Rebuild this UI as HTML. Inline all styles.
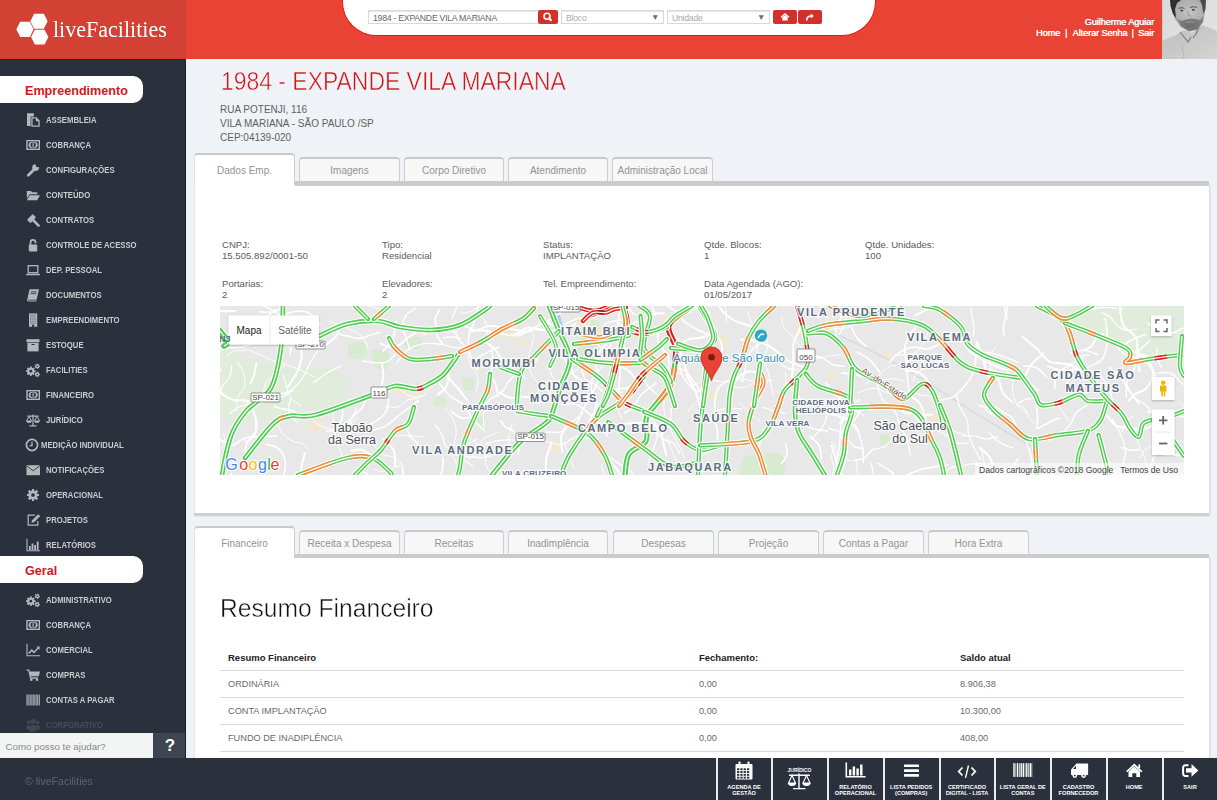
<!DOCTYPE html><html><head><meta charset="utf-8"><style>*{box-sizing:border-box;margin:0;padding:0}
html,body{width:1217px;height:800px;overflow:hidden;background:#eff2f7;font-family:"Liberation Sans",sans-serif;position:relative}
.a{position:absolute;white-space:nowrap}
#hdr{position:absolute;left:0;top:0;width:1217px;height:59px;background:#e94335}
#logo{position:absolute;left:0;top:0;width:186px;height:59px;background:#d34134}
#pill{position:absolute;left:342px;top:-40px;width:534px;height:76px;background:#fff;border-radius:0 0 34px 34px;border:1px solid #e3190f;border-top:none}
.inp{position:absolute;top:10px;height:14px;background:#fff;border:1px solid #d9d9d9;box-shadow:inset 0 1px 1px #e4e4e4;font-size:8.7px;color:#666;line-height:15px;padding-left:4px;white-space:nowrap;overflow:hidden;letter-spacing:-0.25px}
.sel .arr{position:absolute;right:3.5px;top:-1.5px;font-size:8.5px;color:#6f6f6f;letter-spacing:0}
.rbtn{position:absolute;top:10px;height:14px;background:#d3302c;border-radius:2px}
#photo{position:absolute;left:1162px;top:0;width:55px;height:59px;background:#c8c8c8;overflow:hidden}
#side{position:absolute;left:0;top:59px;width:186px;height:699px;background:#2b313c;border-right:1.5px solid #18222e;border-top:1px solid #1d2a36}
.sec{position:absolute;left:0;width:143px;height:27px;background:#fff;border-radius:0 10px 10px 0;color:#d5171d;font-weight:bold;font-size:12.6px;line-height:31px;padding-left:25px;white-space:nowrap}
.mi{position:absolute;left:46px;font-size:8.3px;font-weight:bold;color:#c9cbcf;line-height:12px;white-space:nowrap;transform-origin:0 0;transform:scaleX(.93)}
.ic{position:absolute;left:27px;width:14px;height:14px}
.ic svg{display:block}
#chat{position:absolute;left:0;top:733px;width:153px;height:25px;background:#f3f4f4;color:#8a8a8a;font-size:9.7px;line-height:27.5px;padding-left:5.5px}
#qbtn{position:absolute;left:153px;top:733px;width:32px;height:25px;background:#3f4550;color:#fff;font-weight:bold;font-size:17px;line-height:26px;text-align:center;padding-left:2px}
#title{left:221px;top:65.5px;font-size:25px;color:#cf1419;-webkit-text-stroke:0.5px #eff2f7;line-height:30px;transform-origin:0 0;transform:scaleX(.917)}
.addr{left:220px;font-size:10px;color:#5f5f5f;line-height:12px;margin-top:2px}
.panel{position:absolute;background:#fff;box-shadow:1px 0 2px rgba(0,0,0,.12);border-left:1px solid #e3e6ea}
.band{position:absolute;height:4.5px;background:#cbcbcb}
.band2{position:absolute;height:2.5px;background:#d0d0d0}
.tab{position:absolute;height:24px;background:#f7f7f7;border:1.5px solid #cfcfcf;border-top:2.5px solid #c9c9c9;border-bottom:none;border-radius:4px 4px 0 0;color:#939393;font-size:10px;text-align:center;line-height:24px;white-space:nowrap;overflow:hidden}
.tab.act{background:#fff;height:32px;border-bottom:none;border-left:1px solid #dfe2e6}
.lbl{position:absolute;font-size:9.6px;color:#5c5c5c;line-height:11px;white-space:nowrap;margin-top:0.5px}
#map{position:absolute;left:220px;top:306px;width:964px;height:169px;background:#e5e3df;overflow:hidden}
#resumo{left:220px;top:592.5px;transform-origin:0 0;transform:scaleX(.985);font-size:25px;color:#111;-webkit-text-stroke:0.45px #fff;line-height:30px}
.th{font-size:9.5px;font-weight:bold;color:#222;line-height:11px}
.row{position:absolute;left:220px;width:964px;height:1px;background:#d8d8d8}
.td{font-size:9.2px;color:#6a6a6a;line-height:11px}
#foot{position:absolute;left:0;top:758px;width:1217px;height:42px;background:#2b313c}
#copy{left:25px;top:775px;font-size:11px;color:#5d6470;line-height:13px;transform-origin:0 0;transform:scaleX(.96)}
.sep{position:absolute;top:758px;width:2px;height:42px;background:#e9ebee}
.fbi{position:absolute;top:762px;width:54px;height:22px}
.fbt{top:783.5px;width:54px;color:#fff;font-size:5.6px;font-weight:bold;text-align:center;line-height:6px}
.hl{font-size:9.2px;color:#fff;line-height:11px;letter-spacing:-0.1px;text-shadow:0.35px 0 0 #fff}
</style></head><body>
<div id="hdr"></div><div id="logo"></div>
<svg style="position:absolute;left:0;top:0" width="60" height="59"><polygon points="16.35,29.30 20.18,21.70 29.82,21.70 33.65,29.30 29.82,36.90 20.18,36.90" fill="#fff"/><polygon points="30.35,21.30 34.17,13.80 43.83,13.80 47.65,21.30 43.83,28.80 34.17,28.80" fill="#fff"/><polygon points="31.05,37.10 34.88,29.70 44.53,29.70 48.35,37.10 44.53,44.50 34.88,44.50" fill="#fff"/></svg>
<div class="a" style="left:52.5px;top:16px;font:23.5px 'Liberation Serif',serif;color:#fff;line-height:26px;transform-origin:0 0;transform:scaleX(.937)">liveFacilities</div>
<div id="pill"></div>
<div class="inp" style="left:368px;width:171px">1984 - EXPANDE VILA MARIANA</div>
<div class="rbtn" style="left:538px;width:20px"><svg width="20" height="14" viewBox="0 0 20 14"><circle cx="9" cy="6.2" r="3" stroke="#fff" stroke-width="1.6" fill="none"/><path d="M11.1 8.3L13 10.2" stroke="#fff" stroke-width="2" stroke-linecap="round"/></svg></div>
<div class="inp sel" style="left:561px;width:103px;color:#aaa">Bloco<span class="arr">&#9660;</span></div>
<div class="inp sel" style="left:667px;width:103px;color:#aaa">Unidade<span class="arr">&#9660;</span></div>
<div class="rbtn" style="left:773px;width:24px"><svg width="24" height="14" viewBox="0 0 24 14"><path d="M8 7.2L12 3.8L16 7.2" stroke="#fff" stroke-width="1.2" fill="none"/><path d="M9.3 7.2L12 5L14.7 7.2V10.4H9.3z" fill="#fff"/></svg></div>
<div class="rbtn" style="left:798px;width:24px"><svg width="24" height="14" viewBox="0 0 24 14"><path d="M8.6 10.5C8.8 7.4 10.5 6 13.3 6" stroke="#fff" stroke-width="1.7" fill="none"/><path d="M12.8 3.5L15.8 6.1L12.8 8.6z" fill="#fff"/></svg></div>
<div class="a hl" style="right:63px;top:17px">Guilherme Aguiar</div>
<div class="a hl" style="left:1036px;top:28px">Home</div>
<div class="a hl" style="left:1065px;top:28px">|</div>
<div class="a hl" style="left:1072.5px;top:28px">Alterar Senha</div>
<div class="a hl" style="left:1131.5px;top:28px">|</div>
<div class="a hl" style="right:63px;top:28px">Sair</div>
<div id="photo"><svg width="55" height="59" viewBox="0 0 55 59">
<defs><linearGradient id="pbg" x1="0" y1="0" x2="1" y2="1"><stop offset="0" stop-color="#d9d9d9"/><stop offset="1" stop-color="#e6e6e6"/></linearGradient>
<radialGradient id="pface" cx="0.55" cy="0.4" r="0.6"><stop offset="0" stop-color="#c4c4c4"/><stop offset="0.7" stop-color="#adadad"/><stop offset="1" stop-color="#8f8f8f"/></radialGradient>
<linearGradient id="pshirt" x1="0" y1="0" x2="1" y2="1"><stop offset="0" stop-color="#bdbdbd"/><stop offset="1" stop-color="#d4d4d4"/></linearGradient>
<radialGradient id="pbeard" cx="0.5" cy="0.6" r="0.6"><stop offset="0" stop-color="#6a6a6a"/><stop offset="1" stop-color="#858585"/></radialGradient></defs>
<rect width="55" height="59" fill="url(#pbg)"/>
<rect x="0" y="0" width="1.2" height="59" fill="#c9d0d4"/>
<path d="M0 41 L14 35 L22 30 L30 33 L40 25 L48 28 L55 31 L55 59 L0 59z" fill="url(#pshirt)"/>
<path d="M18 32 L26 42 L29 37 M31 38 L34 34 L37 27" stroke="#7d7d7d" stroke-width="1.2" fill="none"/>
<path d="M20 44 L22 59" stroke="#b0b0b0" stroke-width="0.8"/>
<path d="M9 0 H42 L43 12 L41 22 L36 29 L27 31 L19 27 L13 19 L10 9z" fill="url(#pface)"/>
<path d="M8 0 H19 L15 3 L13 9 L14 18 L11 14 L8.5 6z" fill="#2f2f2f"/>
<path d="M38 0 H44 L43.5 9 L41.5 14 L40 5z" fill="#4a4a4a"/>
<path d="M14 17 L19 26 L27 31.5 L35 29.5 L41 22 L41.5 16 L38 20 L34 19 L29 18.5 L24 19.5 L20 21 L17 20z" fill="url(#pbeard)"/>
<path d="M24 22.5 Q28.5 21.5 32 22.5" stroke="#9a9a9a" stroke-width="1" fill="none"/>
<path d="M16.5 8.5 Q19.5 7 22.5 8.5 M28 7.5 Q31.5 6 35 7.5" stroke="#5a5a5a" stroke-width="1.1" fill="none"/>
<ellipse cx="19.8" cy="10.6" rx="1.5" ry="0.9" fill="#3a3a3a"/><ellipse cx="31.2" cy="9.8" rx="1.5" ry="0.9" fill="#3a3a3a"/>
<path d="M26 11 L26.5 15.5 L29.5 16.2" stroke="#909090" stroke-width="0.9" fill="none"/>
</svg></div>
<div id="side"></div>
<div class="sec" style="top:76px">Empreendimento</div>
<div class="mi" style="top:114px;left:46px">ASSEMBLEIA</div>
<div class="ic" style="top:113px;left:26px"><svg width="14" height="14" viewBox="0 0 14 14"><path d="M1 0.3h6.8v3.2H4.6v9.5H1z" fill="#b4b7bc"/><path d="M5.3 4.3h5.2l3.2 3.2v6.3H5.3z" fill="#b4b7bc"/><path d="M6.6 5.6h3.2v2.6h2.6v4.3H6.6z" fill="#2b313c"/></svg></div>
<div class="mi" style="top:139px;left:46px">COBRANÇA</div>
<div class="ic" style="top:138px;left:26px"><svg width="14" height="14" viewBox="0 0 14 14"><rect x="0.3" y="2" width="13.7" height="10" fill="#b4b7bc"/><rect x="1.7" y="3.4" width="10.9" height="7.2" fill="#2b313c"/><ellipse cx="7.15" cy="7" rx="4.6" ry="3.2" fill="#b4b7bc"/><ellipse cx="7.15" cy="7" rx="2.6" ry="2.4" fill="#2b313c"/><rect x="6.5" y="5.2" width="1.3" height="3.6" fill="#b4b7bc"/></svg></div>
<div class="mi" style="top:164px;left:46px">CONFIGURAÇÕES</div>
<div class="ic" style="top:163px;left:26px"><svg width="14" height="14" viewBox="0 0 14 14"><path d="M2.3 12.3L7.6 7" stroke="#b4b7bc" stroke-width="2.8" stroke-linecap="round"/><circle cx="9.6" cy="4.6" r="3.4" fill="#b4b7bc"/><path d="M9.2 0.4L10.6 4.2L14.4 3.6V0.3z" fill="#2b313c"/></svg></div>
<div class="mi" style="top:189px;left:46px">CONTEÚDO</div>
<div class="ic" style="top:188px;left:26px"><svg width="14" height="14" viewBox="0 0 14 14"><path d="M0.8 3h4.2l1.1 1.3h5.2v2H3.6L0.8 10.5z" fill="#b4b7bc"/><path d="M3.7 7.3H14l-2.8 5H0.8z" fill="#b4b7bc"/></svg></div>
<div class="mi" style="top:214px;left:46px">CONTRATOS</div>
<div class="ic" style="top:213px;left:26px"><svg width="14" height="14" viewBox="0 0 14 14"><g transform="rotate(-45 5.5 5.5)"><rect x="1.5" y="3.2" width="8" height="4.8" rx="0.6" fill="#b4b7bc"/></g><path d="M7 7L12.6 12.6" stroke="#b4b7bc" stroke-width="2.6" stroke-linecap="round"/></svg></div>
<div class="mi" style="top:239px;left:46px">CONTROLE DE ACESSO</div>
<div class="ic" style="top:238px;left:26px"><svg width="14" height="14" viewBox="0 0 14 14"><rect x="2.8" y="6.6" width="8.4" height="6.8" rx="0.8" fill="#b4b7bc"/><path d="M4.5 6.8V4.4a2.5 2.5 0 0 1 5 0v0.8" stroke="#b4b7bc" stroke-width="1.7" fill="none"/></svg></div>
<div class="mi" style="top:264px;left:46px">DEP. PESSOAL</div>
<div class="ic" style="top:263px;left:26px"><svg width="14" height="14" viewBox="0 0 14 14"><rect x="2.2" y="2.7" width="9.6" height="7" stroke="#b4b7bc" stroke-width="1.3" fill="none"/><rect x="0" y="10.7" width="14" height="1.6" rx="0.5" fill="#b4b7bc"/></svg></div>
<div class="mi" style="top:289px;left:46px">DOCUMENTOS</div>
<div class="ic" style="top:288px;left:26px"><svg width="14" height="14" viewBox="0 0 14 14"><path d="M3.6 1.2h9.4l-2.4 10.5H1.2z" fill="#b4b7bc"/><path d="M1.2 11.7L1.8 13h8.8" stroke="#b4b7bc" stroke-width="1" fill="none"/><path d="M5 3.8h5.6M4.5 5.6h5.6" stroke="#2b313c" stroke-width="0.8"/></svg></div>
<div class="mi" style="top:314px;left:46px">EMPREENDIMENTO</div>
<div class="ic" style="top:313px;left:26px"><svg width="14" height="14" viewBox="0 0 14 14"><rect x="3" y="0.4" width="8.2" height="13.4" fill="#b4b7bc"/><rect x="4.3" y="1.6" width="1.2" height="1.2" fill="#2b313c" opacity="0.55"/><rect x="4.3" y="3.6" width="1.2" height="1.2" fill="#2b313c" opacity="0.55"/><rect x="4.3" y="5.6" width="1.2" height="1.2" fill="#2b313c" opacity="0.55"/><rect x="4.3" y="7.6" width="1.2" height="1.2" fill="#2b313c" opacity="0.55"/><rect x="4.3" y="9.6" width="1.2" height="1.2" fill="#2b313c" opacity="0.55"/><rect x="6.4" y="1.6" width="1.2" height="1.2" fill="#2b313c" opacity="0.55"/><rect x="6.4" y="3.6" width="1.2" height="1.2" fill="#2b313c" opacity="0.55"/><rect x="6.4" y="5.6" width="1.2" height="1.2" fill="#2b313c" opacity="0.55"/><rect x="6.4" y="7.6" width="1.2" height="1.2" fill="#2b313c" opacity="0.55"/><rect x="6.4" y="9.6" width="1.2" height="1.2" fill="#2b313c" opacity="0.55"/><rect x="8.5" y="1.6" width="1.2" height="1.2" fill="#2b313c" opacity="0.55"/><rect x="8.5" y="3.6" width="1.2" height="1.2" fill="#2b313c" opacity="0.55"/><rect x="8.5" y="5.6" width="1.2" height="1.2" fill="#2b313c" opacity="0.55"/><rect x="8.5" y="7.6" width="1.2" height="1.2" fill="#2b313c" opacity="0.55"/><rect x="8.5" y="9.6" width="1.2" height="1.2" fill="#2b313c" opacity="0.55"/><rect x="6" y="11.7" width="2.2" height="2.1" fill="#2b313c"/></svg></div>
<div class="mi" style="top:339px;left:46px">ESTOQUE</div>
<div class="ic" style="top:338px;left:26px"><svg width="14" height="14" viewBox="0 0 14 14"><rect x="0.5" y="1.2" width="13" height="3" fill="#b4b7bc"/><rect x="1.4" y="4.8" width="11.2" height="8.6" fill="#b4b7bc"/><rect x="5.4" y="6" width="3.2" height="1" fill="#2b313c"/></svg></div>
<div class="mi" style="top:364px;left:46px">FACILITIES</div>
<div class="ic" style="top:363px;left:26px"><svg width="14" height="14" viewBox="0 0 14 14"><rect x="4.03" y="3.65" width="1.54" height="9.10" fill="#b4b7bc" transform="rotate(0.0 4.8 8.2)"/><rect x="4.03" y="3.65" width="1.54" height="9.10" fill="#b4b7bc" transform="rotate(45.0 4.8 8.2)"/><rect x="4.03" y="3.65" width="1.54" height="9.10" fill="#b4b7bc" transform="rotate(90.0 4.8 8.2)"/><rect x="4.03" y="3.65" width="1.54" height="9.10" fill="#b4b7bc" transform="rotate(135.0 4.8 8.2)"/><rect x="4.03" y="3.65" width="1.54" height="9.10" fill="#b4b7bc" transform="rotate(180.0 4.8 8.2)"/><rect x="4.03" y="3.65" width="1.54" height="9.10" fill="#b4b7bc" transform="rotate(225.0 4.8 8.2)"/><rect x="4.03" y="3.65" width="1.54" height="9.10" fill="#b4b7bc" transform="rotate(270.0 4.8 8.2)"/><rect x="4.03" y="3.65" width="1.54" height="9.10" fill="#b4b7bc" transform="rotate(315.0 4.8 8.2)"/><circle cx="4.8" cy="8.2" r="3.5" fill="#b4b7bc"/><circle cx="4.8" cy="8.2" r="1.40" fill="#2b313c"/><rect x="10.88" y="0.83" width="0.84" height="4.94" fill="#b4b7bc" transform="rotate(0.0 11.3 3.3)"/><rect x="10.88" y="0.83" width="0.84" height="4.94" fill="#b4b7bc" transform="rotate(45.0 11.3 3.3)"/><rect x="10.88" y="0.83" width="0.84" height="4.94" fill="#b4b7bc" transform="rotate(90.0 11.3 3.3)"/><rect x="10.88" y="0.83" width="0.84" height="4.94" fill="#b4b7bc" transform="rotate(135.0 11.3 3.3)"/><rect x="10.88" y="0.83" width="0.84" height="4.94" fill="#b4b7bc" transform="rotate(180.0 11.3 3.3)"/><rect x="10.88" y="0.83" width="0.84" height="4.94" fill="#b4b7bc" transform="rotate(225.0 11.3 3.3)"/><rect x="10.88" y="0.83" width="0.84" height="4.94" fill="#b4b7bc" transform="rotate(270.0 11.3 3.3)"/><rect x="10.88" y="0.83" width="0.84" height="4.94" fill="#b4b7bc" transform="rotate(315.0 11.3 3.3)"/><circle cx="11.3" cy="3.3" r="1.9" fill="#b4b7bc"/><circle cx="11.3" cy="3.3" r="0.76" fill="#2b313c"/><rect x="10.88" y="8.93" width="0.84" height="4.94" fill="#b4b7bc" transform="rotate(0.0 11.3 11.4)"/><rect x="10.88" y="8.93" width="0.84" height="4.94" fill="#b4b7bc" transform="rotate(45.0 11.3 11.4)"/><rect x="10.88" y="8.93" width="0.84" height="4.94" fill="#b4b7bc" transform="rotate(90.0 11.3 11.4)"/><rect x="10.88" y="8.93" width="0.84" height="4.94" fill="#b4b7bc" transform="rotate(135.0 11.3 11.4)"/><rect x="10.88" y="8.93" width="0.84" height="4.94" fill="#b4b7bc" transform="rotate(180.0 11.3 11.4)"/><rect x="10.88" y="8.93" width="0.84" height="4.94" fill="#b4b7bc" transform="rotate(225.0 11.3 11.4)"/><rect x="10.88" y="8.93" width="0.84" height="4.94" fill="#b4b7bc" transform="rotate(270.0 11.3 11.4)"/><rect x="10.88" y="8.93" width="0.84" height="4.94" fill="#b4b7bc" transform="rotate(315.0 11.3 11.4)"/><circle cx="11.3" cy="11.4" r="1.9" fill="#b4b7bc"/><circle cx="11.3" cy="11.4" r="0.76" fill="#2b313c"/></svg></div>
<div class="mi" style="top:389px;left:46px">FINANCEIRO</div>
<div class="ic" style="top:388px;left:26px"><svg width="14" height="14" viewBox="0 0 14 14"><rect x="0.3" y="2" width="13.7" height="10" fill="#b4b7bc"/><rect x="1.7" y="3.4" width="10.9" height="7.2" fill="#2b313c"/><ellipse cx="7.15" cy="7" rx="4.6" ry="3.2" fill="#b4b7bc"/><ellipse cx="7.15" cy="7" rx="2.6" ry="2.4" fill="#2b313c"/><rect x="6.5" y="5.2" width="1.3" height="3.6" fill="#b4b7bc"/></svg></div>
<div class="mi" style="top:414px;left:46px">JURÍDICO</div>
<div class="ic" style="top:413px;left:26px"><svg width="14" height="14" viewBox="0 0 14 14"><path d="M7 1.5V12.5M3.5 12.8h7M1.5 3.2h11" stroke="#b4b7bc" stroke-width="1.2" fill="none"/><path d="M3 3.2L0.5 8h5z M11 3.2L8.5 8h5z" stroke="#b4b7bc" stroke-width="1" fill="none"/><path d="M0.3 8h5.4a2.7 2 0 0 1-5.4 0z M8.3 8h5.4a2.7 2 0 0 1-5.4 0z" fill="#b4b7bc"/></svg></div>
<div class="mi" style="top:439px;left:41px">MEDIÇÃO INDIVIDUAL</div>
<div class="ic" style="top:438px;left:25px"><svg width="14" height="14" viewBox="0 0 14 14"><circle cx="7" cy="7" r="5.6" stroke="#b4b7bc" stroke-width="1.7" fill="none"/><path d="M7 3.8V7.6H4.6" stroke="#b4b7bc" stroke-width="1.3" fill="none"/></svg></div>
<div class="mi" style="top:464px;left:46px">NOTIFICAÇÕES</div>
<div class="ic" style="top:463px;left:26px"><svg width="14" height="14" viewBox="0 0 14 14"><rect x="0.5" y="2.2" width="13.5" height="10" fill="#b4b7bc"/><path d="M0.5 2.6L7.25 7.8L14 2.6" stroke="#2b313c" stroke-width="0.9" fill="none"/></svg></div>
<div class="mi" style="top:489px;left:46px">OPERACIONAL</div>
<div class="ic" style="top:488px;left:26px"><svg width="14" height="14" viewBox="0 0 14 14"><rect x="5.99" y="1.02" width="2.02" height="11.96" fill="#b4b7bc" transform="rotate(0.0 7 7)"/><rect x="5.99" y="1.02" width="2.02" height="11.96" fill="#b4b7bc" transform="rotate(45.0 7 7)"/><rect x="5.99" y="1.02" width="2.02" height="11.96" fill="#b4b7bc" transform="rotate(90.0 7 7)"/><rect x="5.99" y="1.02" width="2.02" height="11.96" fill="#b4b7bc" transform="rotate(135.0 7 7)"/><rect x="5.99" y="1.02" width="2.02" height="11.96" fill="#b4b7bc" transform="rotate(180.0 7 7)"/><rect x="5.99" y="1.02" width="2.02" height="11.96" fill="#b4b7bc" transform="rotate(225.0 7 7)"/><rect x="5.99" y="1.02" width="2.02" height="11.96" fill="#b4b7bc" transform="rotate(270.0 7 7)"/><rect x="5.99" y="1.02" width="2.02" height="11.96" fill="#b4b7bc" transform="rotate(315.0 7 7)"/><circle cx="7" cy="7" r="4.6" fill="#b4b7bc"/><circle cx="7" cy="7" r="1.84" fill="#2b313c"/></svg></div>
<div class="mi" style="top:514px;left:46px">PROJETOS</div>
<div class="ic" style="top:513px;left:26px"><svg width="14" height="14" viewBox="0 0 14 14"><path d="M9 2.2H2.2v10h9.6V8" stroke="#b4b7bc" stroke-width="1.2" fill="none"/><path d="M5.5 9.8l0.6-2.6l6-6l2 2l-6 6z" fill="#b4b7bc"/></svg></div>
<div class="mi" style="top:539px;left:46px">RELATÓRIOS</div>
<div class="ic" style="top:538px;left:26px"><svg width="14" height="14" viewBox="0 0 14 14"><path d="M1 0.8V12.8H14" stroke="#b4b7bc" stroke-width="1.1" fill="none"/><rect x="3" y="8" width="1.8" height="4" fill="#b4b7bc"/><rect x="5.6" y="5.5" width="1.8" height="6.5" fill="#b4b7bc"/><rect x="8.2" y="7" width="1.8" height="5" fill="#b4b7bc"/><rect x="10.8" y="3.5" width="1.8" height="8.5" fill="#b4b7bc"/></svg></div>
<div class="sec" style="top:556px">Geral</div>
<div class="mi" style="top:594px">ADMINISTRATIVO</div>
<div class="ic" style="top:593px;left:26px"><svg width="14" height="14" viewBox="0 0 14 14"><rect x="4.03" y="3.65" width="1.54" height="9.10" fill="#b4b7bc" transform="rotate(0.0 4.8 8.2)"/><rect x="4.03" y="3.65" width="1.54" height="9.10" fill="#b4b7bc" transform="rotate(45.0 4.8 8.2)"/><rect x="4.03" y="3.65" width="1.54" height="9.10" fill="#b4b7bc" transform="rotate(90.0 4.8 8.2)"/><rect x="4.03" y="3.65" width="1.54" height="9.10" fill="#b4b7bc" transform="rotate(135.0 4.8 8.2)"/><rect x="4.03" y="3.65" width="1.54" height="9.10" fill="#b4b7bc" transform="rotate(180.0 4.8 8.2)"/><rect x="4.03" y="3.65" width="1.54" height="9.10" fill="#b4b7bc" transform="rotate(225.0 4.8 8.2)"/><rect x="4.03" y="3.65" width="1.54" height="9.10" fill="#b4b7bc" transform="rotate(270.0 4.8 8.2)"/><rect x="4.03" y="3.65" width="1.54" height="9.10" fill="#b4b7bc" transform="rotate(315.0 4.8 8.2)"/><circle cx="4.8" cy="8.2" r="3.5" fill="#b4b7bc"/><circle cx="4.8" cy="8.2" r="1.40" fill="#2b313c"/><rect x="10.88" y="0.83" width="0.84" height="4.94" fill="#b4b7bc" transform="rotate(0.0 11.3 3.3)"/><rect x="10.88" y="0.83" width="0.84" height="4.94" fill="#b4b7bc" transform="rotate(45.0 11.3 3.3)"/><rect x="10.88" y="0.83" width="0.84" height="4.94" fill="#b4b7bc" transform="rotate(90.0 11.3 3.3)"/><rect x="10.88" y="0.83" width="0.84" height="4.94" fill="#b4b7bc" transform="rotate(135.0 11.3 3.3)"/><rect x="10.88" y="0.83" width="0.84" height="4.94" fill="#b4b7bc" transform="rotate(180.0 11.3 3.3)"/><rect x="10.88" y="0.83" width="0.84" height="4.94" fill="#b4b7bc" transform="rotate(225.0 11.3 3.3)"/><rect x="10.88" y="0.83" width="0.84" height="4.94" fill="#b4b7bc" transform="rotate(270.0 11.3 3.3)"/><rect x="10.88" y="0.83" width="0.84" height="4.94" fill="#b4b7bc" transform="rotate(315.0 11.3 3.3)"/><circle cx="11.3" cy="3.3" r="1.9" fill="#b4b7bc"/><circle cx="11.3" cy="3.3" r="0.76" fill="#2b313c"/><rect x="10.88" y="8.93" width="0.84" height="4.94" fill="#b4b7bc" transform="rotate(0.0 11.3 11.4)"/><rect x="10.88" y="8.93" width="0.84" height="4.94" fill="#b4b7bc" transform="rotate(45.0 11.3 11.4)"/><rect x="10.88" y="8.93" width="0.84" height="4.94" fill="#b4b7bc" transform="rotate(90.0 11.3 11.4)"/><rect x="10.88" y="8.93" width="0.84" height="4.94" fill="#b4b7bc" transform="rotate(135.0 11.3 11.4)"/><rect x="10.88" y="8.93" width="0.84" height="4.94" fill="#b4b7bc" transform="rotate(180.0 11.3 11.4)"/><rect x="10.88" y="8.93" width="0.84" height="4.94" fill="#b4b7bc" transform="rotate(225.0 11.3 11.4)"/><rect x="10.88" y="8.93" width="0.84" height="4.94" fill="#b4b7bc" transform="rotate(270.0 11.3 11.4)"/><rect x="10.88" y="8.93" width="0.84" height="4.94" fill="#b4b7bc" transform="rotate(315.0 11.3 11.4)"/><circle cx="11.3" cy="11.4" r="1.9" fill="#b4b7bc"/><circle cx="11.3" cy="11.4" r="0.76" fill="#2b313c"/></svg></div>
<div class="mi" style="top:619px">COBRANÇA</div>
<div class="ic" style="top:618px;left:26px"><svg width="14" height="14" viewBox="0 0 14 14"><rect x="0.3" y="2" width="13.7" height="10" fill="#b4b7bc"/><rect x="1.7" y="3.4" width="10.9" height="7.2" fill="#2b313c"/><ellipse cx="7.15" cy="7" rx="4.6" ry="3.2" fill="#b4b7bc"/><ellipse cx="7.15" cy="7" rx="2.6" ry="2.4" fill="#2b313c"/><rect x="6.5" y="5.2" width="1.3" height="3.6" fill="#b4b7bc"/></svg></div>
<div class="mi" style="top:644px">COMERCIAL</div>
<div class="ic" style="top:643px;left:26px"><svg width="14" height="14" viewBox="0 0 14 14"><path d="M1 0.8V12.8H14" stroke="#b4b7bc" stroke-width="1.1" fill="none"/><path d="M2.6 10.6L5.8 7.2L8 9.4L12.6 4.6" stroke="#b4b7bc" stroke-width="1.5" fill="none"/><path d="M10.4 3.6h3.2v3.2z" fill="#b4b7bc"/></svg></div>
<div class="mi" style="top:669px">COMPRAS</div>
<div class="ic" style="top:668px;left:26px"><svg width="14" height="14" viewBox="0 0 14 14"><path d="M0.5 2.2h2.3l1.8 7.8h7.2" stroke="#b4b7bc" stroke-width="1.3" fill="none"/><path d="M3.5 3.5H14L12.8 8.2H4.5z" fill="#b4b7bc"/><circle cx="5.3" cy="11.8" r="1.3" fill="#b4b7bc"/><circle cx="11" cy="11.8" r="1.3" fill="#b4b7bc"/></svg></div>
<div class="mi" style="top:694px">CONTAS A PAGAR</div>
<div class="ic" style="top:693px;left:26px"><svg width="14" height="14" viewBox="0 0 14 14"><rect x="0.5" y="1.5" width="1.2" height="11" fill="#b4b7bc"/><rect x="2.3" y="1.5" width="0.6" height="11" fill="#b4b7bc"/><rect x="3.5" y="1.5" width="1.2" height="11" fill="#b4b7bc"/><rect x="5.3" y="1.5" width="0.6" height="11" fill="#b4b7bc"/><rect x="6.5" y="1.5" width="1.2" height="11" fill="#b4b7bc"/><rect x="8.3" y="1.5" width="1.2" height="11" fill="#b4b7bc"/><rect x="10" y="1.5" width="0.6" height="11" fill="#b4b7bc"/><rect x="11.2" y="1.5" width="1.2" height="11" fill="#b4b7bc"/><rect x="13" y="1.5" width="0.8" height="11" fill="#b4b7bc"/></svg></div>
<div class="mi" style="top:719px ;opacity:.17">CORPORATIVO</div>
<div class="ic" style="top:718px;left:26px ;opacity:.17"><svg width="14" height="14" viewBox="0 0 14 14"><circle cx="7" cy="3.6" r="2.5" fill="#b4b7bc"/><circle cx="2.5" cy="4.4" r="1.9" fill="#b4b7bc"/><circle cx="11.5" cy="4.4" r="1.9" fill="#b4b7bc"/><path d="M3.5 13.5v-3.5a3.5 3 0 0 1 7 0v3.5z M0 11.5v-2.5a2.4 2.2 0 0 1 3.8-1.4v3.9z M14 11.5v-2.5a2.4 2.2 0 0 0-3.8-1.4v3.9z" fill="#b4b7bc"/></svg></div>
<div id="chat">Como posso te ajudar?</div><div id="qbtn">?</div>
<div class="a" id="title">1984 - EXPANDE VILA MARIANA</div>
<div class="a addr" style="top:102px">RUA POTENJI, 116</div>
<div class="a addr" style="top:116px">VILA MARIANA - SÃO PAULO /SP</div>
<div class="a addr" style="top:130px">CEP:04139-020</div>
<div class="panel" style="left:194px;top:185px;width:1015px;height:331px"></div>
<div class="band" style="left:295px;top:181px;width:914px"></div>
<div class="band2" style="left:194px;top:513px;width:1015px"></div>
<div class="tab act" style="left:194px;top:153px;width:101px;padding-top:4px;line-height:24px">Dados Emp.</div>
<div class="tab" style="left:299px;top:157px;width:101px">Imagens</div>
<div class="tab" style="left:404px;top:157px;width:100px">Corpo Diretivo</div>
<div class="tab" style="left:508px;top:157px;width:100px">Atendimento</div>
<div class="tab" style="left:612px;top:157px;width:101px">Administração Local</div>
<div class="lbl" style="left:222px;top:238px">CNPJ:<br>15.505.892/0001-50</div>
<div class="lbl" style="left:382px;top:238px">Tipo:<br>Residencial</div>
<div class="lbl" style="left:543px;top:238px">Status:<br>IMPLANTAÇÃO</div>
<div class="lbl" style="left:704px;top:238px">Qtde. Blocos:<br>1</div>
<div class="lbl" style="left:865px;top:238px">Qtde. Unidades:<br>100</div>
<div class="lbl" style="left:222px;top:277px">Portarias:<br>2</div>
<div class="lbl" style="left:382px;top:277px">Elevadores:<br>2</div>
<div class="lbl" style="left:543px;top:277px">Tel. Empreendimento:<br></div>
<div class="lbl" style="left:704px;top:277px">Data Agendada (AGO):<br>01/05/2017</div>
<div id="map"><svg width="964" height="169" viewBox="0 0 964 169" style="display:block">
<rect width="964" height="169" fill="#e8e8e8"/>
<path d="M0.0 40.0 C6.7 42.5 25.0 51.7 40.0 55.0 C55.0 58.3 75.8 57.5 90.0 60.0 C104.2 62.5 120.0 63.3 125.0 70.0 C130.0 76.7 129.2 94.2 120.0 100.0 C110.8 105.8 83.3 102.5 70.0 105.0 C56.7 107.5 51.7 114.2 40.0 115.0 C28.3 115.8 6.7 122.5 0.0 110.0 C-6.7 97.5 0.0 51.7 0.0 40.0Z" fill="#e1ecdc"/>
<path d="M128.0 38.0 C130.8 37.7 142.0 34.0 145.0 36.0 C148.0 38.0 148.5 47.3 146.0 50.0 C143.5 52.7 133.0 54.0 130.0 52.0 C127.0 50.0 128.3 40.3 128.0 38.0Z" fill="#d6ebd0"/>
<path d="M152.0 44.0 C154.7 44.3 165.5 43.0 168.0 46.0 C170.5 49.0 169.2 59.5 167.0 62.0 C164.8 64.5 157.5 64.0 155.0 61.0 C152.5 58.0 152.5 46.8 152.0 44.0Z" fill="#d6ebd0"/>
<path d="M183.0 33.0 C185.8 32.7 197.3 29.5 200.0 31.0 C202.7 32.5 201.3 40.2 199.0 42.0 C196.7 43.8 188.7 43.5 186.0 42.0 C183.3 40.5 183.5 34.5 183.0 33.0Z" fill="#d6ebd0"/>
<path d="M214.0 92.0 C215.8 91.8 223.3 89.7 225.0 91.0 C226.7 92.3 225.7 98.7 224.0 100.0 C222.3 101.3 216.7 100.3 215.0 99.0 C213.3 97.7 214.2 93.2 214.0 92.0Z" fill="#d6ebd0"/>
<path d="M358.0 18.0 C361.3 17.7 374.3 10.7 378.0 16.0 C381.7 21.3 383.0 44.0 380.0 50.0 C377.0 56.0 363.7 57.3 360.0 52.0 C356.3 46.7 358.3 23.7 358.0 18.0Z" fill="#d6ebd0"/>
<path d="M845.0 0.0 C864.8 0.0 944.2 -8.3 964.0 0.0 C983.8 8.3 971.3 41.3 964.0 50.0 C956.7 58.7 934.0 55.3 920.0 52.0 C906.0 48.7 891.7 36.2 880.0 30.0 C868.3 23.8 855.8 20.0 850.0 15.0 C844.2 10.0 845.8 2.5 845.0 0.0Z" fill="#e1ecdc"/>
<path d="M243.0 73.0 C244.8 73.0 252.5 71.2 254.0 73.0 C255.5 74.8 253.7 82.3 252.0 84.0 C250.3 85.7 245.5 84.8 244.0 83.0 C242.5 81.2 243.2 74.7 243.0 73.0Z" fill="#d6ebd0"/>
<path d="M255.0 112.0 C256.7 111.7 263.8 108.7 265.0 110.0 C266.2 111.3 263.5 118.5 262.0 120.0 C260.5 121.5 257.2 120.3 256.0 119.0 C254.8 117.7 255.2 113.2 255.0 112.0Z" fill="#d6ebd0"/>
<path d="M660.0 130.0 C661.3 129.7 666.3 126.7 668.0 128.0 C669.7 129.3 671.2 136.3 670.0 138.0 C668.8 139.7 662.7 139.3 661.0 138.0 C659.3 136.7 660.2 131.3 660.0 130.0Z" fill="#d6ebd0"/>
<path d="M525.0 150.0 C530.8 149.7 553.8 144.8 560.0 148.0 C566.2 151.2 568.3 165.5 562.0 169.0 C555.7 172.5 528.2 172.2 522.0 169.0 C515.8 165.8 524.5 153.2 525.0 150.0Z" fill="#d6ebd0"/>
<rect x="47" y="25" width="12" height="14" rx="2" fill="#f3e8cf" opacity="0.9"/>
<rect x="88" y="116" width="14" height="9" rx="2" fill="#f3e8cf" opacity="0.9"/>
<rect x="168" y="78" width="12" height="8" rx="2" fill="#f3e8cf" opacity="0.9"/>
<rect x="282" y="22" width="14" height="10" rx="2" fill="#f3e8cf" opacity="0.9"/>
<rect x="296" y="34" width="10" height="6" rx="2" fill="#f3e8cf" opacity="0.9"/>
<rect x="354" y="10" width="16" height="12" rx="2" fill="#f3e8cf" opacity="0.9"/>
<rect x="371" y="20" width="12" height="8" rx="2" fill="#f3e8cf" opacity="0.9"/>
<rect x="412" y="25" width="12" height="7" rx="2" fill="#f3e8cf" opacity="0.9"/>
<rect x="440" y="12" width="10" height="10" rx="2" fill="#f3e8cf" opacity="0.9"/>
<rect x="576" y="14" width="8" height="16" rx="2" fill="#f3e8cf" opacity="0.9"/>
<rect x="605" y="12" width="6" height="12" rx="2" fill="#f3e8cf" opacity="0.9"/>
<rect x="487" y="85" width="10" height="8" rx="2" fill="#f3e8cf" opacity="0.9"/>
<rect x="624" y="95" width="10" height="8" rx="2" fill="#f3e8cf" opacity="0.9"/>
<rect x="662" y="44" width="8" height="8" rx="2" fill="#f3e8cf" opacity="0.9"/>
<rect x="606" y="68" width="10" height="6" rx="2" fill="#f3e8cf" opacity="0.9"/>
<rect x="584" y="67" width="8" height="6" rx="2" fill="#f3e8cf" opacity="0.9"/>
<rect x="790" y="58" width="8" height="8" rx="2" fill="#f3e8cf" opacity="0.9"/>
<rect x="845" y="32" width="8" height="6" rx="2" fill="#f3e8cf" opacity="0.9"/>
<rect x="328" y="135" width="14" height="10" rx="2" fill="#f3e8cf" opacity="0.9"/>
<rect x="177" y="83" width="12" height="6" rx="2" fill="#f3e8cf" opacity="0.9"/>
<rect x="190" y="88" width="10" height="6" rx="2" fill="#f3e8cf" opacity="0.9"/>
<rect x="96" y="112" width="8" height="6" rx="2" fill="#f3e8cf" opacity="0.9"/>
<rect x="420" y="40" width="10" height="6" rx="2" fill="#f3e8cf" opacity="0.9"/>
<rect x="500" y="30" width="8" height="12" rx="2" fill="#f3e8cf" opacity="0.9"/>
<rect x="380" y="150" width="10" height="8" rx="2" fill="#f3e8cf" opacity="0.9"/>
<rect x="710" y="110" width="8" height="8" rx="2" fill="#f3e8cf" opacity="0.9"/>
<rect x="470" y="110" width="8" height="6" rx="2" fill="#f3e8cf" opacity="0.9"/>
<path d="M339.0 0.0 C340.2 4.2 343.8 16.2 346.0 25.0 C348.2 33.8 352.5 43.8 352.0 53.0 C351.5 62.2 346.0 70.5 343.0 80.0 C340.0 89.5 336.8 103.7 334.0 110.0 C331.2 116.3 331.7 113.5 326.0 118.0 C320.3 122.5 308.7 128.5 300.0 137.0 C291.3 145.5 278.3 163.7 274.0 169.0" stroke="#a3cff2" stroke-width="3.2" fill="none" transform="translate(-3.5,0)"/>
<path d="M600.0 20.0 C613.3 26.7 653.3 45.0 680.0 60.0 C706.7 75.0 738.3 96.7 760.0 110.0 C781.7 123.3 801.7 135.0 810.0 140.0" stroke="#cfd8e0" stroke-width="1.2" fill="none"/>
<path d="M312.2 25.5 C310.7 25.4 306.1 24.4 303.5 25.2 C300.8 25.9 297.4 29.2 296.2 30.0" stroke="#ffffff" stroke-width="1.3" fill="none" stroke-linecap="round"/>
<path d="M489.2 6.3 C489.1 8.4 487.9 14.8 489.0 18.5 C490.2 22.2 493.8 25.1 496.0 28.5 C498.1 32.0 501.2 35.4 501.9 39.1 C502.7 42.9 501.4 47.3 500.6 51.3 C499.7 55.2 497.6 61.0 497.0 62.9" stroke="#ffffff" stroke-width="2.0" fill="none" stroke-linecap="round"/>
<path d="M562.0 10.5 C562.2 11.9 561.9 16.3 562.9 18.9 C563.8 21.5 566.0 23.6 567.8 25.8 C569.6 28.0 571.6 30.0 573.5 32.2 C575.3 34.3 577.1 36.5 578.8 38.8 C580.4 41.1 582.6 44.8 583.4 45.9" stroke="#ffffff" stroke-width="1.0" fill="none" stroke-linecap="round"/>
<path d="M540.1 115.3 C538.3 113.8 532.9 109.5 529.5 106.4 C526.0 103.4 521.1 98.5 519.4 96.9" stroke="#ffffff" stroke-width="1.0" fill="none" stroke-linecap="round"/>
<path d="M60.5 10.1 C58.7 8.9 53.4 5.2 49.7 2.9 C46.1 0.6 41.4 -0.7 38.6 -3.7 C35.8 -6.8 34.0 -13.5 33.1 -15.5" stroke="#ffffff" stroke-width="1.6" fill="none" stroke-linecap="round"/>
<path d="M348.6 42.0 C348.4 44.5 348.0 52.0 347.6 56.9 C347.2 61.9 347.8 67.3 346.1 71.9 C344.3 76.4 338.7 82.0 337.3 84.0" stroke="#ffffff" stroke-width="1.6" fill="none" stroke-linecap="round"/>
<path d="M703.2 48.7 C701.7 48.9 696.9 48.9 694.1 50.1 C691.4 51.2 688.0 54.7 686.8 55.6" stroke="#ffffff" stroke-width="2.0" fill="none" stroke-linecap="round"/>
<path d="M471.4 6.6 C469.9 4.5 466.1 -2.5 462.7 -6.4 C459.3 -10.3 452.9 -15.0 450.9 -16.7" stroke="#ffffff" stroke-width="1.6" fill="none" stroke-linecap="round"/>
<path d="M670.3 100.4 C671.7 100.8 676.0 101.6 678.6 102.7 C681.3 103.9 683.4 106.6 686.1 107.2 C688.8 107.9 691.9 106.4 694.8 106.6 C697.6 106.9 700.3 108.5 703.2 108.8 C706.0 109.2 710.4 108.7 711.9 108.7" stroke="#ffffff" stroke-width="2.0" fill="none" stroke-linecap="round"/>
<path d="M557.1 115.1 C555.5 116.0 549.9 117.7 547.5 120.2 C545.2 122.7 544.5 126.7 543.1 130.1 C541.7 133.4 539.7 136.7 539.2 140.2 C538.8 143.7 539.1 147.7 540.3 151.0 C541.6 154.2 545.7 158.3 546.7 159.7" stroke="#ffffff" stroke-width="1.3" fill="none" stroke-linecap="round"/>
<path d="M56.8 129.8 C54.3 130.0 46.6 130.4 41.5 130.7 C36.4 131.1 30.9 130.3 26.1 131.7 C21.4 133.2 15.1 138.2 12.9 139.5" stroke="#ffffff" stroke-width="1.6" fill="none" stroke-linecap="round"/>
<path d="M387.2 47.0 C388.2 44.5 391.7 37.1 393.5 32.1 C395.4 27.0 397.1 21.8 398.1 16.5 C399.1 11.2 399.3 3.1 399.5 0.4" stroke="#ffffff" stroke-width="1.6" fill="none" stroke-linecap="round"/>
<path d="M852.4 161.9 C852.9 163.2 853.9 167.9 855.8 170.0 C857.7 172.0 861.4 172.3 863.6 174.1 C865.7 176.0 867.9 180.1 868.7 181.3" stroke="#ffffff" stroke-width="1.0" fill="none" stroke-linecap="round"/>
<path d="M175.8 47.6 C174.3 49.0 170.2 54.2 166.7 55.8 C163.2 57.3 158.6 57.1 154.6 56.9 C150.5 56.8 144.6 55.2 142.5 54.9" stroke="#ffffff" stroke-width="1.3" fill="none" stroke-linecap="round"/>
<path d="M496.9 104.4 C499.0 104.0 505.1 102.3 509.3 102.1 C513.4 101.9 519.7 102.9 521.8 103.0" stroke="#ffffff" stroke-width="1.3" fill="none" stroke-linecap="round"/>
<path d="M539.1 67.3 C537.7 66.9 533.2 65.0 530.3 65.2 C527.5 65.4 524.4 66.9 521.9 68.5 C519.5 70.2 517.1 72.4 515.5 74.9 C514.0 77.4 513.4 80.6 512.8 83.5 C512.2 86.5 512.1 91.0 511.9 92.5" stroke="#ffffff" stroke-width="2.0" fill="none" stroke-linecap="round"/>
<path d="M50.7 0.0 C52.9 -0.3 60.1 -0.2 63.9 -2.2 C67.7 -4.1 71.0 -7.8 73.5 -11.4 C76.0 -15.0 77.8 -21.7 78.7 -23.8" stroke="#ffffff" stroke-width="1.0" fill="none" stroke-linecap="round"/>
<path d="M362.7 107.2 C360.9 108.7 355.5 113.2 352.0 116.3 C348.4 119.3 345.5 123.9 341.4 125.5 C337.3 127.2 332.1 125.9 327.4 126.2 C322.8 126.5 315.8 127.1 313.4 127.3" stroke="#ffffff" stroke-width="1.3" fill="none" stroke-linecap="round"/>
<path d="M300.6 24.4 C298.1 24.0 290.4 23.1 285.4 22.3 C280.3 21.6 275.2 19.7 270.1 19.9 C265.1 20.2 260.1 24.1 255.2 23.8 C250.4 23.5 243.3 19.1 240.9 18.2" stroke="#ffffff" stroke-width="1.6" fill="none" stroke-linecap="round"/>
<path d="M348.7 116.6 C347.5 118.9 342.3 125.4 341.2 130.3 C340.2 135.2 342.2 143.2 342.4 145.8" stroke="#ffffff" stroke-width="2.0" fill="none" stroke-linecap="round"/>
<path d="M815.0 87.6 C815.2 89.5 815.9 95.3 816.3 99.1 C816.7 102.9 817.5 106.7 817.6 110.6 C817.6 114.4 816.8 120.2 816.6 122.1" stroke="#ffffff" stroke-width="1.6" fill="none" stroke-linecap="round"/>
<path d="M591.2 133.2 C593.0 131.3 599.4 126.0 602.2 121.6 C605.1 117.2 606.2 111.7 608.2 106.7 C610.3 101.8 613.5 94.4 614.5 91.9" stroke="#ffffff" stroke-width="1.3" fill="none" stroke-linecap="round"/>
<path d="M342.8 4.9 C340.6 6.4 334.2 11.3 329.7 13.9 C325.1 16.6 317.8 19.8 315.4 21.0" stroke="#ffffff" stroke-width="2.0" fill="none" stroke-linecap="round"/>
<path d="M331.9 136.6 C330.9 139.4 327.0 147.6 326.2 153.3 C325.5 159.0 325.7 165.3 327.2 170.8 C328.7 176.3 331.7 181.9 335.3 186.4 C338.9 190.8 346.7 195.5 349.0 197.4" stroke="#ffffff" stroke-width="2.0" fill="none" stroke-linecap="round"/>
<path d="M601.6 152.2 C601.2 150.1 601.1 143.2 599.2 139.6 C597.3 136.0 591.7 132.0 590.2 130.4" stroke="#ffffff" stroke-width="1.6" fill="none" stroke-linecap="round"/>
<path d="M636.8 153.8 C636.9 155.9 636.7 162.3 637.4 166.5 C638.1 170.7 640.6 174.6 640.9 178.8 C641.2 183.0 639.4 189.3 639.1 191.5" stroke="#ffffff" stroke-width="1.0" fill="none" stroke-linecap="round"/>
<path d="M936.7 66.9 C939.2 67.0 947.6 65.9 952.1 67.8 C956.5 69.6 959.0 76.3 963.4 78.2 C967.9 80.2 973.7 78.8 978.8 79.5 C983.9 80.3 988.8 81.8 993.9 82.8 C998.9 83.7 1006.6 84.9 1009.1 85.3" stroke="#ffffff" stroke-width="1.3" fill="none" stroke-linecap="round"/>
<path d="M632.2 103.4 C630.7 105.2 624.9 110.3 622.9 114.5 C620.9 118.8 619.5 124.3 620.3 128.9 C621.0 133.4 626.5 137.1 627.2 141.7 C628.0 146.2 626.2 151.4 624.9 156.0 C623.6 160.7 620.5 167.4 619.6 169.6" stroke="#ffffff" stroke-width="1.3" fill="none" stroke-linecap="round"/>
<path d="M507.6 157.8 C507.1 160.7 503.6 169.8 504.5 175.4 C505.4 180.9 509.1 186.7 512.8 191.2 C516.5 195.7 522.1 198.7 526.7 202.5 C531.3 206.2 536.7 209.3 540.5 213.8 C544.3 218.3 547.8 226.7 549.3 229.3" stroke="#ffffff" stroke-width="1.3" fill="none" stroke-linecap="round"/>
<path d="M314.3 92.0 C314.9 90.7 316.7 86.7 318.3 84.4 C319.9 82.1 321.7 79.6 324.0 77.9 C326.2 76.3 330.6 75.1 331.9 74.5" stroke="#ffffff" stroke-width="1.0" fill="none" stroke-linecap="round"/>
<path d="M498.2 139.8 C496.2 140.9 490.4 144.1 486.7 146.5 C482.9 148.9 478.7 150.9 475.7 154.1 C472.8 157.3 470.3 163.8 469.2 165.7" stroke="#ffffff" stroke-width="1.3" fill="none" stroke-linecap="round"/>
<path d="M3.8 135.1 C2.3 134.7 -2.4 132.8 -5.4 133.1 C-8.4 133.3 -11.1 135.9 -14.1 136.7 C-17.1 137.5 -21.9 137.8 -23.4 138.1" stroke="#ffffff" stroke-width="1.6" fill="none" stroke-linecap="round"/>
<path d="M511.6 81.5 C514.4 81.3 523.5 82.3 528.4 80.3 C533.3 78.2 539.0 71.1 541.1 69.2" stroke="#ffffff" stroke-width="1.0" fill="none" stroke-linecap="round"/>
<path d="M94.2 76.4 C96.3 74.9 102.4 69.9 106.8 67.2 C111.2 64.5 118.4 61.3 120.7 60.1" stroke="#ffffff" stroke-width="1.3" fill="none" stroke-linecap="round"/>
<path d="M487.4 86.6 C485.3 86.2 478.5 86.2 475.0 84.4 C471.5 82.5 468.7 78.7 466.3 75.4 C463.8 72.1 461.2 68.3 460.3 64.4 C459.3 60.5 460.6 54.0 460.7 51.9" stroke="#ffffff" stroke-width="1.6" fill="none" stroke-linecap="round"/>
<path d="M908.3 43.9 C910.8 44.8 918.5 47.6 923.8 49.2 C929.0 50.8 934.4 53.5 939.7 53.3 C944.9 53.0 952.5 48.6 955.1 47.7" stroke="#ffffff" stroke-width="2.0" fill="none" stroke-linecap="round"/>
<path d="M232.0 12.4 C233.1 10.0 235.8 2.3 238.7 -2.0 C241.6 -6.3 245.4 -10.2 249.4 -13.7 C253.3 -17.1 259.0 -18.9 262.4 -22.7 C265.7 -26.6 268.3 -34.5 269.5 -36.9" stroke="#ffffff" stroke-width="1.3" fill="none" stroke-linecap="round"/>
<path d="M851.1 163.5 C852.2 165.8 854.5 173.6 857.6 177.5 C860.8 181.4 866.2 183.4 869.9 187.0 C873.5 190.5 878.0 197.0 879.6 199.0" stroke="#ffffff" stroke-width="2.0" fill="none" stroke-linecap="round"/>
<path d="M215.7 119.4 C216.7 120.9 220.5 125.4 222.0 128.8 C223.6 132.2 223.2 136.8 225.2 139.7 C227.3 142.6 231.5 144.0 234.6 146.3 C237.6 148.6 240.3 151.2 243.4 153.5 C246.4 155.8 251.2 158.9 252.7 160.0" stroke="#ffffff" stroke-width="1.3" fill="none" stroke-linecap="round"/>
<path d="M17.4 56.0 C18.5 58.0 22.4 63.5 23.6 67.6 C24.8 71.7 25.7 76.7 24.7 80.7 C23.7 84.7 18.8 87.7 17.5 91.7 C16.3 95.7 17.3 102.6 17.2 104.8" stroke="#ffffff" stroke-width="1.0" fill="none" stroke-linecap="round"/>
<path d="M256.0 6.7 C257.4 7.8 262.3 10.8 264.2 13.6 C266.0 16.5 267.0 20.4 267.2 23.9 C267.5 27.4 265.8 32.7 265.6 34.5" stroke="#ffffff" stroke-width="1.0" fill="none" stroke-linecap="round"/>
<path d="M249.3 25.2 C251.8 25.1 259.3 24.0 264.3 24.4 C269.2 24.7 274.0 26.7 279.0 27.4 C283.9 28.2 289.2 29.9 293.9 29.0 C298.6 28.0 302.4 22.7 307.1 21.8 C311.8 20.9 319.5 23.3 322.0 23.5" stroke="#ffffff" stroke-width="2.0" fill="none" stroke-linecap="round"/>
<path d="M611.6 135.5 C612.7 137.5 615.2 144.6 618.4 147.8 C621.5 151.1 628.5 153.8 630.5 155.0" stroke="#ffffff" stroke-width="1.0" fill="none" stroke-linecap="round"/>
<path d="M11.1 168.0 C12.3 170.7 15.8 178.6 18.0 183.9 C20.2 189.2 21.2 195.2 24.2 200.0 C27.2 204.8 31.1 209.8 35.8 212.8 C40.5 215.7 46.8 217.4 52.4 217.7 C58.0 218.0 66.5 215.0 69.3 214.5" stroke="#ffffff" stroke-width="2.0" fill="none" stroke-linecap="round"/>
<path d="M48.6 34.1 C46.2 34.6 39.2 36.0 34.6 37.2 C30.0 38.4 25.6 40.5 20.9 41.3 C16.3 42.2 11.3 41.1 6.7 42.1 C2.1 43.1 -4.4 46.4 -6.6 47.3" stroke="#ffffff" stroke-width="1.3" fill="none" stroke-linecap="round"/>
<path d="M774.7 168.1 C774.7 166.7 775.1 162.5 774.4 159.9 C773.8 157.4 771.4 153.9 770.7 152.7" stroke="#ffffff" stroke-width="1.0" fill="none" stroke-linecap="round"/>
<path d="M457.7 158.0 C456.7 155.7 453.6 149.1 451.8 144.6 C450.1 140.1 447.7 133.2 446.9 130.9" stroke="#ffffff" stroke-width="1.0" fill="none" stroke-linecap="round"/>
<path d="M856.7 164.0 C859.1 163.2 866.0 159.6 870.8 159.1 C875.6 158.6 880.8 159.7 885.5 161.1 C890.3 162.4 894.8 164.7 899.1 167.1 C903.4 169.6 909.3 174.3 911.3 175.7" stroke="#ffffff" stroke-width="2.0" fill="none" stroke-linecap="round"/>
<path d="M390.1 58.7 C392.8 59.5 401.4 60.4 405.9 63.0 C410.5 65.7 415.5 72.8 417.4 74.7" stroke="#ffffff" stroke-width="2.0" fill="none" stroke-linecap="round"/>
<path d="M415.2 9.4 C413.2 7.4 407.7 0.8 403.2 -2.2 C398.6 -5.2 393.1 -7.3 387.8 -8.8 C382.5 -10.2 376.8 -10.2 371.2 -10.6 C365.7 -11.1 359.8 -12.6 354.5 -11.6 C349.2 -10.6 341.8 -5.9 339.3 -4.7" stroke="#ffffff" stroke-width="1.3" fill="none" stroke-linecap="round"/>
<path d="M429.8 44.5 C426.8 44.7 417.5 47.1 412.1 45.6 C406.7 44.2 402.6 38.4 397.3 35.8 C392.1 33.2 386.3 31.5 380.5 30.2 C374.8 28.9 365.9 28.4 362.9 28.0" stroke="#ffffff" stroke-width="1.3" fill="none" stroke-linecap="round"/>
<path d="M1.0 64.5 C-0.4 63.4 -5.3 60.8 -7.7 58.2 C-10.1 55.6 -10.9 51.3 -13.4 49.0 C-16.0 46.7 -20.4 46.6 -23.2 44.4 C-26.0 42.3 -27.2 38.2 -30.0 36.1 C-32.8 34.0 -38.4 32.7 -40.0 32.0" stroke="#ffffff" stroke-width="2.0" fill="none" stroke-linecap="round"/>
<path d="M565.7 66.6 C565.7 68.4 565.7 73.9 565.6 77.6 C565.4 81.3 565.8 85.1 565.0 88.7 C564.2 92.2 562.4 95.6 560.7 98.8 C558.9 102.0 555.3 106.3 554.2 107.8" stroke="#ffffff" stroke-width="1.0" fill="none" stroke-linecap="round"/>
<path d="M690.2 148.6 C689.7 146.0 688.9 138.1 687.2 133.2 C685.4 128.4 681.8 124.2 679.7 119.5 C677.6 114.7 677.4 108.9 674.7 104.7 C671.9 100.4 666.0 98.3 663.1 94.1 C660.3 89.9 658.4 82.0 657.4 79.5" stroke="#ffffff" stroke-width="1.3" fill="none" stroke-linecap="round"/>
<path d="M689.3 86.7 C689.0 84.2 688.0 76.5 687.5 71.5 C687.0 66.4 686.6 61.3 686.2 56.2 C685.8 51.1 684.2 45.8 685.0 40.9 C685.8 36.0 688.0 30.8 690.9 26.7 C693.7 22.6 700.2 18.0 702.1 16.2" stroke="#ffffff" stroke-width="1.6" fill="none" stroke-linecap="round"/>
<path d="M796.7 98.7 C798.0 99.4 802.6 100.6 804.6 102.6 C806.6 104.6 807.1 108.0 808.6 110.5 C810.2 113.0 813.1 116.4 814.0 117.5" stroke="#ffffff" stroke-width="1.0" fill="none" stroke-linecap="round"/>
<path d="M435.1 8.6 C434.1 6.4 432.1 -1.1 428.9 -4.2 C425.7 -7.4 418.1 -9.1 415.9 -10.1" stroke="#ffffff" stroke-width="2.0" fill="none" stroke-linecap="round"/>
<path d="M769.0 126.5 C770.8 128.1 775.7 133.8 779.7 136.4 C783.7 139.0 790.9 141.1 793.1 142.0" stroke="#ffffff" stroke-width="1.3" fill="none" stroke-linecap="round"/>
<path d="M71.8 44.9 C70.7 43.6 66.7 39.9 65.2 36.9 C63.8 33.9 64.7 29.7 63.2 26.8 C61.6 23.9 57.0 20.8 55.8 19.6" stroke="#ffffff" stroke-width="1.0" fill="none" stroke-linecap="round"/>
<path d="M877.7 48.6 C875.4 47.9 868.7 44.6 864.2 44.3 C859.6 44.1 852.6 46.6 850.3 47.0" stroke="#ffffff" stroke-width="1.6" fill="none" stroke-linecap="round"/>
<path d="M244.8 125.6 C246.4 127.3 251.3 132.5 254.6 135.9 C257.9 139.3 262.6 142.0 264.5 146.1 C266.5 150.1 264.4 156.0 266.2 160.2 C267.9 164.4 273.6 169.4 275.1 171.3" stroke="#ffffff" stroke-width="1.0" fill="none" stroke-linecap="round"/>
<path d="M209.9 82.7 C208.3 84.2 204.2 89.5 200.6 91.3 C197.0 93.2 192.0 92.2 188.2 93.8 C184.4 95.4 181.7 100.0 177.9 101.1 C174.0 102.2 167.3 100.6 165.2 100.5" stroke="#ffffff" stroke-width="1.0" fill="none" stroke-linecap="round"/>
<path d="M902.5 3.0 C901.5 2.0 897.3 -0.5 896.0 -2.9 C894.7 -5.3 895.4 -8.7 894.7 -11.6 C894.1 -14.4 892.2 -17.1 892.1 -19.9 C892.1 -22.7 893.0 -26.0 894.5 -28.4 C896.0 -30.7 900.2 -33.0 901.3 -33.9" stroke="#ffffff" stroke-width="1.3" fill="none" stroke-linecap="round"/>
<path d="M71.9 15.3 C72.8 18.1 75.3 26.4 76.9 32.1 C78.6 37.7 81.7 43.3 81.7 48.9 C81.8 54.5 79.4 60.5 77.2 65.8 C74.9 71.1 69.5 78.3 68.0 80.8" stroke="#ffffff" stroke-width="2.0" fill="none" stroke-linecap="round"/>
<path d="M223.1 151.7 C222.9 153.7 223.1 159.8 222.4 163.6 C221.6 167.5 219.7 171.1 218.7 175.0 C217.7 178.8 217.9 183.0 216.6 186.7 C215.2 190.5 212.5 193.6 210.9 197.2 C209.2 200.8 207.2 206.5 206.4 208.3" stroke="#ffffff" stroke-width="1.6" fill="none" stroke-linecap="round"/>
<path d="M362.6 20.4 C363.2 19.2 365.7 15.8 366.2 13.3 C366.8 10.8 365.2 7.8 365.8 5.3 C366.4 2.8 368.3 0.5 369.9 -1.6 C371.6 -3.6 374.9 -6.0 375.9 -6.9" stroke="#ffffff" stroke-width="1.0" fill="none" stroke-linecap="round"/>
<path d="M869.1 49.0 C867.7 49.2 863.0 49.2 860.6 50.5 C858.1 51.7 856.8 55.2 854.4 56.5 C851.9 57.7 848.7 58.0 845.8 57.9 C843.0 57.9 838.8 56.6 837.3 56.3" stroke="#ffffff" stroke-width="1.3" fill="none" stroke-linecap="round"/>
<path d="M823.5 47.4 C821.5 49.3 814.7 54.2 811.4 58.4 C808.1 62.7 805.1 70.5 803.8 72.9" stroke="#ffffff" stroke-width="2.0" fill="none" stroke-linecap="round"/>
<path d="M256.2 86.4 C256.5 83.7 259.0 75.6 258.0 70.7 C257.0 65.9 251.7 62.1 249.9 57.3 C248.1 52.4 247.6 44.3 247.1 41.8" stroke="#ffffff" stroke-width="1.0" fill="none" stroke-linecap="round"/>
<path d="M385.6 148.0 C387.7 149.5 393.7 154.2 397.9 157.0 C402.0 159.9 407.0 161.8 410.7 165.2 C414.3 168.6 418.3 175.3 419.9 177.3" stroke="#ffffff" stroke-width="1.3" fill="none" stroke-linecap="round"/>
<path d="M621.3 48.4 C618.5 48.8 609.9 49.7 604.4 50.9 C598.8 52.1 590.6 54.7 587.8 55.4" stroke="#ffffff" stroke-width="1.0" fill="none" stroke-linecap="round"/>
<path d="M271.6 43.2 C271.8 45.2 272.8 51.2 272.8 55.2 C272.7 59.2 270.6 63.3 271.1 67.2 C271.5 71.0 274.5 74.5 275.7 78.3 C276.8 82.2 277.6 88.2 278.0 90.2" stroke="#ffffff" stroke-width="1.6" fill="none" stroke-linecap="round"/>
<path d="M72.5 84.6 C70.5 85.7 65.0 89.9 60.8 91.4 C56.7 93.0 51.9 92.7 47.5 93.7 C43.1 94.7 38.9 96.2 34.5 97.3 C30.1 98.3 25.4 98.4 21.3 100.0 C17.2 101.7 11.7 106.0 9.8 107.2" stroke="#ffffff" stroke-width="1.3" fill="none" stroke-linecap="round"/>
<path d="M168.4 93.9 C168.1 95.7 168.2 101.2 166.9 104.2 C165.5 107.3 162.8 110.0 160.2 112.2 C157.6 114.4 154.1 115.6 151.3 117.5 C148.4 119.4 144.4 122.7 143.0 123.8" stroke="#ffffff" stroke-width="1.6" fill="none" stroke-linecap="round"/>
<path d="M399.0 88.6 C399.0 86.8 398.9 81.4 399.1 77.9 C399.3 74.3 400.2 70.8 400.3 67.2 C400.3 63.7 399.2 60.1 399.4 56.6 C399.5 53.0 400.6 49.5 401.3 46.0 C402.0 42.6 403.2 37.3 403.6 35.6" stroke="#ffffff" stroke-width="1.6" fill="none" stroke-linecap="round"/>
<path d="M761.9 143.4 C762.1 145.2 762.8 150.5 763.5 154.0 C764.1 157.5 765.5 162.7 765.9 164.4" stroke="#ffffff" stroke-width="1.0" fill="none" stroke-linecap="round"/>
<path d="M919.6 143.4 C918.1 143.6 913.4 144.7 910.4 144.4 C907.4 144.0 903.1 141.9 901.6 141.4" stroke="#ffffff" stroke-width="1.6" fill="none" stroke-linecap="round"/>
<path d="M933.4 82.8 C935.4 82.8 941.6 81.8 945.3 82.7 C949.1 83.6 954.1 87.4 955.8 88.3" stroke="#ffffff" stroke-width="1.0" fill="none" stroke-linecap="round"/>
<path d="M937.2 42.0 C937.2 43.7 936.0 49.0 936.8 52.2 C937.5 55.4 940.9 59.7 941.7 61.2" stroke="#ffffff" stroke-width="1.3" fill="none" stroke-linecap="round"/>
<path d="M795.7 118.5 C794.9 117.2 793.2 112.8 791.2 110.8 C789.2 108.8 786.0 108.1 783.5 106.5 C781.0 104.9 778.9 102.2 776.2 101.4 C773.6 100.6 770.3 102.0 767.4 101.7 C764.5 101.4 760.3 99.8 758.9 99.4" stroke="#ffffff" stroke-width="1.6" fill="none" stroke-linecap="round"/>
<path d="M927.8 105.9 C930.3 106.1 937.7 106.8 942.7 107.4 C947.7 108.0 952.6 108.5 957.5 109.5 C962.4 110.4 967.1 112.3 972.0 113.2 C977.0 114.1 982.1 115.1 987.0 114.6 C991.8 114.2 998.9 111.1 1001.3 110.4" stroke="#ffffff" stroke-width="1.6" fill="none" stroke-linecap="round"/>
<path d="M579.4 1.8 C579.7 4.8 581.8 13.9 580.8 19.7 C579.9 25.4 575.1 30.5 573.9 36.2 C572.6 42.0 573.6 48.2 573.2 54.2 C572.9 60.2 572.1 69.1 571.9 72.1" stroke="#ffffff" stroke-width="2.0" fill="none" stroke-linecap="round"/>
<path d="M527.3 4.9 C528.1 7.3 530.4 14.5 531.9 19.3 C533.4 24.1 535.6 28.7 536.5 33.6 C537.5 38.5 536.9 43.6 537.5 48.6 C538.2 53.6 538.5 58.8 540.2 63.4 C541.9 68.1 546.5 74.3 547.7 76.5" stroke="#ffffff" stroke-width="1.0" fill="none" stroke-linecap="round"/>
<path d="M643.3 156.4 C643.3 154.2 643.4 147.7 642.9 143.4 C642.3 139.2 641.2 134.9 639.9 130.8 C638.6 126.7 636.0 120.8 635.2 118.8" stroke="#ffffff" stroke-width="1.6" fill="none" stroke-linecap="round"/>
<path d="M6.5 49.4 C8.0 48.6 12.4 45.7 15.5 44.9 C18.7 44.2 23.9 44.9 25.6 44.9" stroke="#ffffff" stroke-width="1.0" fill="none" stroke-linecap="round"/>
<path d="M222.5 37.4 C221.6 36.2 218.1 32.9 217.1 30.1 C216.0 27.4 216.6 24.1 216.3 21.1 C216.0 18.1 214.8 14.9 215.3 12.1 C215.8 9.2 218.7 5.3 219.4 3.9" stroke="#ffffff" stroke-width="1.6" fill="none" stroke-linecap="round"/>
<path d="M54.4 100.5 C55.8 100.9 59.8 102.3 62.6 102.9 C65.4 103.5 68.3 103.4 71.0 104.3 C73.7 105.2 76.0 107.4 78.7 108.1 C81.4 108.7 84.4 108.3 87.2 108.2 C90.1 108.2 94.3 107.8 95.8 107.8" stroke="#ffffff" stroke-width="1.6" fill="none" stroke-linecap="round"/>
<path d="M686.4 53.1 C688.7 51.2 696.8 46.5 700.5 41.9 C704.1 37.4 707.1 28.5 708.4 25.8" stroke="#ffffff" stroke-width="1.0" fill="none" stroke-linecap="round"/>
<path d="M902.2 126.1 C902.8 124.4 903.5 118.3 905.7 115.6 C907.8 112.8 913.4 110.5 915.0 109.5" stroke="#ffffff" stroke-width="1.0" fill="none" stroke-linecap="round"/>
<path d="M426.5 18.4 C424.8 18.9 419.1 19.7 416.2 21.6 C413.2 23.4 410.1 28.2 408.8 29.5" stroke="#ffffff" stroke-width="1.3" fill="none" stroke-linecap="round"/>
<path d="M929.6 35.1 C927.7 36.9 920.8 41.7 918.4 46.1 C916.0 50.4 916.8 56.5 915.0 61.4 C913.2 66.2 908.9 70.2 907.4 75.1 C906.0 80.0 906.4 88.2 906.2 90.8" stroke="#ffffff" stroke-width="1.6" fill="none" stroke-linecap="round"/>
<path d="M522.0 75.4 C522.5 73.6 524.3 68.0 525.1 64.2 C525.8 60.4 525.3 56.2 526.7 52.7 C528.0 49.1 530.4 45.6 533.0 42.9 C535.6 40.1 540.9 37.2 542.5 36.1" stroke="#ffffff" stroke-width="1.6" fill="none" stroke-linecap="round"/>
<path d="M39.2 5.9 C41.9 5.8 50.4 7.0 55.2 5.3 C60.0 3.6 65.8 -2.8 68.0 -4.4" stroke="#ffffff" stroke-width="1.3" fill="none" stroke-linecap="round"/>
<path d="M583.8 61.3 C581.1 60.2 572.6 57.5 567.6 54.5 C562.7 51.5 559.1 46.3 554.2 43.1 C549.3 40.0 543.9 37.2 538.4 35.5 C532.8 33.9 523.8 33.6 520.9 33.2" stroke="#ffffff" stroke-width="2.0" fill="none" stroke-linecap="round"/>
<path d="M3.6 127.7 C3.8 129.1 5.2 133.3 4.8 135.9 C4.3 138.4 1.5 141.9 0.8 143.1" stroke="#ffffff" stroke-width="1.0" fill="none" stroke-linecap="round"/>
<path d="M919.6 65.3 C919.3 62.5 918.3 54.0 917.7 48.3 C917.1 42.6 918.1 36.1 915.7 31.3 C913.4 26.4 906.0 24.1 903.4 19.4 C900.8 14.6 900.6 5.4 900.0 2.6" stroke="#ffffff" stroke-width="2.0" fill="none" stroke-linecap="round"/>
<path d="M292.4 117.0 C291.8 119.2 289.8 126.0 289.1 130.7 C288.5 135.3 289.6 140.2 288.5 144.7 C287.4 149.2 283.6 155.3 282.6 157.5" stroke="#ffffff" stroke-width="1.0" fill="none" stroke-linecap="round"/>
<path d="M76.2 33.3 C77.9 32.9 82.9 31.5 86.3 30.8 C89.7 30.1 93.3 30.0 96.6 29.0 C100.0 28.0 104.6 25.5 106.2 24.8" stroke="#ffffff" stroke-width="1.0" fill="none" stroke-linecap="round"/>
<path d="M945.0 149.3 C946.7 149.2 952.1 149.0 955.6 148.9 C959.2 148.8 964.5 148.6 966.2 148.5" stroke="#ffffff" stroke-width="2.0" fill="none" stroke-linecap="round"/>
<path d="M684.2 75.5 C682.7 75.1 678.3 73.1 675.3 72.8 C672.3 72.4 669.1 73.3 666.0 73.4 C662.9 73.6 658.2 73.6 656.7 73.6" stroke="#ffffff" stroke-width="1.0" fill="none" stroke-linecap="round"/>
<path d="M746.0 128.4 C744.2 127.9 738.7 127.2 735.4 125.8 C732.1 124.3 729.5 121.1 726.2 119.8 C722.9 118.6 719.0 118.1 715.4 118.2 C711.8 118.2 706.5 120.0 704.7 120.3" stroke="#ffffff" stroke-width="1.0" fill="none" stroke-linecap="round"/>
<path d="M236.5 25.9 C234.6 25.8 229.0 25.7 225.3 25.5 C221.5 25.4 217.7 24.5 214.0 25.0 C210.3 25.5 205.1 28.1 203.3 28.7" stroke="#ffffff" stroke-width="1.6" fill="none" stroke-linecap="round"/>
<path d="M779.3 110.4 C777.9 110.0 773.2 109.3 770.7 107.9 C768.2 106.4 765.3 102.7 764.2 101.6" stroke="#ffffff" stroke-width="1.3" fill="none" stroke-linecap="round"/>
<path d="M881.5 6.8 C883.0 7.6 888.1 9.3 890.7 11.4 C893.3 13.5 894.4 17.4 897.0 19.6 C899.6 21.7 902.9 23.8 906.1 24.4 C909.4 25.0 914.7 23.5 916.4 23.3" stroke="#ffffff" stroke-width="1.3" fill="none" stroke-linecap="round"/>
<path d="M494.2 30.0 C491.7 29.2 484.1 27.0 479.4 24.8 C474.6 22.5 469.9 20.0 465.8 16.7 C461.8 13.5 459.1 8.6 455.2 5.1 C451.3 1.7 444.5 -2.5 442.3 -4.0" stroke="#ffffff" stroke-width="1.6" fill="none" stroke-linecap="round"/>
<path d="M36.1 57.5 C35.8 59.1 35.3 64.2 34.4 67.4 C33.5 70.6 31.3 75.1 30.7 76.7" stroke="#ffffff" stroke-width="2.0" fill="none" stroke-linecap="round"/>
<path d="M196.1 1.9 C194.5 3.1 188.7 6.0 186.4 9.1 C184.1 12.2 182.4 16.7 182.3 20.5 C182.3 24.3 184.8 28.2 186.1 32.0 C187.3 35.8 189.2 41.6 189.9 43.5" stroke="#ffffff" stroke-width="1.3" fill="none" stroke-linecap="round"/>
<path d="M466.1 69.0 C467.4 71.1 471.7 77.1 473.8 81.4 C475.9 85.8 476.7 90.8 478.6 95.3 C480.6 99.7 482.5 104.4 485.4 108.2 C488.3 112.1 493.9 114.3 495.9 118.4 C498.0 122.5 497.4 130.5 497.7 132.9" stroke="#ffffff" stroke-width="1.6" fill="none" stroke-linecap="round"/>
<path d="M643.8 70.6 C642.0 70.2 636.6 68.8 632.9 68.2 C629.2 67.6 623.7 67.3 621.8 67.1" stroke="#ffffff" stroke-width="1.6" fill="none" stroke-linecap="round"/>
<path d="M833.1 168.4 C831.5 170.2 827.3 176.8 823.3 179.0 C819.3 181.2 813.8 180.7 809.1 181.9 C804.5 183.1 799.3 183.7 795.3 186.1 C791.3 188.5 786.7 194.5 785.0 196.2" stroke="#ffffff" stroke-width="2.0" fill="none" stroke-linecap="round"/>
<path d="M109.5 15.3 C111.4 16.0 117.4 18.0 121.3 19.5 C125.2 21.1 129.2 22.5 132.9 24.6 C136.5 26.6 140.7 28.7 143.2 31.8 C145.7 35.0 147.2 41.5 148.0 43.5" stroke="#ffffff" stroke-width="1.0" fill="none" stroke-linecap="round"/>
<path d="M85.8 105.2 C87.5 107.1 91.8 113.9 95.8 116.9 C99.8 119.8 105.1 121.9 110.0 122.7 C114.9 123.5 120.8 123.5 125.3 121.7 C129.9 119.9 135.3 113.7 137.4 112.1" stroke="#ffffff" stroke-width="1.0" fill="none" stroke-linecap="round"/>
<path d="M369.9 127.4 C369.7 125.5 368.2 119.8 368.9 116.4 C369.6 112.9 372.8 110.0 374.0 106.6 C375.3 103.2 376.1 97.7 376.5 95.9" stroke="#ffffff" stroke-width="1.6" fill="none" stroke-linecap="round"/>
<path d="M585.8 107.5 C584.8 104.9 582.8 96.2 579.7 91.6 C576.6 87.1 569.2 82.1 567.1 80.2" stroke="#ffffff" stroke-width="1.3" fill="none" stroke-linecap="round"/>
<path d="M757.5 37.5 C758.4 39.7 761.2 46.2 762.7 50.7 C764.3 55.1 764.2 60.6 766.7 64.3 C769.3 67.9 775.4 69.1 778.0 72.7 C780.7 76.4 780.0 82.3 782.4 86.2 C784.8 90.1 790.8 94.5 792.5 96.1" stroke="#ffffff" stroke-width="2.0" fill="none" stroke-linecap="round"/>
<path d="M346.3 25.3 C345.3 24.3 342.5 20.6 340.1 19.5 C337.7 18.4 334.3 19.6 331.8 18.7 C329.2 17.7 325.9 14.8 324.7 14.1" stroke="#ffffff" stroke-width="2.0" fill="none" stroke-linecap="round"/>
<path d="M113.5 101.3 C113.5 103.7 113.0 111.0 113.3 115.8 C113.6 120.6 114.2 125.5 115.3 130.2 C116.5 134.8 118.4 139.3 120.0 143.9 C121.5 148.5 123.8 155.3 124.6 157.6" stroke="#ffffff" stroke-width="1.0" fill="none" stroke-linecap="round"/>
<path d="M172.3 0.6 C170.2 0.9 164.0 2.9 159.9 2.7 C155.8 2.5 151.3 1.3 147.7 -0.7 C144.1 -2.7 140.8 -6.0 138.4 -9.3 C136.1 -12.7 135.5 -17.3 133.6 -21.1 C131.8 -24.8 128.3 -30.2 127.3 -32.0" stroke="#ffffff" stroke-width="1.0" fill="none" stroke-linecap="round"/>
<path d="M64.7 60.6 C63.3 61.1 58.5 61.9 56.3 63.7 C54.1 65.4 53.3 68.8 51.5 71.2 C49.6 73.5 46.6 75.0 45.3 77.6 C44.0 80.1 43.9 84.9 43.7 86.3" stroke="#ffffff" stroke-width="1.0" fill="none" stroke-linecap="round"/>
<path d="M707.1 131.4 C705.7 131.6 701.3 133.1 698.6 132.7 C696.0 132.2 692.3 129.4 691.1 128.7" stroke="#ffffff" stroke-width="1.3" fill="none" stroke-linecap="round"/>
<path d="M131.3 144.8 C132.9 144.6 138.0 143.0 141.1 143.6 C144.2 144.2 148.4 147.6 149.8 148.4" stroke="#ffffff" stroke-width="2.0" fill="none" stroke-linecap="round"/>
<path d="M883.1 27.9 C881.9 28.7 877.7 30.6 875.8 32.6 C873.9 34.7 873.5 38.2 871.6 40.2 C869.6 42.1 865.2 43.6 864.0 44.3" stroke="#ffffff" stroke-width="2.0" fill="none" stroke-linecap="round"/>
<path d="M265.1 137.8 C266.8 137.4 271.9 135.8 275.3 135.2 C278.7 134.5 282.3 134.0 285.8 133.9 C289.2 133.7 294.5 134.2 296.3 134.2" stroke="#ffffff" stroke-width="1.3" fill="none" stroke-linecap="round"/>
<path d="M228.9 62.9 C228.8 64.5 228.9 69.5 228.3 72.7 C227.8 75.9 227.1 79.5 225.4 82.1 C223.7 84.7 219.2 87.4 218.0 88.5" stroke="#ffffff" stroke-width="2.0" fill="none" stroke-linecap="round"/>
<path d="M162.7 132.6 C164.5 134.5 171.4 139.5 173.5 144.0 C175.6 148.4 175.0 157.0 175.3 159.6" stroke="#ffffff" stroke-width="2.0" fill="none" stroke-linecap="round"/>
<path d="M436.7 88.1 C435.4 87.0 431.0 83.9 428.8 81.2 C426.7 78.5 424.5 73.5 423.6 72.0" stroke="#ffffff" stroke-width="1.3" fill="none" stroke-linecap="round"/>
<path d="M358.1 63.5 C356.1 64.6 350.0 67.8 346.1 70.2 C342.2 72.6 337.7 74.6 334.6 77.9 C331.5 81.1 330.6 86.3 327.7 89.8 C324.8 93.2 318.9 97.2 317.1 98.6" stroke="#ffffff" stroke-width="1.0" fill="none" stroke-linecap="round"/>
<path d="M46.6 138.6 C48.3 139.1 54.2 139.8 57.2 141.8 C60.1 143.8 62.7 147.3 64.0 150.6 C65.4 153.8 65.5 157.9 65.3 161.6 C65.1 165.2 63.4 170.6 63.0 172.4" stroke="#ffffff" stroke-width="1.6" fill="none" stroke-linecap="round"/>
<path d="M720.2 37.5 C718.1 38.4 711.7 42.5 707.2 43.1 C702.7 43.7 697.8 40.5 693.2 41.1 C688.7 41.6 683.9 43.7 680.0 46.2 C676.1 48.7 671.4 54.3 669.7 55.9" stroke="#ffffff" stroke-width="1.6" fill="none" stroke-linecap="round"/>
<path d="M629.6 3.8 C628.8 5.9 626.4 12.3 624.7 16.5 C622.9 20.7 620.1 26.9 619.1 29.0" stroke="#ffffff" stroke-width="1.3" fill="none" stroke-linecap="round"/>
<path d="M398.4 50.9 C397.1 49.8 393.8 45.6 391.0 44.1 C388.1 42.6 383.9 43.5 381.2 41.8 C378.4 40.2 375.6 35.6 374.5 34.3" stroke="#ffffff" stroke-width="1.6" fill="none" stroke-linecap="round"/>
<path d="M234.8 25.2 C235.4 26.5 236.8 30.7 238.4 33.1 C240.0 35.4 243.3 38.3 244.3 39.4" stroke="#ffffff" stroke-width="1.3" fill="none" stroke-linecap="round"/>
<path d="M782.4 163.4 C780.0 163.0 772.7 162.2 768.1 160.9 C763.5 159.5 757.0 156.3 754.7 155.4" stroke="#ffffff" stroke-width="1.0" fill="none" stroke-linecap="round"/>
<path d="M427.8 158.4 C428.3 156.7 429.9 151.7 431.1 148.4 C432.3 145.1 433.8 142.0 434.9 138.7 C435.9 135.3 437.1 131.9 437.3 128.5 C437.5 125.0 437.4 121.1 435.9 118.1 C434.5 115.1 430.0 111.7 428.8 110.4" stroke="#ffffff" stroke-width="1.3" fill="none" stroke-linecap="round"/>
<path d="M750.8 2.1 C751.1 3.6 751.9 8.3 752.4 11.4 C752.9 14.5 753.7 17.6 753.9 20.7 C754.0 23.8 753.5 28.5 753.5 30.1" stroke="#ffffff" stroke-width="1.3" fill="none" stroke-linecap="round"/>
<path d="M784.1 29.5 C784.0 28.1 783.1 23.7 783.3 20.9 C783.5 18.1 784.7 15.3 785.2 12.5 C785.8 9.7 786.3 6.8 786.9 4.0 C787.5 1.2 788.7 -3.0 789.0 -4.4" stroke="#ffffff" stroke-width="1.6" fill="none" stroke-linecap="round"/>
<path d="M361.7 73.8 C360.4 73.1 355.8 71.5 354.0 69.4 C352.2 67.3 352.4 63.7 351.0 61.2 C349.5 58.6 347.0 56.8 345.4 54.4 C343.7 51.9 343.2 48.7 341.2 46.6 C339.3 44.5 335.0 42.7 333.8 41.9" stroke="#ffffff" stroke-width="2.0" fill="none" stroke-linecap="round"/>
<path d="M859.2 156.4 C858.7 158.8 857.2 166.2 856.6 171.2 C855.9 176.2 856.7 181.6 855.3 186.3 C853.9 191.0 850.6 195.2 848.2 199.6 C845.7 204.1 841.9 210.6 840.6 212.8" stroke="#ffffff" stroke-width="1.6" fill="none" stroke-linecap="round"/>
<path d="M255.7 108.5 C254.4 109.1 250.5 111.7 247.7 112.1 C244.8 112.5 241.5 111.9 238.9 110.8 C236.2 109.7 232.9 106.4 231.7 105.6" stroke="#ffffff" stroke-width="2.0" fill="none" stroke-linecap="round"/>
<path d="M195.5 26.9 C194.1 27.8 189.7 30.2 187.1 32.2 C184.4 34.1 182.5 37.3 179.7 38.8 C176.8 40.2 173.2 41.3 170.0 41.1 C166.9 40.9 162.3 38.2 160.7 37.6" stroke="#ffffff" stroke-width="2.0" fill="none" stroke-linecap="round"/>
<path d="M946.3 142.2 C944.5 143.2 937.9 145.4 935.2 148.3 C932.5 151.3 932.8 157.0 930.1 160.0 C927.4 163.0 922.3 163.7 919.1 166.4 C916.0 169.1 914.5 173.9 911.2 176.3 C907.9 178.7 901.3 180.1 899.3 180.8" stroke="#ffffff" stroke-width="1.6" fill="none" stroke-linecap="round"/>
<path d="M760.8 66.2 C762.9 67.1 768.9 71.1 773.2 71.8 C777.6 72.4 784.5 70.4 786.8 70.1" stroke="#ffffff" stroke-width="1.6" fill="none" stroke-linecap="round"/>
<path d="M599.6 27.3 C602.0 26.6 609.0 23.8 613.9 22.7 C618.7 21.7 624.5 23.1 628.8 21.1 C633.1 19.1 637.9 12.5 639.7 10.8" stroke="#ffffff" stroke-width="1.0" fill="none" stroke-linecap="round"/>
<path d="M65.4 7.9 C67.0 7.5 71.8 5.9 75.1 5.5 C78.4 5.1 82.0 4.6 85.1 5.4 C88.2 6.2 91.2 8.3 93.8 10.4 C96.3 12.5 99.1 16.8 100.1 18.1" stroke="#ffffff" stroke-width="1.6" fill="none" stroke-linecap="round"/>
<path d="M685.6 64.9 C687.3 65.0 692.6 64.4 695.7 65.4 C698.8 66.3 701.9 68.3 704.3 70.5 C706.7 72.8 709.0 77.5 710.0 78.9" stroke="#ffffff" stroke-width="2.0" fill="none" stroke-linecap="round"/>
<path d="M611.3 139.4 C612.0 141.4 614.5 147.4 615.5 151.5 C616.4 155.6 615.9 160.1 617.0 164.2 C618.2 168.3 620.0 172.2 622.2 175.9 C624.3 179.6 628.5 184.4 629.8 186.1" stroke="#ffffff" stroke-width="1.6" fill="none" stroke-linecap="round"/>
<path d="M251.8 59.3 C252.6 58.2 254.7 54.4 256.8 52.5 C258.8 50.6 261.5 49.3 264.0 48.0 C266.5 46.6 269.2 45.7 271.7 44.5 C274.3 43.3 278.1 41.4 279.4 40.8" stroke="#ffffff" stroke-width="1.3" fill="none" stroke-linecap="round"/>
<path d="M277.3 126.0 C276.0 126.6 272.3 128.4 269.8 129.6 C267.3 130.9 264.3 131.6 262.5 133.5 C260.6 135.4 260.2 138.6 258.9 141.0 C257.6 143.5 256.3 146.0 254.6 148.1 C252.8 150.3 249.4 152.8 248.4 153.7" stroke="#ffffff" stroke-width="1.0" fill="none" stroke-linecap="round"/>
<path d="M798.0 97.1 C799.5 96.5 803.8 93.9 806.9 93.2 C810.0 92.5 813.7 92.0 816.6 92.8 C819.6 93.7 821.6 97.7 824.5 98.5 C827.4 99.4 832.6 98.0 834.2 97.9" stroke="#ffffff" stroke-width="1.3" fill="none" stroke-linecap="round"/>
<path d="M473.2 83.1 C472.1 80.3 469.0 72.0 467.1 66.5 C465.1 60.9 463.0 55.4 461.4 49.7 C459.8 44.1 458.1 35.4 457.5 32.5" stroke="#ffffff" stroke-width="2.0" fill="none" stroke-linecap="round"/>
<path d="M153.2 137.8 C154.6 139.4 158.0 145.5 161.4 147.8 C164.9 150.1 170.1 149.5 173.9 151.6 C177.6 153.6 182.1 158.5 183.8 159.9" stroke="#ffffff" stroke-width="1.0" fill="none" stroke-linecap="round"/>
<path d="M672.1 133.0 C670.7 134.3 667.0 139.3 663.8 141.0 C660.5 142.8 655.7 141.8 652.5 143.6 C649.3 145.4 647.7 150.0 644.5 151.9 C641.3 153.8 635.1 154.3 633.3 154.8" stroke="#ffffff" stroke-width="1.3" fill="none" stroke-linecap="round"/>
<path d="M24.3 34.8 C22.3 35.2 16.0 37.6 12.2 37.0 C8.4 36.4 4.8 33.4 1.4 31.2 C-2.0 28.9 -6.0 26.7 -8.2 23.5 C-10.3 20.2 -10.9 13.6 -11.5 11.6" stroke="#ffffff" stroke-width="1.3" fill="none" stroke-linecap="round"/>
<path d="M122.3 100.4 C122.3 102.3 123.2 108.3 122.3 111.9 C121.5 115.5 117.9 120.4 117.0 122.1" stroke="#ffffff" stroke-width="1.6" fill="none" stroke-linecap="round"/>
<path d="M638.3 125.4 C636.9 123.8 633.2 118.5 629.9 115.9 C626.6 113.4 622.5 111.7 618.6 110.2 C614.7 108.8 608.4 107.8 606.3 107.3" stroke="#ffffff" stroke-width="2.0" fill="none" stroke-linecap="round"/>
<path d="M619.6 117.7 C620.4 116.1 622.6 111.3 624.5 108.3 C626.4 105.3 628.5 102.2 631.0 99.8 C633.5 97.3 638.3 94.7 639.7 93.7" stroke="#ffffff" stroke-width="1.6" fill="none" stroke-linecap="round"/>
<path d="M939.7 122.2 C939.6 123.8 940.3 129.0 939.2 131.8 C938.0 134.6 935.3 137.0 932.8 139.0 C930.4 141.1 926.7 141.7 924.5 143.9 C922.4 146.1 920.8 151.0 920.1 152.4" stroke="#ffffff" stroke-width="1.0" fill="none" stroke-linecap="round"/>
<path d="M927.7 17.2 C929.0 18.1 932.6 21.4 935.3 23.0 C938.0 24.5 941.1 25.8 944.1 26.4 C947.2 27.1 950.7 27.6 953.6 26.9 C956.6 26.3 959.0 23.0 962.0 22.4 C965.0 21.8 969.9 23.1 971.5 23.2" stroke="#ffffff" stroke-width="1.6" fill="none" stroke-linecap="round"/>
<path d="M270.7 149.6 C269.3 149.9 265.3 151.2 262.6 151.5 C259.8 151.8 257.0 151.3 254.2 151.1 C251.5 151.0 248.7 151.2 245.9 150.8 C243.2 150.4 240.5 149.5 237.8 148.9 C235.1 148.3 230.9 147.7 229.6 147.4" stroke="#ffffff" stroke-width="1.6" fill="none" stroke-linecap="round"/>
<path d="M136.7 102.0 C136.1 103.2 134.7 107.1 133.2 109.3 C131.8 111.5 129.8 113.4 127.9 115.3 C126.0 117.2 124.0 119.1 121.8 120.6 C119.7 122.2 117.3 123.9 114.8 124.6 C112.3 125.3 108.1 124.8 106.8 124.9" stroke="#ffffff" stroke-width="1.3" fill="none" stroke-linecap="round"/>
<path d="M643.9 110.3 C642.2 108.5 637.6 102.5 633.8 99.4 C630.0 96.3 625.2 94.5 621.3 91.6 C617.4 88.6 612.2 83.2 610.3 81.6" stroke="#ffffff" stroke-width="1.0" fill="none" stroke-linecap="round"/>
<path d="M94.3 70.9 C92.1 69.8 85.4 66.2 80.8 64.2 C76.2 62.2 71.4 60.5 66.6 58.9 C61.8 57.3 56.8 56.4 52.1 54.5 C47.5 52.7 43.2 49.7 38.6 47.8 C34.0 45.8 26.7 43.6 24.3 42.8" stroke="#ffffff" stroke-width="1.0" fill="none" stroke-linecap="round"/>
<path d="M650.9 157.2 C651.5 160.0 654.4 168.3 654.2 173.8 C654.0 179.3 652.6 185.6 649.7 190.2 C646.9 194.8 639.2 199.6 637.1 201.5" stroke="#ffffff" stroke-width="1.3" fill="none" stroke-linecap="round"/>
<path d="M102.6 42.5 C103.7 41.4 107.2 38.0 109.5 35.9 C111.9 33.7 115.1 32.1 116.7 29.5 C118.3 26.8 118.9 21.8 119.4 20.2" stroke="#ffffff" stroke-width="2.0" fill="none" stroke-linecap="round"/>
<path d="M553.9 91.4 C553.4 89.3 551.8 82.9 550.8 78.7 C549.8 74.4 549.3 70.0 548.1 65.8 C546.9 61.6 543.9 57.6 543.8 53.4 C543.7 49.3 547.2 45.1 547.6 40.9 C548.0 36.6 546.4 30.0 546.2 27.8" stroke="#ffffff" stroke-width="1.0" fill="none" stroke-linecap="round"/>
<path d="M659.7 66.3 C658.2 64.3 654.0 57.6 650.3 54.3 C646.6 50.9 639.5 47.5 637.3 46.2" stroke="#ffffff" stroke-width="1.6" fill="none" stroke-linecap="round"/>
<path d="M368.1 10.4 C366.1 10.8 360.0 11.8 356.2 13.1 C352.4 14.4 347.0 17.3 345.1 18.2" stroke="#ffffff" stroke-width="1.6" fill="none" stroke-linecap="round"/>
<path d="M255.6 37.9 C252.8 38.6 244.3 41.7 238.7 41.8 C233.0 41.9 227.3 39.1 221.6 38.4 C215.8 37.7 209.8 36.7 204.2 37.6 C198.6 38.5 192.5 40.5 187.9 43.7 C183.3 46.9 178.6 54.8 176.8 57.1" stroke="#ffffff" stroke-width="1.3" fill="none" stroke-linecap="round"/>
<path d="M748.6 136.8 C746.5 136.8 739.8 138.1 736.0 136.8 C732.2 135.5 729.5 131.2 725.9 129.0 C722.3 126.8 716.4 124.5 714.4 123.5" stroke="#ffffff" stroke-width="1.3" fill="none" stroke-linecap="round"/>
<path d="M615.8 138.4 C615.1 140.4 611.8 146.2 611.5 150.3 C611.2 154.4 614.0 158.7 613.8 162.8 C613.6 166.9 611.0 170.8 610.2 174.9 C609.4 179.1 610.4 183.7 609.1 187.6 C607.8 191.5 603.4 196.4 602.2 198.2" stroke="#ffffff" stroke-width="1.0" fill="none" stroke-linecap="round"/>
<path d="M257.8 63.6 C256.4 60.9 251.1 53.3 249.6 47.7 C248.1 42.1 247.9 35.6 248.8 29.9 C249.7 24.2 253.7 19.0 255.3 13.3 C256.8 7.6 257.8 -1.3 258.3 -4.3" stroke="#ffffff" stroke-width="1.6" fill="none" stroke-linecap="round"/>
<path d="M630.8 54.1 C629.9 52.3 627.3 46.7 625.1 43.3 C622.8 39.9 618.8 37.4 617.4 33.7 C615.9 30.1 615.7 25.4 616.4 21.5 C617.1 17.6 621.0 14.1 621.4 10.2 C621.8 6.4 619.3 0.2 618.9 -1.8" stroke="#ffffff" stroke-width="1.6" fill="none" stroke-linecap="round"/>
<path d="M798.1 153.1 C796.6 154.8 792.6 160.2 789.4 163.2 C786.2 166.2 781.6 167.8 778.7 171.1 C775.8 174.3 773.1 180.7 772.0 182.6" stroke="#ffffff" stroke-width="1.6" fill="none" stroke-linecap="round"/>
<path d="M69.4 49.5 C69.9 47.3 71.5 40.6 72.3 36.0 C73.1 31.5 74.0 24.7 74.3 22.4" stroke="#ffffff" stroke-width="1.3" fill="none" stroke-linecap="round"/>
<path d="M756.6 35.2 C756.5 37.9 756.7 45.9 756.1 51.2 C755.6 56.4 755.2 62.0 753.2 66.8 C751.3 71.6 747.9 76.1 744.6 80.1 C741.2 84.2 737.5 88.7 733.0 91.1 C728.5 93.5 720.0 93.8 717.4 94.4" stroke="#ffffff" stroke-width="1.6" fill="none" stroke-linecap="round"/>
<path d="M759.7 141.8 C761.3 143.2 766.9 147.1 769.2 150.6 C771.5 154.1 772.6 158.6 773.6 162.7 C774.6 166.9 774.8 173.5 775.0 175.6" stroke="#ffffff" stroke-width="2.0" fill="none" stroke-linecap="round"/>
<path d="M112.8 20.0 C113.9 21.3 116.7 26.2 119.5 27.9 C122.3 29.6 126.1 29.7 129.5 30.4 C132.9 31.2 136.3 32.6 139.6 32.5 C143.0 32.3 146.2 30.5 149.5 29.5 C152.8 28.4 157.7 26.8 159.4 26.3" stroke="#ffffff" stroke-width="1.6" fill="none" stroke-linecap="round"/>
<path d="M480.2 91.2 C479.2 92.4 476.0 96.0 473.9 98.4 C471.8 100.8 468.7 104.5 467.6 105.7" stroke="#ffffff" stroke-width="1.0" fill="none" stroke-linecap="round"/>
<path d="M286.1 78.7 C287.5 77.2 291.3 72.4 294.2 69.6 C297.2 66.8 300.5 64.3 303.9 62.2 C307.3 60.1 312.1 59.5 314.8 56.8 C317.5 54.0 318.1 49.3 320.1 45.8 C322.1 42.3 325.8 37.4 327.0 35.7" stroke="#ffffff" stroke-width="1.6" fill="none" stroke-linecap="round"/>
<path d="M658.0 157.4 C660.3 158.9 667.7 162.5 671.6 166.1 C675.4 169.7 677.2 175.7 681.2 179.0 C685.3 182.2 690.7 184.5 695.8 185.7 C701.0 186.9 709.2 186.1 711.9 186.1" stroke="#ffffff" stroke-width="1.6" fill="none" stroke-linecap="round"/>
<path d="M400.6 21.4 C398.9 23.6 393.6 30.0 390.0 34.2 C386.4 38.4 380.8 44.6 378.9 46.6" stroke="#ffffff" stroke-width="2.0" fill="none" stroke-linecap="round"/>
<path d="M742.8 35.6 C743.9 37.2 746.8 42.2 749.4 44.9 C752.0 47.6 755.3 49.9 758.5 51.9 C761.7 53.9 765.3 55.3 768.7 56.9 C772.2 58.6 775.4 60.6 779.0 61.9 C782.6 63.1 788.3 63.9 790.2 64.3" stroke="#ffffff" stroke-width="1.6" fill="none" stroke-linecap="round"/>
<path d="M948.9 147.5 C948.3 144.6 947.2 135.7 945.4 130.1 C943.6 124.5 941.2 119.0 938.1 114.0 C934.9 109.0 931.1 104.2 926.8 100.2 C922.5 96.3 914.6 91.8 912.2 90.2" stroke="#ffffff" stroke-width="1.3" fill="none" stroke-linecap="round"/>
<path d="M565.3 107.3 C563.4 106.9 557.5 105.8 553.6 104.8 C549.8 103.8 544.1 101.7 542.2 101.1" stroke="#ffffff" stroke-width="1.3" fill="none" stroke-linecap="round"/>
<path d="M384.1 18.3 C385.7 17.8 390.3 15.8 393.5 15.0 C396.6 14.2 401.6 14.0 403.3 13.8" stroke="#ffffff" stroke-width="1.6" fill="none" stroke-linecap="round"/>
<path d="M760.6 153.8 C759.5 151.7 755.8 145.6 753.8 141.3 C751.8 137.1 749.9 132.7 748.7 128.1 C747.6 123.6 748.6 118.4 747.1 114.0 C745.7 109.6 742.0 106.0 740.2 101.7 C738.3 97.4 736.9 90.4 736.2 88.1" stroke="#ffffff" stroke-width="1.3" fill="none" stroke-linecap="round"/>
<path d="M441.4 128.9 C442.8 126.9 448.5 121.5 450.1 117.1 C451.7 112.7 451.0 105.0 451.2 102.5" stroke="#ffffff" stroke-width="1.3" fill="none" stroke-linecap="round"/>
<path d="M897.0 2.3 C894.4 2.1 886.4 1.0 881.2 1.5 C876.0 1.9 870.8 3.6 865.7 5.1 C860.6 6.5 853.2 9.4 850.7 10.3" stroke="#ffffff" stroke-width="1.3" fill="none" stroke-linecap="round"/>
<path d="M307.0 72.8 C305.2 71.6 299.3 68.5 296.2 65.5 C293.2 62.5 290.2 56.6 289.0 54.8" stroke="#ffffff" stroke-width="1.0" fill="none" stroke-linecap="round"/>
<path d="M405.9 117.6 C408.0 117.4 414.2 116.7 418.3 116.7 C422.5 116.7 427.1 116.0 430.8 117.5 C434.5 118.9 438.5 121.9 440.5 125.2 C442.6 128.5 442.3 133.3 443.3 137.4 C444.3 141.4 446.0 147.4 446.5 149.4" stroke="#ffffff" stroke-width="2.0" fill="none" stroke-linecap="round"/>
<path d="M397.6 17.2 C399.2 17.7 404.1 20.2 407.3 20.0 C410.5 19.8 413.4 16.8 416.6 15.9 C419.8 14.9 423.6 15.6 426.6 14.3 C429.5 12.9 431.4 8.9 434.4 7.8 C437.3 6.7 442.8 7.5 444.5 7.4" stroke="#ffffff" stroke-width="2.0" fill="none" stroke-linecap="round"/>
<path d="M85.0 147.0 C84.4 149.0 82.7 155.1 81.7 159.3 C80.8 163.4 80.9 167.9 79.4 171.8 C77.9 175.7 74.0 180.9 73.0 182.8" stroke="#ffffff" stroke-width="2.0" fill="none" stroke-linecap="round"/>
<path d="M889.6 61.8 C891.5 63.5 897.9 68.0 901.2 71.8 C904.5 75.6 906.6 80.5 909.4 84.7 C912.3 88.9 916.9 95.0 918.4 97.1" stroke="#ffffff" stroke-width="2.0" fill="none" stroke-linecap="round"/>
<path d="M898.8 42.9 C900.9 41.5 906.8 36.7 911.2 34.3 C915.6 31.8 922.9 29.4 925.2 28.4" stroke="#ffffff" stroke-width="1.6" fill="none" stroke-linecap="round"/>
<path d="M787.9 13.5 C787.4 11.7 784.8 6.4 784.6 2.8 C784.4 -0.8 785.6 -4.5 786.4 -8.1 C787.3 -11.7 789.2 -15.1 789.9 -18.7 C790.6 -22.3 790.5 -27.9 790.6 -29.8" stroke="#ffffff" stroke-width="1.3" fill="none" stroke-linecap="round"/>
<path d="M914.6 123.0 C915.2 125.4 916.5 132.7 918.2 137.3 C919.8 141.9 922.8 146.1 924.4 150.7 C926.0 155.3 927.1 160.2 927.8 165.1 C928.5 169.9 928.1 174.9 928.6 179.8 C929.1 184.7 930.6 192.0 931.0 194.4" stroke="#ffffff" stroke-width="1.0" fill="none" stroke-linecap="round"/>
<path d="M371.9 132.9 C369.2 132.5 361.1 130.0 356.1 130.9 C351.2 131.8 347.1 137.5 342.1 138.3 C337.2 139.1 331.5 137.2 326.5 135.5 C321.6 133.9 314.7 129.7 312.3 128.5" stroke="#ffffff" stroke-width="1.3" fill="none" stroke-linecap="round"/>
<path d="M797.6 56.1 C795.1 55.1 787.5 52.0 782.4 50.3 C777.2 48.6 769.3 46.7 766.6 46.0" stroke="#ffffff" stroke-width="1.6" fill="none" stroke-linecap="round"/>
<path d="M856.2 63.7 C858.4 63.1 865.5 62.2 869.8 60.5 C874.1 58.8 879.1 56.8 881.9 53.5 C884.7 50.1 885.8 44.8 886.7 40.3 C887.5 35.7 887.0 30.9 886.8 26.3 C886.6 21.6 885.7 14.6 885.5 12.3" stroke="#ffffff" stroke-width="1.6" fill="none" stroke-linecap="round"/>
<path d="M565.5 137.9 C565.8 139.7 567.7 145.3 567.0 148.7 C566.4 152.0 562.3 156.4 561.4 158.0" stroke="#ffffff" stroke-width="1.6" fill="none" stroke-linecap="round"/>
<path d="M141.7 164.8 C143.3 165.9 148.6 168.7 151.1 171.4 C153.7 174.1 154.5 178.5 157.1 181.2 C159.6 183.9 163.8 185.1 166.5 187.7 C169.2 190.4 172.0 193.6 173.1 197.1 C174.2 200.6 173.2 206.7 173.2 208.6" stroke="#ffffff" stroke-width="1.6" fill="none" stroke-linecap="round"/>
<path d="M225.6 102.6 C226.8 104.3 231.2 109.1 232.9 112.9 C234.7 116.6 236.0 121.0 236.2 125.1 C236.5 129.2 234.9 133.4 234.4 137.6 C234.0 141.8 232.5 146.3 233.3 150.2 C234.2 154.2 238.3 159.5 239.3 161.4" stroke="#ffffff" stroke-width="1.0" fill="none" stroke-linecap="round"/>
<path d="M777.5 130.5 C775.6 130.9 769.7 133.1 765.8 132.9 C761.9 132.8 758.2 130.4 754.2 129.9 C750.3 129.3 744.2 129.8 742.3 129.7" stroke="#ffffff" stroke-width="1.3" fill="none" stroke-linecap="round"/>
<path d="M487.9 34.1 C488.2 35.8 488.7 40.7 489.5 43.9 C490.3 47.1 491.9 50.1 492.8 53.3 C493.8 56.4 494.9 61.3 495.4 62.9" stroke="#ffffff" stroke-width="1.0" fill="none" stroke-linecap="round"/>
<path d="M388.0 87.4 C389.5 86.6 393.9 83.2 397.2 82.4 C400.5 81.6 404.2 82.8 407.7 82.6 C411.1 82.3 416.3 81.1 418.0 80.8" stroke="#ffffff" stroke-width="1.3" fill="none" stroke-linecap="round"/>
<path d="M446.8 13.8 C445.4 15.7 439.8 20.9 438.6 25.2 C437.4 29.4 437.7 35.0 439.3 39.1 C440.9 43.2 446.8 45.7 448.3 49.8 C449.8 53.9 448.5 61.4 448.5 63.8" stroke="#ffffff" stroke-width="1.6" fill="none" stroke-linecap="round"/>
<path d="M834.9 82.2 C835.0 80.4 834.4 74.7 835.7 71.6 C837.0 68.5 839.9 65.7 842.6 63.5 C845.3 61.3 850.4 59.3 851.9 58.5" stroke="#ffffff" stroke-width="1.6" fill="none" stroke-linecap="round"/>
<path d="M789.4 162.8 C786.8 163.7 778.8 165.9 773.8 168.0 C768.7 170.2 762.8 172.0 759.3 175.8 C755.7 179.6 753.1 185.6 752.6 190.8 C752.1 196.0 755.8 204.1 756.4 206.8" stroke="#ffffff" stroke-width="2.0" fill="none" stroke-linecap="round"/>
<path d="M356.3 119.2 C357.4 116.6 360.4 108.3 363.0 103.1 C365.6 97.9 369.3 93.2 371.8 88.0 C374.4 82.8 377.7 77.4 378.4 71.8 C379.1 66.2 374.9 60.0 375.8 54.5 C376.8 49.1 382.8 41.7 384.2 39.2" stroke="#ffffff" stroke-width="1.6" fill="none" stroke-linecap="round"/>
<path d="M247.9 95.4 C246.1 93.1 241.0 86.0 237.2 81.5 C233.5 77.0 227.5 70.6 225.5 68.4" stroke="#ffffff" stroke-width="2.0" fill="none" stroke-linecap="round"/>
<path d="M154.0 163.2 C155.5 163.6 160.3 165.8 163.4 165.6 C166.5 165.4 169.4 163.2 172.5 162.1 C175.5 161.0 180.2 159.7 181.8 159.3" stroke="#ffffff" stroke-width="1.0" fill="none" stroke-linecap="round"/>
<path d="M26.8 155.3 C26.7 152.7 24.6 144.3 26.0 139.5 C27.4 134.7 33.7 131.4 35.3 126.7 C36.9 121.9 36.7 115.8 35.4 110.8 C34.2 105.8 29.2 99.1 28.0 96.8" stroke="#ffffff" stroke-width="2.0" fill="none" stroke-linecap="round"/>
<path d="M727.8 158.8 C725.5 159.1 718.6 160.1 714.0 160.9 C709.5 161.7 704.8 162.3 700.4 163.7 C696.0 165.0 691.6 166.8 687.5 168.8 C683.3 170.8 677.5 174.6 675.5 175.8" stroke="#ffffff" stroke-width="1.6" fill="none" stroke-linecap="round"/>
<path d="M361.5 64.2 C362.2 65.7 363.5 71.3 365.7 73.6 C368.0 76.0 372.2 76.3 375.0 78.3 C377.8 80.3 379.6 83.7 382.5 85.5 C385.4 87.3 389.0 88.9 392.3 89.0 C395.5 89.1 400.5 86.4 402.2 85.9" stroke="#ffffff" stroke-width="1.3" fill="none" stroke-linecap="round"/>
<path d="M894.3 37.3 C896.2 39.3 901.3 46.7 906.0 49.4 C910.7 52.1 917.8 50.7 922.4 53.4 C927.0 56.2 931.1 61.2 933.7 66.0 C936.3 70.8 937.2 79.6 937.9 82.4" stroke="#ffffff" stroke-width="1.6" fill="none" stroke-linecap="round"/>
<path d="M605.7 76.4 C606.9 77.9 610.0 82.7 612.5 85.4 C614.9 88.2 617.7 90.9 620.7 93.0 C623.7 95.2 627.6 96.2 630.5 98.5 C633.4 100.8 636.8 105.5 638.0 106.8" stroke="#ffffff" stroke-width="1.6" fill="none" stroke-linecap="round"/>
<path d="M173.8 76.3 C175.2 77.8 178.9 82.9 182.2 85.4 C185.4 87.8 189.4 90.4 193.2 91.0 C197.1 91.5 203.3 89.0 205.4 88.6" stroke="#ffffff" stroke-width="1.0" fill="none" stroke-linecap="round"/>
<path d="M550.4 50.1 C551.9 51.2 556.1 54.3 559.0 56.3 C561.9 58.4 564.6 61.1 567.8 62.3 C571.0 63.5 576.6 63.3 578.3 63.5" stroke="#ffffff" stroke-width="1.3" fill="none" stroke-linecap="round"/>
<path d="M495.0 106.6 C495.0 104.4 494.2 97.4 495.0 93.0 C495.8 88.6 497.0 83.6 499.7 80.3 C502.4 77.0 509.4 74.3 511.3 73.1" stroke="#ffffff" stroke-width="1.6" fill="none" stroke-linecap="round"/>
<path d="M416.5 44.2 C419.2 45.1 428.3 46.5 432.9 49.6 C437.5 52.7 439.3 59.9 444.0 62.8 C448.6 65.7 457.9 66.4 460.7 67.1" stroke="#ffffff" stroke-width="1.3" fill="none" stroke-linecap="round"/>
<path d="M700.3 49.6 C698.3 49.5 692.1 48.9 687.9 48.8 C683.8 48.7 677.6 49.0 675.5 49.0" stroke="#ffffff" stroke-width="1.0" fill="none" stroke-linecap="round"/>
<path d="M761.1 159.5 C759.5 159.2 754.6 157.7 751.4 157.8 C748.2 157.9 745.0 159.5 741.8 160.0 C738.6 160.6 735.0 160.1 732.0 161.3 C729.1 162.4 725.4 166.1 724.1 167.1" stroke="#ffffff" stroke-width="1.3" fill="none" stroke-linecap="round"/>
<path d="M173.6 130.2 C175.3 130.1 180.3 129.4 183.6 129.4 C186.9 129.4 190.2 129.9 193.5 130.1 C196.8 130.4 201.8 130.7 203.5 130.8" stroke="#ffffff" stroke-width="1.0" fill="none" stroke-linecap="round"/>
<path d="M264.0 34.8 C265.8 36.2 271.8 40.0 274.9 43.3 C278.0 46.7 279.8 51.2 282.5 54.9 C285.3 58.5 290.1 63.6 291.6 65.3" stroke="#ffffff" stroke-width="2.0" fill="none" stroke-linecap="round"/>
<path d="M695.7 9.4 C697.3 8.5 702.4 5.8 705.7 4.1 C709.1 2.3 713.3 1.3 715.7 -1.3 C718.1 -4.0 717.8 -9.0 720.1 -11.8 C722.4 -14.6 727.9 -17.1 729.5 -18.2" stroke="#ffffff" stroke-width="2.0" fill="none" stroke-linecap="round"/>
<path d="M459.5 147.4 C458.6 145.8 456.9 140.4 454.5 138.1 C452.0 135.9 447.8 135.7 444.9 133.8 C442.0 132.0 439.5 129.4 437.0 127.0 C434.4 124.6 431.0 120.6 429.8 119.4" stroke="#ffffff" stroke-width="1.3" fill="none" stroke-linecap="round"/>
<path d="M827.2 60.2 C830.0 60.9 838.5 64.1 844.3 64.5 C850.1 64.9 856.2 61.9 861.9 62.6 C867.6 63.3 874.0 65.3 878.5 68.7 C883.0 72.1 886.6 77.6 889.1 82.9 C891.6 88.1 892.7 97.1 893.5 100.0" stroke="#ffffff" stroke-width="1.6" fill="none" stroke-linecap="round"/>
<path d="M836.8 97.4 C837.8 98.9 840.7 103.6 842.7 106.6 C844.8 109.6 848.2 113.8 849.3 115.3" stroke="#ffffff" stroke-width="1.0" fill="none" stroke-linecap="round"/>
<path d="M24.7 136.0 C25.9 135.2 29.7 133.3 31.5 131.4 C33.3 129.4 35.0 126.8 35.7 124.3 C36.3 121.7 35.5 117.5 35.5 116.1" stroke="#ffffff" stroke-width="1.3" fill="none" stroke-linecap="round"/>
<path d="M241.4 138.1 C242.8 137.9 247.0 137.8 249.6 137.0 C252.1 136.2 255.7 134.0 256.9 133.3" stroke="#ffffff" stroke-width="1.3" fill="none" stroke-linecap="round"/>
<path d="M807.2 107.6 C805.5 106.2 799.6 102.5 797.2 99.0 C794.8 95.4 793.6 90.8 792.8 86.5 C792.0 82.2 793.8 77.2 792.4 73.3 C790.9 69.3 787.5 65.4 784.1 62.9 C780.7 60.4 773.9 58.9 771.8 58.1" stroke="#ffffff" stroke-width="1.0" fill="none" stroke-linecap="round"/>
<path d="M475.8 84.6 C476.2 86.1 477.5 90.5 478.2 93.4 C479.0 96.3 479.0 99.6 480.2 102.3 C481.3 105.0 483.1 107.7 485.2 109.8 C487.3 112.0 491.5 114.1 492.8 115.0" stroke="#ffffff" stroke-width="1.3" fill="none" stroke-linecap="round"/>
<path d="M644.7 78.1 C646.1 77.3 650.5 75.3 653.2 73.6 C656.0 71.9 658.5 69.9 661.0 67.9 C663.4 65.8 665.3 62.8 668.0 61.3 C670.8 59.7 674.2 59.5 677.3 58.7 C680.4 57.8 685.1 56.8 686.7 56.4" stroke="#ffffff" stroke-width="1.0" fill="none" stroke-linecap="round"/>
<path d="M381.4 159.1 C381.9 160.9 383.4 166.4 384.7 170.0 C385.9 173.6 388.8 177.0 388.9 180.5 C389.1 184.1 387.4 188.2 385.6 191.5 C383.9 194.7 379.4 198.6 378.2 200.0" stroke="#ffffff" stroke-width="1.0" fill="none" stroke-linecap="round"/>
<path d="M879.9 137.7 C880.6 139.5 882.5 144.8 884.3 148.1 C886.1 151.4 889.6 155.8 890.6 157.4" stroke="#ffffff" stroke-width="1.0" fill="none" stroke-linecap="round"/>
<path d="M839.2 112.1 C837.4 112.8 832.0 115.0 828.5 116.7 C825.0 118.4 820.0 121.4 818.3 122.4" stroke="#ffffff" stroke-width="1.6" fill="none" stroke-linecap="round"/>
<path d="M486.6 3.5 C484.6 3.4 478.5 3.0 474.4 2.9 C470.3 2.9 465.9 1.9 462.2 3.1 C458.6 4.4 454.1 9.3 452.5 10.5" stroke="#ffffff" stroke-width="1.3" fill="none" stroke-linecap="round"/>
<path d="M944.9 164.5 C943.7 163.7 940.0 161.8 937.8 160.1 C935.7 158.3 933.0 155.0 932.1 154.0" stroke="#ffffff" stroke-width="1.0" fill="none" stroke-linecap="round"/>
<path d="M263.6 91.6 C263.5 94.0 263.1 101.1 263.1 105.8 C263.2 110.6 263.9 117.7 264.0 120.0" stroke="#ffffff" stroke-width="1.3" fill="none" stroke-linecap="round"/>
<path d="M916.6 48.6 C918.4 49.4 924.4 50.9 927.1 53.4 C929.7 55.9 931.8 59.9 932.5 63.5 C933.2 67.1 932.8 71.5 931.4 74.9 C930.1 78.3 925.6 82.5 924.4 84.0" stroke="#ffffff" stroke-width="1.6" fill="none" stroke-linecap="round"/>
<path d="M81.4 99.8 C79.7 98.6 73.7 95.7 71.3 92.6 C68.8 89.5 68.0 85.0 66.7 81.1 C65.4 77.2 63.9 71.2 63.4 69.2" stroke="#ffffff" stroke-width="1.0" fill="none" stroke-linecap="round"/>
<path d="M264.2 124.4 C262.3 122.4 256.1 117.0 252.7 112.8 C249.3 108.5 247.5 102.8 243.8 99.0 C240.0 95.2 234.1 93.6 230.1 90.0 C226.0 86.4 221.3 79.5 219.5 77.4" stroke="#ffffff" stroke-width="1.6" fill="none" stroke-linecap="round"/>
<path d="M444.3 92.6 C444.3 94.7 443.3 101.2 444.1 105.3 C444.8 109.4 447.2 113.2 448.7 117.1 C450.2 121.1 451.3 125.2 453.1 129.0 C454.8 132.9 457.5 136.3 459.3 140.1 C461.2 143.8 463.4 149.8 464.3 151.8" stroke="#ffffff" stroke-width="1.0" fill="none" stroke-linecap="round"/>
<path d="M11.5 59.6 C11.2 61.5 11.2 67.4 9.8 70.7 C8.3 74.0 4.4 76.2 2.7 79.4 C1.0 82.7 0.1 88.4 -0.5 90.2" stroke="#ffffff" stroke-width="1.3" fill="none" stroke-linecap="round"/>
<path d="M54.9 3.7 C53.1 5.3 47.9 10.0 44.4 13.1 C40.9 16.2 35.6 20.8 33.8 22.3" stroke="#ffffff" stroke-width="1.6" fill="none" stroke-linecap="round"/>
<path d="M804.3 59.8 C806.5 60.2 813.6 60.2 817.3 62.2 C821.0 64.1 825.1 70.0 826.6 71.5" stroke="#ffffff" stroke-width="1.6" fill="none" stroke-linecap="round"/>
<path d="M401.7 112.9 C400.9 110.6 397.3 103.8 396.7 99.1 C396.1 94.3 397.6 89.3 398.1 84.4 C398.6 79.5 399.6 72.2 399.9 69.8" stroke="#ffffff" stroke-width="1.0" fill="none" stroke-linecap="round"/>
<path d="M712.2 125.6 C711.2 124.1 707.9 119.8 706.4 116.6 C705.0 113.4 704.7 109.7 703.5 106.3 C702.3 103.0 701.4 99.2 699.3 96.5 C697.1 93.8 693.5 92.2 690.5 90.4 C687.5 88.5 682.6 86.2 681.1 85.4" stroke="#ffffff" stroke-width="2.0" fill="none" stroke-linecap="round"/>
<path d="M530.1 19.8 C527.4 18.9 518.5 17.0 513.5 14.0 C508.5 11.1 503.5 7.0 500.4 2.3 C497.3 -2.5 496.3 -8.8 494.9 -14.5 C493.5 -20.2 493.4 -26.2 492.0 -31.9 C490.5 -37.6 487.2 -45.8 486.2 -48.5" stroke="#ffffff" stroke-width="2.0" fill="none" stroke-linecap="round"/>
<path d="M436.0 77.4 C434.5 78.4 429.8 81.3 427.0 83.7 C424.2 86.0 421.5 88.5 419.2 91.3 C417.0 94.1 415.9 98.0 413.5 100.6 C411.1 103.2 406.1 105.9 404.6 106.9" stroke="#ffffff" stroke-width="1.6" fill="none" stroke-linecap="round"/>
<path d="M819.0 84.4 C817.5 83.3 813.3 79.8 810.3 77.7 C807.2 75.6 804.2 73.5 801.0 71.9 C797.7 70.2 794.3 68.4 790.8 67.6 C787.3 66.9 783.3 68.3 779.8 67.5 C776.3 66.6 771.6 63.3 770.0 62.5" stroke="#ffffff" stroke-width="1.3" fill="none" stroke-linecap="round"/>
<path d="M318.2 163.8 C319.3 166.5 324.3 174.4 324.9 180.0 C325.5 185.6 320.8 191.9 321.7 197.3 C322.5 202.8 328.7 210.2 330.1 212.7" stroke="#ffffff" stroke-width="1.0" fill="none" stroke-linecap="round"/>
<path d="M45.7 95.5 C43.9 95.5 38.4 96.0 34.7 95.9 C31.1 95.7 27.5 94.7 23.8 94.4 C20.2 94.1 16.3 94.9 12.9 93.9 C9.4 93.0 6.1 90.9 3.2 88.6 C0.3 86.4 -3.1 81.9 -4.3 80.6" stroke="#ffffff" stroke-width="2.0" fill="none" stroke-linecap="round"/>
<path d="M414.6 78.5 C412.4 79.2 405.8 81.9 401.3 82.7 C396.8 83.6 389.7 83.4 387.4 83.6" stroke="#ffffff" stroke-width="1.0" fill="none" stroke-linecap="round"/>
<path d="M506.3 16.7 C506.3 14.6 507.0 7.8 505.8 3.7 C504.7 -0.3 502.2 -4.4 499.3 -7.5 C496.5 -10.7 492.3 -12.7 488.7 -15.0 C485.0 -17.3 479.1 -20.2 477.2 -21.2" stroke="#ffffff" stroke-width="1.0" fill="none" stroke-linecap="round"/>
<path d="M387.2 129.7 C385.8 127.6 382.0 121.1 378.8 117.3 C375.7 113.5 372.1 110.0 368.2 106.8 C364.4 103.7 360.4 99.8 355.9 98.4 C351.4 97.0 343.5 98.4 341.0 98.4" stroke="#ffffff" stroke-width="1.6" fill="none" stroke-linecap="round"/>
<path d="M299.4 29.7 C301.7 28.6 308.2 24.1 312.9 23.3 C317.6 22.5 322.8 24.5 327.7 24.8 C332.7 25.0 338.0 25.8 342.6 24.6 C347.3 23.4 353.6 18.7 355.8 17.6" stroke="#ffffff" stroke-width="2.0" fill="none" stroke-linecap="round"/>
<path d="M279.5 86.5 C281.3 87.4 286.5 91.2 290.3 91.9 C294.1 92.7 298.4 91.1 302.4 90.9 C306.4 90.8 312.5 91.1 314.5 91.1" stroke="#ffffff" stroke-width="2.0" fill="none" stroke-linecap="round"/>
<path d="M608.6 122.2 C609.9 122.6 613.8 123.7 616.3 124.7 C618.8 125.6 621.8 126.1 623.8 127.7 C625.8 129.3 626.7 132.3 628.4 134.4 C630.1 136.5 631.7 139.0 633.9 140.4 C636.1 141.7 640.4 142.1 641.7 142.5" stroke="#ffffff" stroke-width="1.6" fill="none" stroke-linecap="round"/>
<path d="M14.9 5.0 C12.7 5.0 6.2 5.4 1.9 4.9 C-2.4 4.5 -6.6 3.2 -10.8 2.2 C-15.0 1.2 -21.3 -0.5 -23.3 -1.1" stroke="#ffffff" stroke-width="2.0" fill="none" stroke-linecap="round"/>
<path d="M961.2 97.1 C962.6 99.0 966.8 104.6 969.5 108.4 C972.2 112.2 974.0 117.2 977.6 119.8 C981.2 122.4 986.6 123.9 991.1 123.9 C995.5 123.8 1000.0 119.6 1004.4 119.7 C1008.9 119.8 1015.5 123.4 1017.7 124.2" stroke="#ffffff" stroke-width="1.0" fill="none" stroke-linecap="round"/>
<path d="M472.8 79.0 C475.3 78.2 482.9 74.9 488.2 74.4 C493.4 73.8 498.9 76.0 504.2 75.8 C509.5 75.6 514.7 73.2 520.0 73.2 C525.3 73.1 530.6 75.2 535.9 75.4 C541.3 75.6 549.3 74.6 552.0 74.4" stroke="#ffffff" stroke-width="1.0" fill="none" stroke-linecap="round"/>
<path d="M163.3 45.1 C164.9 42.8 170.9 36.6 173.1 31.6 C175.2 26.7 175.7 18.1 176.3 15.3" stroke="#ffffff" stroke-width="1.6" fill="none" stroke-linecap="round"/>
<path d="M601.5 3.3 C600.4 0.7 597.3 -7.1 594.8 -12.2 C592.3 -17.3 589.0 -21.9 586.8 -27.1 C584.5 -32.2 582.3 -40.4 581.4 -43.1" stroke="#ffffff" stroke-width="1.6" fill="none" stroke-linecap="round"/>
<path d="M240.4 7.4 C242.2 7.1 247.8 6.5 251.3 5.3 C254.8 4.1 257.8 1.6 261.2 0.2 C264.6 -1.2 270.0 -2.8 271.8 -3.4" stroke="#ffffff" stroke-width="1.0" fill="none" stroke-linecap="round"/>
<path d="M925.5 83.7 C923.9 84.4 918.7 85.8 915.8 87.7 C913.0 89.6 909.6 93.8 908.4 95.0" stroke="#ffffff" stroke-width="2.0" fill="none" stroke-linecap="round"/>
<path d="M298.0 147.9 C298.2 146.6 299.5 142.5 299.4 139.8 C299.2 137.1 298.0 134.5 296.9 132.0 C295.9 129.4 295.1 126.4 293.2 124.6 C291.3 122.8 287.7 123.0 285.7 121.3 C283.6 119.7 281.7 115.8 280.9 114.6" stroke="#ffffff" stroke-width="1.6" fill="none" stroke-linecap="round"/>
<path d="M381.8 61.3 C380.3 63.0 374.7 67.5 373.0 71.4 C371.3 75.3 370.9 80.4 371.6 84.7 C372.3 88.9 376.2 92.6 377.0 96.8 C377.9 101.1 376.7 107.9 376.6 110.2" stroke="#ffffff" stroke-width="1.3" fill="none" stroke-linecap="round"/>
<path d="M338.6 41.4 C337.6 43.2 333.9 48.6 332.5 52.5 C331.1 56.4 329.5 61.0 330.1 64.9 C330.6 68.9 334.9 74.3 335.8 76.2" stroke="#ffffff" stroke-width="1.0" fill="none" stroke-linecap="round"/>
<path d="M775.9 40.9 C775.1 42.1 771.9 45.6 770.9 48.3 C770.0 51.0 770.4 54.2 770.3 57.2 C770.2 60.1 770.4 64.6 770.4 66.1" stroke="#ffffff" stroke-width="1.0" fill="none" stroke-linecap="round"/>
<path d="M806.2 136.0 C806.9 137.9 809.2 143.3 810.1 147.0 C811.1 150.8 811.6 154.7 812.0 158.6 C812.5 162.4 812.5 168.3 812.6 170.2" stroke="#ffffff" stroke-width="1.3" fill="none" stroke-linecap="round"/>
<path d="M286.6 80.4 C285.4 81.7 282.2 85.8 279.5 87.9 C276.9 90.0 273.2 90.9 270.6 93.1 C268.0 95.2 265.0 99.6 263.9 100.9" stroke="#ffffff" stroke-width="1.3" fill="none" stroke-linecap="round"/>
<path d="M867.2 99.3 C865.4 100.5 859.0 103.5 856.1 106.7 C853.3 109.9 852.8 115.2 850.2 118.7 C847.7 122.2 844.1 125.3 840.6 127.9 C837.0 130.5 830.9 133.4 829.0 134.5" stroke="#ffffff" stroke-width="1.3" fill="none" stroke-linecap="round"/>
<path d="M88.2 144.0 C87.3 142.9 85.1 138.9 82.8 137.6 C80.6 136.3 77.3 136.9 74.7 136.0 C72.1 135.1 69.6 133.7 67.4 132.1 C65.2 130.5 63.0 128.6 61.4 126.4 C59.8 124.2 58.5 120.1 58.0 118.9" stroke="#ffffff" stroke-width="1.0" fill="none" stroke-linecap="round"/>
<path d="M223.2 31.8 C224.7 31.7 229.0 30.6 231.8 30.8 C234.7 31.0 238.9 32.6 240.3 32.9" stroke="#ffffff" stroke-width="1.6" fill="none" stroke-linecap="round"/>
<path d="M185.9 121.5 C186.7 123.0 188.6 127.9 190.6 130.6 C192.6 133.3 196.6 136.7 197.8 137.9" stroke="#ffffff" stroke-width="1.6" fill="none" stroke-linecap="round"/>
<path d="M388.9 153.6 C390.6 155.9 397.0 162.3 399.4 167.4 C401.8 172.6 402.8 178.6 403.3 184.3 C403.9 190.1 402.8 198.8 402.7 201.7" stroke="#ffffff" stroke-width="2.0" fill="none" stroke-linecap="round"/>
<path d="M864.7 4.3 C865.3 2.7 867.1 -2.3 868.7 -5.4 C870.3 -8.5 873.3 -11.0 874.4 -14.2 C875.6 -17.4 876.3 -21.2 875.8 -24.6 C875.4 -27.9 872.1 -30.9 871.7 -34.2 C871.3 -37.5 873.2 -42.8 873.5 -44.5" stroke="#ffffff" stroke-width="1.6" fill="none" stroke-linecap="round"/>
<path d="M707.6 120.4 C706.0 119.3 700.4 116.5 697.6 113.8 C694.7 111.1 691.7 105.7 690.5 104.0" stroke="#ffffff" stroke-width="1.3" fill="none" stroke-linecap="round"/>
<path d="M150.6 124.8 C152.9 124.1 160.1 122.9 164.3 120.8 C168.5 118.7 171.8 115.0 175.6 112.1 C179.3 109.1 183.1 106.1 186.8 103.2 C190.6 100.4 196.4 96.2 198.4 94.8" stroke="#ffffff" stroke-width="1.6" fill="none" stroke-linecap="round"/>
<path d="M892.4 113.3 C893.8 115.8 898.5 123.2 900.7 128.5 C902.9 133.8 905.5 139.6 905.5 145.2 C905.5 150.7 903.6 157.1 900.7 161.8 C897.8 166.6 890.3 171.9 888.2 173.9" stroke="#ffffff" stroke-width="1.3" fill="none" stroke-linecap="round"/>
<path d="M564.1 117.6 C566.5 117.6 574.1 116.5 578.9 117.3 C583.6 118.2 587.9 121.4 592.7 122.6 C597.4 123.9 604.9 124.5 607.3 124.9" stroke="#ffffff" stroke-width="1.6" fill="none" stroke-linecap="round"/>
<path d="M880.8 70.5 C877.9 69.5 869.4 66.7 863.8 64.7 C858.1 62.6 852.7 59.7 847.0 58.2 C841.2 56.6 834.3 57.9 829.2 55.3 C824.2 52.7 820.9 46.6 816.6 42.6 C812.2 38.5 805.2 32.8 802.9 30.9" stroke="#ffffff" stroke-width="2.0" fill="none" stroke-linecap="round"/>
<path d="M328.0 85.0 C326.4 83.6 321.0 79.8 318.0 76.6 C315.0 73.5 311.9 70.0 310.3 66.1 C308.7 62.2 308.1 57.4 308.3 53.1 C308.5 48.9 310.5 44.7 311.5 40.4 C312.5 36.2 313.9 29.8 314.4 27.7" stroke="#ffffff" stroke-width="1.0" fill="none" stroke-linecap="round"/>
<path d="M182.5 160.9 C182.7 162.5 182.9 167.6 183.9 170.6 C185.0 173.6 186.7 176.6 188.8 179.0 C190.8 181.5 194.6 182.8 196.1 185.4 C197.7 188.1 197.8 193.4 198.1 195.0" stroke="#ffffff" stroke-width="1.6" fill="none" stroke-linecap="round"/>
<path d="M162.0 58.7 C162.2 60.3 163.3 65.3 163.3 68.6 C163.2 71.9 162.0 76.9 161.7 78.5" stroke="#ffffff" stroke-width="2.0" fill="none" stroke-linecap="round"/>
<path d="M646.2 40.2 C645.2 39.3 641.9 37.0 640.0 35.1 C638.1 33.2 636.3 31.1 634.9 28.9 C633.5 26.6 632.2 22.7 631.7 21.5" stroke="#ffffff" stroke-width="1.6" fill="none" stroke-linecap="round"/>
<path d="M128.6 119.6 C129.5 117.9 131.5 112.5 133.8 109.5 C136.1 106.6 140.1 105.0 142.2 102.0 C144.3 98.9 145.7 93.2 146.4 91.4" stroke="#ffffff" stroke-width="1.6" fill="none" stroke-linecap="round"/>
<path d="M642.5 101.2 C641.1 103.5 637.2 110.9 633.7 115.0 C630.2 119.1 624.0 121.5 621.6 126.0 C619.1 130.5 619.9 136.8 619.1 142.2 C618.3 147.6 615.9 153.4 616.9 158.5 C617.9 163.6 623.5 170.4 624.9 172.8" stroke="#ffffff" stroke-width="1.6" fill="none" stroke-linecap="round"/>
<path d="M863.6 51.4 C861.9 53.3 856.6 58.7 853.9 62.8 C851.2 67.0 848.4 74.1 847.3 76.3" stroke="#ffffff" stroke-width="1.3" fill="none" stroke-linecap="round"/>
<path d="M451.8 61.3 C454.0 61.9 461.4 62.3 465.0 64.6 C468.5 66.9 470.5 71.8 473.3 75.3 C476.1 78.9 480.3 84.2 481.8 85.9" stroke="#ffffff" stroke-width="1.6" fill="none" stroke-linecap="round"/>
<path d="M720.4 56.1 C718.9 56.3 714.2 56.4 711.4 57.5 C708.7 58.6 706.5 61.0 703.9 62.7 C701.4 64.3 697.9 65.1 696.1 67.3 C694.3 69.5 693.5 74.4 693.0 75.9" stroke="#ffffff" stroke-width="1.0" fill="none" stroke-linecap="round"/>
<path d="M886.5 108.9 C888.1 110.7 892.2 117.5 896.2 119.7 C900.2 121.9 905.7 121.7 910.5 122.2 C915.3 122.7 920.4 123.6 925.0 122.6 C929.6 121.6 935.8 117.1 938.0 116.0" stroke="#ffffff" stroke-width="2.0" fill="none" stroke-linecap="round"/>
<path d="M354.6 162.6 C354.0 161.2 351.7 157.3 350.6 154.5 C349.5 151.7 349.1 148.7 347.9 145.9 C346.8 143.1 344.5 139.2 343.9 137.8" stroke="#ffffff" stroke-width="1.0" fill="none" stroke-linecap="round"/>
<path d="M624.0 60.2 C622.1 59.9 616.0 60.0 612.4 58.6 C608.9 57.2 606.3 53.6 602.8 52.0 C599.3 50.5 593.3 49.7 591.4 49.3" stroke="#ffffff" stroke-width="1.6" fill="none" stroke-linecap="round"/>
<path d="M39.8 95.8 C42.4 94.8 50.4 91.8 55.7 89.8 C61.1 87.9 67.2 87.0 71.7 83.9 C76.3 80.8 80.0 75.9 83.1 71.2 C86.3 66.5 87.8 60.8 90.6 55.9 C93.4 50.9 98.2 43.9 99.8 41.5" stroke="#ffffff" stroke-width="1.3" fill="none" stroke-linecap="round"/>
<path d="M77.3 116.3 C76.2 115.2 71.7 112.7 70.3 110.1 C68.8 107.5 68.4 103.9 68.6 100.9 C68.8 97.8 71.0 93.4 71.5 91.9" stroke="#ffffff" stroke-width="1.3" fill="none" stroke-linecap="round"/>
<path d="M462.1 36.9 C463.3 36.2 466.7 33.8 469.2 33.0 C471.7 32.2 474.5 32.6 477.2 32.2 C479.8 31.8 482.5 31.4 485.0 30.5 C487.5 29.6 490.8 27.2 492.0 26.6" stroke="#ffffff" stroke-width="2.0" fill="none" stroke-linecap="round"/>
<path d="M637.8 87.0 C640.5 86.2 648.6 81.9 654.0 82.1 C659.3 82.2 664.4 87.1 669.9 87.8 C675.4 88.4 681.1 85.7 686.7 86.0 C692.3 86.2 697.7 88.7 703.3 89.4 C708.8 90.1 717.3 89.9 720.2 90.0" stroke="#ffffff" stroke-width="1.0" fill="none" stroke-linecap="round"/>
<path d="M4.0 135.9 C1.8 136.2 -5.0 137.2 -9.5 137.8 C-14.0 138.3 -18.6 138.6 -23.1 139.3 C-27.6 140.1 -32.0 141.4 -36.5 142.2 C-40.9 143.1 -47.7 144.1 -49.9 144.5" stroke="#ffffff" stroke-width="1.0" fill="none" stroke-linecap="round"/>
<path d="M63.0 0.0 C62.7 7.0 63.0 28.3 61.0 42.0 C59.0 55.7 56.7 71.7 51.0 82.0 C45.3 92.3 33.3 96.8 27.0 104.0 C20.7 111.2 16.5 117.7 13.0 125.0 C9.5 132.3 7.8 140.7 6.0 148.0 C4.2 155.3 2.7 165.5 2.0 169.0" stroke="#fff" stroke-width="6.7" fill="none" stroke-linejoin="round" stroke-linecap="round"/>
<path d="M63.0 0.0 C62.7 7.0 63.0 28.3 61.0 42.0 C59.0 55.7 56.7 71.7 51.0 82.0 C45.3 92.3 33.3 96.8 27.0 104.0 C20.7 111.2 16.5 117.7 13.0 125.0 C9.5 132.3 7.8 140.7 6.0 148.0 C4.2 155.3 2.7 165.5 2.0 169.0" stroke="#55cc55" stroke-width="4.7" fill="none" stroke-linejoin="round" stroke-linecap="round"/>
<path d="M63.0 0.0 C62.7 7.0 63.0 28.3 61.0 42.0 C59.0 55.7 56.7 71.7 51.0 82.0 C45.3 92.3 33.3 96.8 27.0 104.0 C20.7 111.2 16.5 117.7 13.0 125.0 C9.5 132.3 7.8 140.7 6.0 148.0 C4.2 155.3 2.7 165.5 2.0 169.0" stroke="#fff" stroke-width="1.3" fill="none" stroke-linejoin="round" opacity="0.95"/>
<path d="M99.0 30.0 C103.7 28.0 117.2 20.5 127.0 18.0 C136.8 15.5 149.2 14.5 158.0 15.0 C166.8 15.5 171.2 19.5 180.0 21.0 C188.8 22.5 201.0 24.3 211.0 24.0 C221.0 23.7 231.0 22.3 240.0 19.0 C249.0 15.7 260.0 7.2 265.0 4.0 C270.0 0.8 269.2 0.7 270.0 0.0" stroke="#fff" stroke-width="6.7" fill="none" stroke-linejoin="round" stroke-linecap="round"/>
<path d="M99.0 30.0 C103.7 28.0 117.2 20.5 127.0 18.0 C136.8 15.5 149.2 14.5 158.0 15.0 C166.8 15.5 171.2 19.5 180.0 21.0 C188.8 22.5 201.0 24.3 211.0 24.0 C221.0 23.7 231.0 22.3 240.0 19.0 C249.0 15.7 260.0 7.2 265.0 4.0 C270.0 0.8 269.2 0.7 270.0 0.0" stroke="#55cc55" stroke-width="4.7" fill="none" stroke-linejoin="round" stroke-linecap="round"/>
<path d="M99.0 30.0 C103.7 28.0 117.2 20.5 127.0 18.0 C136.8 15.5 149.2 14.5 158.0 15.0 C166.8 15.5 171.2 19.5 180.0 21.0 C188.8 22.5 201.0 24.3 211.0 24.0 C221.0 23.7 231.0 22.3 240.0 19.0 C249.0 15.7 260.0 7.2 265.0 4.0 C270.0 0.8 269.2 0.7 270.0 0.0" stroke="#fff" stroke-width="1.3" fill="none" stroke-linejoin="round" opacity="0.95"/>
<path d="M25.0 152.0 C29.7 146.3 45.5 125.0 53.0 118.0 C60.5 111.0 63.0 111.5 70.0 110.0 C77.0 108.5 81.3 112.5 95.0 109.0 C108.7 105.5 138.7 93.8 152.0 89.0 C165.3 84.2 167.7 81.0 175.0 80.0 C182.3 79.0 190.3 83.3 196.0 83.0 C201.7 82.7 204.3 80.5 209.0 78.0 C213.7 75.5 218.8 73.3 224.0 68.0 C229.2 62.7 237.3 49.7 240.0 46.0" stroke="#fff" stroke-width="6.7" fill="none" stroke-linejoin="round" stroke-linecap="round"/>
<path d="M25.0 152.0 C29.7 146.3 45.5 125.0 53.0 118.0 C60.5 111.0 63.0 111.5 70.0 110.0 C77.0 108.5 81.3 112.5 95.0 109.0 C108.7 105.5 138.7 93.8 152.0 89.0 C165.3 84.2 167.7 81.0 175.0 80.0 C182.3 79.0 190.3 83.3 196.0 83.0 C201.7 82.7 204.3 80.5 209.0 78.0 C213.7 75.5 218.8 73.3 224.0 68.0 C229.2 62.7 237.3 49.7 240.0 46.0" stroke="#55cc55" stroke-width="4.7" fill="none" stroke-linejoin="round" stroke-linecap="round"/>
<path d="M25.0 152.0 C29.7 146.3 45.5 125.0 53.0 118.0 C60.5 111.0 63.0 111.5 70.0 110.0 C77.0 108.5 81.3 112.5 95.0 109.0 C108.7 105.5 138.7 93.8 152.0 89.0 C165.3 84.2 167.7 81.0 175.0 80.0 C182.3 79.0 190.3 83.3 196.0 83.0 C201.7 82.7 204.3 80.5 209.0 78.0 C213.7 75.5 218.8 73.3 224.0 68.0 C229.2 62.7 237.3 49.7 240.0 46.0" stroke="#f28a3a" stroke-width="4.7" fill="none" stroke-dasharray="0 52 5 2000"/>
<path d="M25.0 152.0 C29.7 146.3 45.5 125.0 53.0 118.0 C60.5 111.0 63.0 111.5 70.0 110.0 C77.0 108.5 81.3 112.5 95.0 109.0 C108.7 105.5 138.7 93.8 152.0 89.0 C165.3 84.2 167.7 81.0 175.0 80.0 C182.3 79.0 190.3 83.3 196.0 83.0 C201.7 82.7 204.3 80.5 209.0 78.0 C213.7 75.5 218.8 73.3 224.0 68.0 C229.2 62.7 237.3 49.7 240.0 46.0" stroke="#e21d1d" stroke-width="4.7" fill="none" stroke-dasharray="0 196 6 2000"/>
<path d="M25.0 152.0 C29.7 146.3 45.5 125.0 53.0 118.0 C60.5 111.0 63.0 111.5 70.0 110.0 C77.0 108.5 81.3 112.5 95.0 109.0 C108.7 105.5 138.7 93.8 152.0 89.0 C165.3 84.2 167.7 81.0 175.0 80.0 C182.3 79.0 190.3 83.3 196.0 83.0 C201.7 82.7 204.3 80.5 209.0 78.0 C213.7 75.5 218.8 73.3 224.0 68.0 C229.2 62.7 237.3 49.7 240.0 46.0" stroke="#fff" stroke-width="1.3" fill="none" stroke-linejoin="round" opacity="0.95"/>
<path d="M240.0 46.0 C243.5 44.3 254.0 39.8 261.0 36.0 C268.0 32.2 275.0 26.9 282.0 23.0 C289.0 19.1 297.7 16.2 303.0 12.7 C308.3 9.2 312.2 3.8 314.0 2.0" stroke="#fff" stroke-width="6.3" fill="none" stroke-linejoin="round" stroke-linecap="round"/>
<path d="M240.0 46.0 C243.5 44.3 254.0 39.8 261.0 36.0 C268.0 32.2 275.0 26.9 282.0 23.0 C289.0 19.1 297.7 16.2 303.0 12.7 C308.3 9.2 312.2 3.8 314.0 2.0" stroke="#f28a3a" stroke-width="4.3" fill="none" stroke-linejoin="round" stroke-linecap="round"/>
<path d="M240.0 46.0 C243.5 44.3 254.0 39.8 261.0 36.0 C268.0 32.2 275.0 26.9 282.0 23.0 C289.0 19.1 297.7 16.2 303.0 12.7 C308.3 9.2 312.2 3.8 314.0 2.0" stroke="#55cc55" stroke-width="4.3" fill="none" stroke-dasharray="0 20 12 30 40"/>
<path d="M240.0 46.0 C243.5 44.3 254.0 39.8 261.0 36.0 C268.0 32.2 275.0 26.9 282.0 23.0 C289.0 19.1 297.7 16.2 303.0 12.7 C308.3 9.2 312.2 3.8 314.0 2.0" stroke="#fff" stroke-width="1.3" fill="none" stroke-linejoin="round" opacity="0.95"/>
<path d="M169.0 32.0 C170.0 33.7 171.5 38.5 175.0 42.0 C178.5 45.5 184.0 51.2 190.0 53.0 C196.0 54.8 204.0 53.5 211.0 53.0 C218.0 52.5 228.5 50.5 232.0 50.0" stroke="#fff" stroke-width="6.3" fill="none" stroke-linejoin="round" stroke-linecap="round"/>
<path d="M169.0 32.0 C170.0 33.7 171.5 38.5 175.0 42.0 C178.5 45.5 184.0 51.2 190.0 53.0 C196.0 54.8 204.0 53.5 211.0 53.0 C218.0 52.5 228.5 50.5 232.0 50.0" stroke="#55cc55" stroke-width="4.3" fill="none" stroke-linejoin="round" stroke-linecap="round"/>
<path d="M169.0 32.0 C170.0 33.7 171.5 38.5 175.0 42.0 C178.5 45.5 184.0 51.2 190.0 53.0 C196.0 54.8 204.0 53.5 211.0 53.0 C218.0 52.5 228.5 50.5 232.0 50.0" stroke="#f28a3a" stroke-width="4.3" fill="none" stroke-dasharray="0 8 18 30 8 100"/>
<path d="M169.0 32.0 C170.0 33.7 171.5 38.5 175.0 42.0 C178.5 45.5 184.0 51.2 190.0 53.0 C196.0 54.8 204.0 53.5 211.0 53.0 C218.0 52.5 228.5 50.5 232.0 50.0" stroke="#fff" stroke-width="1.3" fill="none" stroke-linejoin="round" opacity="0.95"/>
<path d="M0.0 25.0 C1.3 26.8 7.3 33.5 8.0 36.0 C8.7 38.5 4.7 39.3 4.0 40.0" stroke="#fff" stroke-width="7.7" fill="none" stroke-linejoin="round" stroke-linecap="round"/>
<path d="M0.0 25.0 C1.3 26.8 7.3 33.5 8.0 36.0 C8.7 38.5 4.7 39.3 4.0 40.0" stroke="#55cc55" stroke-width="5.7" fill="none" stroke-linejoin="round" stroke-linecap="round"/>
<path d="M0.0 25.0 C1.3 26.8 7.3 33.5 8.0 36.0 C8.7 38.5 4.7 39.3 4.0 40.0" stroke="#fff" stroke-width="1.3" fill="none" stroke-linejoin="round" opacity="0.95"/>
<path d="M78.0 169.0 C86.2 166.2 114.7 154.8 127.0 152.0 C139.3 149.2 145.0 149.8 152.0 152.0 C159.0 154.2 165.7 162.2 169.0 165.0 C172.3 167.8 171.5 168.3 172.0 169.0" stroke="#fff" stroke-width="6.3" fill="none" stroke-linejoin="round" stroke-linecap="round"/>
<path d="M78.0 169.0 C86.2 166.2 114.7 154.8 127.0 152.0 C139.3 149.2 145.0 149.8 152.0 152.0 C159.0 154.2 165.7 162.2 169.0 165.0 C172.3 167.8 171.5 168.3 172.0 169.0" stroke="#55cc55" stroke-width="4.3" fill="none" stroke-linejoin="round" stroke-linecap="round"/>
<path d="M78.0 169.0 C86.2 166.2 114.7 154.8 127.0 152.0 C139.3 149.2 145.0 149.8 152.0 152.0 C159.0 154.2 165.7 162.2 169.0 165.0 C172.3 167.8 171.5 168.3 172.0 169.0" stroke="#f28a3a" stroke-width="4.3" fill="none" stroke-dasharray="0 5 30 20 20 100"/>
<path d="M78.0 169.0 C86.2 166.2 114.7 154.8 127.0 152.0 C139.3 149.2 145.0 149.8 152.0 152.0 C159.0 154.2 165.7 162.2 169.0 165.0 C172.3 167.8 171.5 168.3 172.0 169.0" stroke="#fff" stroke-width="1.3" fill="none" stroke-linejoin="round" opacity="0.95"/>
<path d="M194.0 101.0 C193.0 103.8 191.2 114.0 188.0 118.0 C184.8 122.0 179.5 120.7 175.0 125.0 C170.5 129.3 165.5 138.8 161.0 144.0 C156.5 149.2 152.3 151.8 148.0 156.0 C143.7 160.2 137.2 166.8 135.0 169.0" stroke="#fff" stroke-width="6.3" fill="none" stroke-linejoin="round" stroke-linecap="round"/>
<path d="M194.0 101.0 C193.0 103.8 191.2 114.0 188.0 118.0 C184.8 122.0 179.5 120.7 175.0 125.0 C170.5 129.3 165.5 138.8 161.0 144.0 C156.5 149.2 152.3 151.8 148.0 156.0 C143.7 160.2 137.2 166.8 135.0 169.0" stroke="#55cc55" stroke-width="4.3" fill="none" stroke-linejoin="round" stroke-linecap="round"/>
<path d="M194.0 101.0 C193.0 103.8 191.2 114.0 188.0 118.0 C184.8 122.0 179.5 120.7 175.0 125.0 C170.5 129.3 165.5 138.8 161.0 144.0 C156.5 149.2 152.3 151.8 148.0 156.0 C143.7 160.2 137.2 166.8 135.0 169.0" stroke="#f28a3a" stroke-width="4.3" fill="none" stroke-dasharray="0 25 10 8 6 100"/>
<path d="M194.0 101.0 C193.0 103.8 191.2 114.0 188.0 118.0 C184.8 122.0 179.5 120.7 175.0 125.0 C170.5 129.3 165.5 138.8 161.0 144.0 C156.5 149.2 152.3 151.8 148.0 156.0 C143.7 160.2 137.2 166.8 135.0 169.0" stroke="#e21d1d" stroke-width="4.3" fill="none" stroke-dasharray="0 44 4 200"/>
<path d="M194.0 101.0 C193.0 103.8 191.2 114.0 188.0 118.0 C184.8 122.0 179.5 120.7 175.0 125.0 C170.5 129.3 165.5 138.8 161.0 144.0 C156.5 149.2 152.3 151.8 148.0 156.0 C143.7 160.2 137.2 166.8 135.0 169.0" stroke="#fff" stroke-width="1.3" fill="none" stroke-linejoin="round" opacity="0.95"/>
<path d="M135.0 0.0 L148.0 13.0" stroke="#fff" stroke-width="6.3" fill="none" stroke-linejoin="round" stroke-linecap="round"/>
<path d="M135.0 0.0 L148.0 13.0" stroke="#55cc55" stroke-width="4.3" fill="none" stroke-linejoin="round" stroke-linecap="round"/>
<path d="M135.0 0.0 L148.0 13.0" stroke="#fff" stroke-width="1.3" fill="none" stroke-linejoin="round" opacity="0.95"/>
<path d="M169.0 0.0 L154.0 13.0" stroke="#fff" stroke-width="6.3" fill="none" stroke-linejoin="round" stroke-linecap="round"/>
<path d="M169.0 0.0 L154.0 13.0" stroke="#55cc55" stroke-width="4.3" fill="none" stroke-linejoin="round" stroke-linecap="round"/>
<path d="M169.0 0.0 L154.0 13.0" stroke="#f28a3a" stroke-width="4.3" fill="none" stroke-dasharray="0 10 6 100"/>
<path d="M169.0 0.0 L154.0 13.0" stroke="#fff" stroke-width="1.3" fill="none" stroke-linejoin="round" opacity="0.95"/>
<path d="M339.0 25.0 C340.8 29.7 349.7 43.8 350.0 53.0 C350.3 62.2 344.2 70.5 341.0 80.0 C337.8 89.5 333.8 103.7 331.0 110.0 C328.2 116.3 329.8 113.5 324.5 118.0 C319.2 122.5 307.8 128.5 299.0 137.0 C290.2 145.5 276.5 163.7 272.0 169.0" stroke="#fff" stroke-width="6.9" fill="none" stroke-linejoin="round" stroke-linecap="round"/>
<path d="M339.0 25.0 C340.8 29.7 349.7 43.8 350.0 53.0 C350.3 62.2 344.2 70.5 341.0 80.0 C337.8 89.5 333.8 103.7 331.0 110.0 C328.2 116.3 329.8 113.5 324.5 118.0 C319.2 122.5 307.8 128.5 299.0 137.0 C290.2 145.5 276.5 163.7 272.0 169.0" stroke="#55cc55" stroke-width="4.9" fill="none" stroke-linejoin="round" stroke-linecap="round"/>
<path d="M339.0 25.0 C340.8 29.7 349.7 43.8 350.0 53.0 C350.3 62.2 344.2 70.5 341.0 80.0 C337.8 89.5 333.8 103.7 331.0 110.0 C328.2 116.3 329.8 113.5 324.5 118.0 C319.2 122.5 307.8 128.5 299.0 137.0 C290.2 145.5 276.5 163.7 272.0 169.0" stroke="#fff" stroke-width="1.3" fill="none" stroke-linejoin="round" opacity="0.95"/>
<path d="M329.0 0.0 L339.0 25.0" stroke="#fff" stroke-width="6.9" fill="none" stroke-linejoin="round" stroke-linecap="round"/>
<path d="M329.0 0.0 L339.0 25.0" stroke="#55cc55" stroke-width="4.9" fill="none" stroke-linejoin="round" stroke-linecap="round"/>
<path d="M329.0 0.0 L339.0 25.0" stroke="#fff" stroke-width="1.3" fill="none" stroke-linejoin="round" opacity="0.95"/>
<path d="M339.0 25.0 C334.8 29.3 320.3 44.2 314.0 51.0 C307.7 57.8 303.8 57.2 301.0 65.5 C298.2 73.8 296.7 94.2 297.0 101.0 C297.3 107.8 297.7 104.5 303.0 106.0 C308.3 107.5 324.7 109.3 329.0 110.0" stroke="#fff" stroke-width="6.3" fill="none" stroke-linejoin="round" stroke-linecap="round"/>
<path d="M339.0 25.0 C334.8 29.3 320.3 44.2 314.0 51.0 C307.7 57.8 303.8 57.2 301.0 65.5 C298.2 73.8 296.7 94.2 297.0 101.0 C297.3 107.8 297.7 104.5 303.0 106.0 C308.3 107.5 324.7 109.3 329.0 110.0" stroke="#55cc55" stroke-width="4.3" fill="none" stroke-linejoin="round" stroke-linecap="round"/>
<path d="M339.0 25.0 C334.8 29.3 320.3 44.2 314.0 51.0 C307.7 57.8 303.8 57.2 301.0 65.5 C298.2 73.8 296.7 94.2 297.0 101.0 C297.3 107.8 297.7 104.5 303.0 106.0 C308.3 107.5 324.7 109.3 329.0 110.0" stroke="#f28a3a" stroke-width="4.3" fill="none" stroke-dasharray="0 18 8 12 10 200"/>
<path d="M339.0 25.0 C334.8 29.3 320.3 44.2 314.0 51.0 C307.7 57.8 303.8 57.2 301.0 65.5 C298.2 73.8 296.7 94.2 297.0 101.0 C297.3 107.8 297.7 104.5 303.0 106.0 C308.3 107.5 324.7 109.3 329.0 110.0" stroke="#fff" stroke-width="1.3" fill="none" stroke-linejoin="round" opacity="0.95"/>
<path d="M270.0 68.0 C269.6 70.8 269.7 78.2 267.5 84.5 C265.3 90.8 260.9 97.2 257.0 106.0 C253.1 114.8 246.8 127.8 244.0 137.0 C241.2 146.2 241.0 155.7 240.0 161.0 C239.0 166.3 238.3 167.7 238.0 169.0" stroke="#fff" stroke-width="6.3" fill="none" stroke-linejoin="round" stroke-linecap="round"/>
<path d="M270.0 68.0 C269.6 70.8 269.7 78.2 267.5 84.5 C265.3 90.8 260.9 97.2 257.0 106.0 C253.1 114.8 246.8 127.8 244.0 137.0 C241.2 146.2 241.0 155.7 240.0 161.0 C239.0 166.3 238.3 167.7 238.0 169.0" stroke="#55cc55" stroke-width="4.3" fill="none" stroke-linejoin="round" stroke-linecap="round"/>
<path d="M270.0 68.0 C269.6 70.8 269.7 78.2 267.5 84.5 C265.3 90.8 260.9 97.2 257.0 106.0 C253.1 114.8 246.8 127.8 244.0 137.0 C241.2 146.2 241.0 155.7 240.0 161.0 C239.0 166.3 238.3 167.7 238.0 169.0" stroke="#f28a3a" stroke-width="4.3" fill="none" stroke-dasharray="0 12 8 40 6 300"/>
<path d="M270.0 68.0 C269.6 70.8 269.7 78.2 267.5 84.5 C265.3 90.8 260.9 97.2 257.0 106.0 C253.1 114.8 246.8 127.8 244.0 137.0 C241.2 146.2 241.0 155.7 240.0 161.0 C239.0 166.3 238.3 167.7 238.0 169.0" stroke="#fff" stroke-width="1.3" fill="none" stroke-linejoin="round" opacity="0.95"/>
<path d="M280.0 61.0 L299.0 68.0" stroke="#fff" stroke-width="6.3" fill="none" stroke-linejoin="round" stroke-linecap="round"/>
<path d="M280.0 61.0 L299.0 68.0" stroke="#55cc55" stroke-width="4.3" fill="none" stroke-linejoin="round" stroke-linecap="round"/>
<path d="M280.0 61.0 L299.0 68.0" stroke="#fff" stroke-width="1.3" fill="none" stroke-linejoin="round" opacity="0.95"/>
<path d="M352.0 53.0 C356.2 55.8 370.3 64.8 377.0 70.0 C383.7 75.2 387.3 80.0 392.0 84.5 C396.7 89.0 399.3 93.5 405.0 97.0 C410.7 100.5 422.5 104.2 426.0 105.6" stroke="#fff" stroke-width="6.3" fill="none" stroke-linejoin="round" stroke-linecap="round"/>
<path d="M352.0 53.0 C356.2 55.8 370.3 64.8 377.0 70.0 C383.7 75.2 387.3 80.0 392.0 84.5 C396.7 89.0 399.3 93.5 405.0 97.0 C410.7 100.5 422.5 104.2 426.0 105.6" stroke="#55cc55" stroke-width="4.3" fill="none" stroke-linejoin="round" stroke-linecap="round"/>
<path d="M352.0 53.0 C356.2 55.8 370.3 64.8 377.0 70.0 C383.7 75.2 387.3 80.0 392.0 84.5 C396.7 89.0 399.3 93.5 405.0 97.0 C410.7 100.5 422.5 104.2 426.0 105.6" stroke="#f28a3a" stroke-width="4.3" fill="none" stroke-dasharray="0 10 15 30 10 200"/>
<path d="M352.0 53.0 C356.2 55.8 370.3 64.8 377.0 70.0 C383.7 75.2 387.3 80.0 392.0 84.5 C396.7 89.0 399.3 93.5 405.0 97.0 C410.7 100.5 422.5 104.2 426.0 105.6" stroke="#e21d1d" stroke-width="4.3" fill="none" stroke-dasharray="0 42 8 20 6 200"/>
<path d="M352.0 53.0 C356.2 55.8 370.3 64.8 377.0 70.0 C383.7 75.2 387.3 80.0 392.0 84.5 C396.7 89.0 399.3 93.5 405.0 97.0 C410.7 100.5 422.5 104.2 426.0 105.6" stroke="#fff" stroke-width="1.3" fill="none" stroke-linejoin="round" opacity="0.95"/>
<path d="M472.0 0.0 C468.2 3.2 451.8 12.0 449.0 19.0 C446.2 26.0 454.8 33.5 455.5 42.0 C456.2 50.5 454.4 62.9 453.0 70.0 C451.6 77.1 450.8 78.6 447.0 84.5 C443.2 90.4 433.5 100.7 430.0 105.6 C426.5 110.5 426.7 109.1 426.0 114.0 C425.3 118.9 428.8 129.3 426.0 135.0 C423.2 140.7 412.5 142.3 409.0 148.0 C405.5 153.7 405.7 165.5 405.0 169.0" stroke="#fff" stroke-width="7.3" fill="none" stroke-linejoin="round" stroke-linecap="round"/>
<path d="M472.0 0.0 C468.2 3.2 451.8 12.0 449.0 19.0 C446.2 26.0 454.8 33.5 455.5 42.0 C456.2 50.5 454.4 62.9 453.0 70.0 C451.6 77.1 450.8 78.6 447.0 84.5 C443.2 90.4 433.5 100.7 430.0 105.6 C426.5 110.5 426.7 109.1 426.0 114.0 C425.3 118.9 428.8 129.3 426.0 135.0 C423.2 140.7 412.5 142.3 409.0 148.0 C405.5 153.7 405.7 165.5 405.0 169.0" stroke="#55cc55" stroke-width="5.3" fill="none" stroke-linejoin="round" stroke-linecap="round"/>
<path d="M472.0 0.0 C468.2 3.2 451.8 12.0 449.0 19.0 C446.2 26.0 454.8 33.5 455.5 42.0 C456.2 50.5 454.4 62.9 453.0 70.0 C451.6 77.1 450.8 78.6 447.0 84.5 C443.2 90.4 433.5 100.7 430.0 105.6 C426.5 110.5 426.7 109.1 426.0 114.0 C425.3 118.9 428.8 129.3 426.0 135.0 C423.2 140.7 412.5 142.3 409.0 148.0 C405.5 153.7 405.7 165.5 405.0 169.0" stroke="#e21d1d" stroke-width="5.3" fill="none" stroke-dasharray="0 25 45 2000"/>
<path d="M472.0 0.0 C468.2 3.2 451.8 12.0 449.0 19.0 C446.2 26.0 454.8 33.5 455.5 42.0 C456.2 50.5 454.4 62.9 453.0 70.0 C451.6 77.1 450.8 78.6 447.0 84.5 C443.2 90.4 433.5 100.7 430.0 105.6 C426.5 110.5 426.7 109.1 426.0 114.0 C425.3 118.9 428.8 129.3 426.0 135.0 C423.2 140.7 412.5 142.3 409.0 148.0 C405.5 153.7 405.7 165.5 405.0 169.0" stroke="#861616" stroke-width="5.3" fill="none" stroke-dasharray="0 62 6 2000"/>
<path d="M472.0 0.0 C468.2 3.2 451.8 12.0 449.0 19.0 C446.2 26.0 454.8 33.5 455.5 42.0 C456.2 50.5 454.4 62.9 453.0 70.0 C451.6 77.1 450.8 78.6 447.0 84.5 C443.2 90.4 433.5 100.7 430.0 105.6 C426.5 110.5 426.7 109.1 426.0 114.0 C425.3 118.9 428.8 129.3 426.0 135.0 C423.2 140.7 412.5 142.3 409.0 148.0 C405.5 153.7 405.7 165.5 405.0 169.0" stroke="#f28a3a" stroke-width="5.3" fill="none" stroke-dasharray="0 0 24 50 38 2000"/>
<path d="M472.0 0.0 C468.2 3.2 451.8 12.0 449.0 19.0 C446.2 26.0 454.8 33.5 455.5 42.0 C456.2 50.5 454.4 62.9 453.0 70.0 C451.6 77.1 450.8 78.6 447.0 84.5 C443.2 90.4 433.5 100.7 430.0 105.6 C426.5 110.5 426.7 109.1 426.0 114.0 C425.3 118.9 428.8 129.3 426.0 135.0 C423.2 140.7 412.5 142.3 409.0 148.0 C405.5 153.7 405.7 165.5 405.0 169.0" stroke="#fff" stroke-width="1.3" fill="none" stroke-linejoin="round" opacity="0.95"/>
<path d="M424.0 105.6 C428.5 107.7 444.3 113.1 451.0 118.0 C457.7 122.9 459.2 130.7 464.0 135.0 C468.8 139.3 474.0 143.3 480.0 144.0 C486.0 144.7 496.7 140.2 500.0 139.4" stroke="#fff" stroke-width="6.3" fill="none" stroke-linejoin="round" stroke-linecap="round"/>
<path d="M424.0 105.6 C428.5 107.7 444.3 113.1 451.0 118.0 C457.7 122.9 459.2 130.7 464.0 135.0 C468.8 139.3 474.0 143.3 480.0 144.0 C486.0 144.7 496.7 140.2 500.0 139.4" stroke="#55cc55" stroke-width="4.3" fill="none" stroke-linejoin="round" stroke-linecap="round"/>
<path d="M424.0 105.6 C428.5 107.7 444.3 113.1 451.0 118.0 C457.7 122.9 459.2 130.7 464.0 135.0 C468.8 139.3 474.0 143.3 480.0 144.0 C486.0 144.7 496.7 140.2 500.0 139.4" stroke="#e21d1d" stroke-width="4.3" fill="none" stroke-dasharray="0 48 8 2000"/>
<path d="M424.0 105.6 C428.5 107.7 444.3 113.1 451.0 118.0 C457.7 122.9 459.2 130.7 464.0 135.0 C468.8 139.3 474.0 143.3 480.0 144.0 C486.0 144.7 496.7 140.2 500.0 139.4" stroke="#fff" stroke-width="1.3" fill="none" stroke-linejoin="round" opacity="0.95"/>
<path d="M331.0 110.0 C337.0 112.8 358.2 120.7 367.0 127.0 C375.8 133.3 379.8 141.0 384.0 148.0 C388.2 155.0 390.7 165.5 392.0 169.0" stroke="#fff" stroke-width="6.3" fill="none" stroke-linejoin="round" stroke-linecap="round"/>
<path d="M331.0 110.0 C337.0 112.8 358.2 120.7 367.0 127.0 C375.8 133.3 379.8 141.0 384.0 148.0 C388.2 155.0 390.7 165.5 392.0 169.0" stroke="#55cc55" stroke-width="4.3" fill="none" stroke-linejoin="round" stroke-linecap="round"/>
<path d="M331.0 110.0 C337.0 112.8 358.2 120.7 367.0 127.0 C375.8 133.3 379.8 141.0 384.0 148.0 C388.2 155.0 390.7 165.5 392.0 169.0" stroke="#f28a3a" stroke-width="4.3" fill="none" stroke-dasharray="0 15 12 25 12 200"/>
<path d="M331.0 110.0 C337.0 112.8 358.2 120.7 367.0 127.0 C375.8 133.3 379.8 141.0 384.0 148.0 C388.2 155.0 390.7 165.5 392.0 169.0" stroke="#fff" stroke-width="1.3" fill="none" stroke-linejoin="round" opacity="0.95"/>
<path d="M424.0 70.0 C420.8 73.8 413.2 85.7 405.0 93.0 C396.8 100.3 384.2 104.8 375.0 114.0 C365.8 123.2 355.7 138.8 350.0 148.0 C344.3 157.2 342.5 165.5 341.0 169.0" stroke="#fff" stroke-width="6.3" fill="none" stroke-linejoin="round" stroke-linecap="round"/>
<path d="M424.0 70.0 C420.8 73.8 413.2 85.7 405.0 93.0 C396.8 100.3 384.2 104.8 375.0 114.0 C365.8 123.2 355.7 138.8 350.0 148.0 C344.3 157.2 342.5 165.5 341.0 169.0" stroke="#55cc55" stroke-width="4.3" fill="none" stroke-linejoin="round" stroke-linecap="round"/>
<path d="M424.0 70.0 C420.8 73.8 413.2 85.7 405.0 93.0 C396.8 100.3 384.2 104.8 375.0 114.0 C365.8 123.2 355.7 138.8 350.0 148.0 C344.3 157.2 342.5 165.5 341.0 169.0" stroke="#f28a3a" stroke-width="4.3" fill="none" stroke-dasharray="0 12 20 30 20 200"/>
<path d="M424.0 70.0 C420.8 73.8 413.2 85.7 405.0 93.0 C396.8 100.3 384.2 104.8 375.0 114.0 C365.8 123.2 355.7 138.8 350.0 148.0 C344.3 157.2 342.5 165.5 341.0 169.0" stroke="#e21d1d" stroke-width="4.3" fill="none" stroke-dasharray="0 5 6 20 6 200"/>
<path d="M424.0 70.0 C420.8 73.8 413.2 85.7 405.0 93.0 C396.8 100.3 384.2 104.8 375.0 114.0 C365.8 123.2 355.7 138.8 350.0 148.0 C344.3 157.2 342.5 165.5 341.0 169.0" stroke="#861616" stroke-width="4.3" fill="none" stroke-dasharray="0 16 4 300"/>
<path d="M424.0 70.0 C420.8 73.8 413.2 85.7 405.0 93.0 C396.8 100.3 384.2 104.8 375.0 114.0 C365.8 123.2 355.7 138.8 350.0 148.0 C344.3 157.2 342.5 165.5 341.0 169.0" stroke="#fff" stroke-width="1.3" fill="none" stroke-linejoin="round" opacity="0.95"/>
<path d="M388.0 116.0 C394.3 120.7 415.5 136.6 426.0 144.0 C436.5 151.4 442.0 158.6 451.0 160.6 C460.0 162.6 475.2 156.8 480.0 156.0" stroke="#fff" stroke-width="6.3" fill="none" stroke-linejoin="round" stroke-linecap="round"/>
<path d="M388.0 116.0 C394.3 120.7 415.5 136.6 426.0 144.0 C436.5 151.4 442.0 158.6 451.0 160.6 C460.0 162.6 475.2 156.8 480.0 156.0" stroke="#55cc55" stroke-width="4.3" fill="none" stroke-linejoin="round" stroke-linecap="round"/>
<path d="M388.0 116.0 C394.3 120.7 415.5 136.6 426.0 144.0 C436.5 151.4 442.0 158.6 451.0 160.6 C460.0 162.6 475.2 156.8 480.0 156.0" stroke="#f28a3a" stroke-width="4.3" fill="none" stroke-dasharray="0 30 10 200"/>
<path d="M388.0 116.0 C394.3 120.7 415.5 136.6 426.0 144.0 C436.5 151.4 442.0 158.6 451.0 160.6 C460.0 162.6 475.2 156.8 480.0 156.0" stroke="#fff" stroke-width="1.3" fill="none" stroke-linejoin="round" opacity="0.95"/>
<path d="M367.0 10.5 C370.5 9.4 382.0 5.4 388.0 4.0 C394.0 2.6 399.8 -0.8 403.0 2.0 C406.2 4.8 408.2 12.5 407.0 21.0 C405.8 29.5 399.2 42.4 396.0 53.0 C392.8 63.6 391.2 75.0 388.0 84.5 C384.8 94.0 378.8 105.8 377.0 110.0" stroke="#fff" stroke-width="6.3" fill="none" stroke-linejoin="round" stroke-linecap="round"/>
<path d="M367.0 10.5 C370.5 9.4 382.0 5.4 388.0 4.0 C394.0 2.6 399.8 -0.8 403.0 2.0 C406.2 4.8 408.2 12.5 407.0 21.0 C405.8 29.5 399.2 42.4 396.0 53.0 C392.8 63.6 391.2 75.0 388.0 84.5 C384.8 94.0 378.8 105.8 377.0 110.0" stroke="#55cc55" stroke-width="4.3" fill="none" stroke-linejoin="round" stroke-linecap="round"/>
<path d="M367.0 10.5 C370.5 9.4 382.0 5.4 388.0 4.0 C394.0 2.6 399.8 -0.8 403.0 2.0 C406.2 4.8 408.2 12.5 407.0 21.0 C405.8 29.5 399.2 42.4 396.0 53.0 C392.8 63.6 391.2 75.0 388.0 84.5 C384.8 94.0 378.8 105.8 377.0 110.0" stroke="#e21d1d" stroke-width="4.3" fill="none" stroke-dasharray="0 0 30 12 20 300"/>
<path d="M367.0 10.5 C370.5 9.4 382.0 5.4 388.0 4.0 C394.0 2.6 399.8 -0.8 403.0 2.0 C406.2 4.8 408.2 12.5 407.0 21.0 C405.8 29.5 399.2 42.4 396.0 53.0 C392.8 63.6 391.2 75.0 388.0 84.5 C384.8 94.0 378.8 105.8 377.0 110.0" stroke="#f28a3a" stroke-width="4.3" fill="none" stroke-dasharray="0 60 10 15 8 300"/>
<path d="M367.0 10.5 C370.5 9.4 382.0 5.4 388.0 4.0 C394.0 2.6 399.8 -0.8 403.0 2.0 C406.2 4.8 408.2 12.5 407.0 21.0 C405.8 29.5 399.2 42.4 396.0 53.0 C392.8 63.6 391.2 75.0 388.0 84.5 C384.8 94.0 378.8 105.8 377.0 110.0" stroke="#fff" stroke-width="1.3" fill="none" stroke-linejoin="round" opacity="0.95"/>
<path d="M419.6 0.0 C421.3 1.8 429.3 3.5 430.0 10.5 C430.7 17.5 421.8 33.6 424.0 42.0 C426.2 50.4 438.5 55.3 443.0 61.0 C447.5 66.7 449.7 73.5 451.0 76.0" stroke="#fff" stroke-width="6.3" fill="none" stroke-linejoin="round" stroke-linecap="round"/>
<path d="M419.6 0.0 C421.3 1.8 429.3 3.5 430.0 10.5 C430.7 17.5 421.8 33.6 424.0 42.0 C426.2 50.4 438.5 55.3 443.0 61.0 C447.5 66.7 449.7 73.5 451.0 76.0" stroke="#55cc55" stroke-width="4.3" fill="none" stroke-linejoin="round" stroke-linecap="round"/>
<path d="M419.6 0.0 C421.3 1.8 429.3 3.5 430.0 10.5 C430.7 17.5 421.8 33.6 424.0 42.0 C426.2 50.4 438.5 55.3 443.0 61.0 C447.5 66.7 449.7 73.5 451.0 76.0" stroke="#fff" stroke-width="1.3" fill="none" stroke-linejoin="round" opacity="0.95"/>
<path d="M405.0 25.0 C408.5 25.4 419.0 28.2 426.0 27.5 C433.0 26.8 443.5 22.1 447.0 21.0" stroke="#fff" stroke-width="6.3" fill="none" stroke-linejoin="round" stroke-linecap="round"/>
<path d="M405.0 25.0 C408.5 25.4 419.0 28.2 426.0 27.5 C433.0 26.8 443.5 22.1 447.0 21.0" stroke="#55cc55" stroke-width="4.3" fill="none" stroke-linejoin="round" stroke-linecap="round"/>
<path d="M405.0 25.0 C408.5 25.4 419.0 28.2 426.0 27.5 C433.0 26.8 443.5 22.1 447.0 21.0" stroke="#e21d1d" stroke-width="4.3" fill="none" stroke-dasharray="0 10 14 100"/>
<path d="M405.0 25.0 C408.5 25.4 419.0 28.2 426.0 27.5 C433.0 26.8 443.5 22.1 447.0 21.0" stroke="#fff" stroke-width="1.3" fill="none" stroke-linejoin="round" opacity="0.95"/>
<path d="M354.0 38.0 C359.7 37.3 378.8 35.4 388.0 34.0 C397.2 32.6 405.5 30.3 409.0 29.6" stroke="#fff" stroke-width="6.3" fill="none" stroke-linejoin="round" stroke-linecap="round"/>
<path d="M354.0 38.0 C359.7 37.3 378.8 35.4 388.0 34.0 C397.2 32.6 405.5 30.3 409.0 29.6" stroke="#55cc55" stroke-width="4.3" fill="none" stroke-linejoin="round" stroke-linecap="round"/>
<path d="M354.0 38.0 C359.7 37.3 378.8 35.4 388.0 34.0 C397.2 32.6 405.5 30.3 409.0 29.6" stroke="#f28a3a" stroke-width="4.3" fill="none" stroke-dasharray="0 5 20 200"/>
<path d="M354.0 38.0 C359.7 37.3 378.8 35.4 388.0 34.0 C397.2 32.6 405.5 30.3 409.0 29.6" stroke="#fff" stroke-width="1.3" fill="none" stroke-linejoin="round" opacity="0.95"/>
<path d="M421.7 57.0 C416.1 57.0 398.6 57.7 388.0 57.0 C377.4 56.3 363.0 53.7 358.0 53.0" stroke="#fff" stroke-width="6.3" fill="none" stroke-linejoin="round" stroke-linecap="round"/>
<path d="M421.7 57.0 C416.1 57.0 398.6 57.7 388.0 57.0 C377.4 56.3 363.0 53.7 358.0 53.0" stroke="#55cc55" stroke-width="4.3" fill="none" stroke-linejoin="round" stroke-linecap="round"/>
<path d="M421.7 57.0 C416.1 57.0 398.6 57.7 388.0 57.0 C377.4 56.3 363.0 53.7 358.0 53.0" stroke="#f28a3a" stroke-width="4.3" fill="none" stroke-dasharray="0 10 10 200"/>
<path d="M421.7 57.0 C416.1 57.0 398.6 57.7 388.0 57.0 C377.4 56.3 363.0 53.7 358.0 53.0" stroke="#fff" stroke-width="1.3" fill="none" stroke-linejoin="round" opacity="0.95"/>
<path d="M451.0 42.0 L480.0 44.0" stroke="#fff" stroke-width="6.3" fill="none" stroke-linejoin="round" stroke-linecap="round"/>
<path d="M451.0 42.0 L480.0 44.0" stroke="#55cc55" stroke-width="4.3" fill="none" stroke-linejoin="round" stroke-linecap="round"/>
<path d="M451.0 42.0 L480.0 44.0" stroke="#fff" stroke-width="1.3" fill="none" stroke-linejoin="round" opacity="0.95"/>
<path d="M360.0 2.0 C362.5 2.5 370.0 5.3 375.0 5.0 C380.0 4.7 387.5 0.8 390.0 0.0" stroke="#fff" stroke-width="6.3" fill="none" stroke-linejoin="round" stroke-linecap="round"/>
<path d="M360.0 2.0 C362.5 2.5 370.0 5.3 375.0 5.0 C380.0 4.7 387.5 0.8 390.0 0.0" stroke="#55cc55" stroke-width="4.3" fill="none" stroke-linejoin="round" stroke-linecap="round"/>
<path d="M360.0 2.0 C362.5 2.5 370.0 5.3 375.0 5.0 C380.0 4.7 387.5 0.8 390.0 0.0" stroke="#e21d1d" stroke-width="4.3" fill="none" stroke-dasharray="0 0 30 100"/>
<path d="M360.0 2.0 C362.5 2.5 370.0 5.3 375.0 5.0 C380.0 4.7 387.5 0.8 390.0 0.0" stroke="#fff" stroke-width="1.3" fill="none" stroke-linejoin="round" opacity="0.95"/>
<path d="M320.0 10.0 C322.7 15.0 334.3 31.7 336.0 40.0 C337.7 48.3 331.0 56.7 330.0 60.0" stroke="#fff" stroke-width="5.9" fill="none" stroke-linejoin="round" stroke-linecap="round"/>
<path d="M320.0 10.0 C322.7 15.0 334.3 31.7 336.0 40.0 C337.7 48.3 331.0 56.7 330.0 60.0" stroke="#55cc55" stroke-width="3.9000000000000004" fill="none" stroke-linejoin="round" stroke-linecap="round"/>
<path d="M320.0 10.0 C322.7 15.0 334.3 31.7 336.0 40.0 C337.7 48.3 331.0 56.7 330.0 60.0" stroke="#fff" stroke-width="1.3" fill="none" stroke-linejoin="round" opacity="0.95"/>
<path d="M480.0 2.0 C482.1 5.5 490.2 17.7 492.7 23.0 C495.2 28.3 495.5 30.8 494.8 34.0 C494.1 37.2 490.0 37.2 488.5 42.0 C487.0 46.8 487.1 52.3 486.0 63.0 C484.9 73.7 483.0 95.3 482.0 106.0 C481.0 116.7 480.7 116.5 480.0 127.0 C479.3 137.5 478.3 162.0 478.0 169.0" stroke="#fff" stroke-width="6.3" fill="none" stroke-linejoin="round" stroke-linecap="round"/>
<path d="M480.0 2.0 C482.1 5.5 490.2 17.7 492.7 23.0 C495.2 28.3 495.5 30.8 494.8 34.0 C494.1 37.2 490.0 37.2 488.5 42.0 C487.0 46.8 487.1 52.3 486.0 63.0 C484.9 73.7 483.0 95.3 482.0 106.0 C481.0 116.7 480.7 116.5 480.0 127.0 C479.3 137.5 478.3 162.0 478.0 169.0" stroke="#55cc55" stroke-width="4.3" fill="none" stroke-linejoin="round" stroke-linecap="round"/>
<path d="M480.0 2.0 C482.1 5.5 490.2 17.7 492.7 23.0 C495.2 28.3 495.5 30.8 494.8 34.0 C494.1 37.2 490.0 37.2 488.5 42.0 C487.0 46.8 487.1 52.3 486.0 63.0 C484.9 73.7 483.0 95.3 482.0 106.0 C481.0 116.7 480.7 116.5 480.0 127.0 C479.3 137.5 478.3 162.0 478.0 169.0" stroke="#f28a3a" stroke-width="4.3" fill="none" stroke-dasharray="0 80 8 300"/>
<path d="M480.0 2.0 C482.1 5.5 490.2 17.7 492.7 23.0 C495.2 28.3 495.5 30.8 494.8 34.0 C494.1 37.2 490.0 37.2 488.5 42.0 C487.0 46.8 487.1 52.3 486.0 63.0 C484.9 73.7 483.0 95.3 482.0 106.0 C481.0 116.7 480.7 116.5 480.0 127.0 C479.3 137.5 478.3 162.0 478.0 169.0" stroke="#fff" stroke-width="1.3" fill="none" stroke-linejoin="round" opacity="0.95"/>
<path d="M554.0 0.0 C551.5 2.5 543.2 9.7 539.0 15.0 C534.8 20.3 531.4 25.4 528.6 31.7 C525.8 38.0 524.4 46.6 522.0 53.0 C519.6 59.4 516.1 64.0 514.0 70.0 C511.9 76.0 510.7 79.5 509.6 89.0 C508.5 98.5 508.3 113.7 507.5 127.0 C506.7 140.3 505.4 162.0 505.0 169.0" stroke="#fff" stroke-width="6.3" fill="none" stroke-linejoin="round" stroke-linecap="round"/>
<path d="M554.0 0.0 C551.5 2.5 543.2 9.7 539.0 15.0 C534.8 20.3 531.4 25.4 528.6 31.7 C525.8 38.0 524.4 46.6 522.0 53.0 C519.6 59.4 516.1 64.0 514.0 70.0 C511.9 76.0 510.7 79.5 509.6 89.0 C508.5 98.5 508.3 113.7 507.5 127.0 C506.7 140.3 505.4 162.0 505.0 169.0" stroke="#55cc55" stroke-width="4.3" fill="none" stroke-linejoin="round" stroke-linecap="round"/>
<path d="M554.0 0.0 C551.5 2.5 543.2 9.7 539.0 15.0 C534.8 20.3 531.4 25.4 528.6 31.7 C525.8 38.0 524.4 46.6 522.0 53.0 C519.6 59.4 516.1 64.0 514.0 70.0 C511.9 76.0 510.7 79.5 509.6 89.0 C508.5 98.5 508.3 113.7 507.5 127.0 C506.7 140.3 505.4 162.0 505.0 169.0" stroke="#f28a3a" stroke-width="4.3" fill="none" stroke-dasharray="0 0 10 30 25 60 6 300"/>
<path d="M554.0 0.0 C551.5 2.5 543.2 9.7 539.0 15.0 C534.8 20.3 531.4 25.4 528.6 31.7 C525.8 38.0 524.4 46.6 522.0 53.0 C519.6 59.4 516.1 64.0 514.0 70.0 C511.9 76.0 510.7 79.5 509.6 89.0 C508.5 98.5 508.3 113.7 507.5 127.0 C506.7 140.3 505.4 162.0 505.0 169.0" stroke="#e21d1d" stroke-width="4.3" fill="none" stroke-dasharray="0 60 12 300"/>
<path d="M554.0 0.0 C551.5 2.5 543.2 9.7 539.0 15.0 C534.8 20.3 531.4 25.4 528.6 31.7 C525.8 38.0 524.4 46.6 522.0 53.0 C519.6 59.4 516.1 64.0 514.0 70.0 C511.9 76.0 510.7 79.5 509.6 89.0 C508.5 98.5 508.3 113.7 507.5 127.0 C506.7 140.3 505.4 162.0 505.0 169.0" stroke="#fff" stroke-width="1.3" fill="none" stroke-linejoin="round" opacity="0.95"/>
<path d="M577.0 0.0 C577.7 2.1 579.6 7.4 581.0 12.7 C582.4 18.0 584.5 24.3 585.6 31.7 C586.7 39.1 588.9 50.6 587.8 57.0 C586.7 63.4 582.9 65.4 579.0 70.0 C575.1 74.6 568.0 79.3 564.5 84.5 C561.0 89.7 560.5 95.4 558.0 101.4 C555.5 107.4 553.9 114.8 549.7 120.4 C545.5 126.0 544.4 131.8 532.8 135.0 C521.2 138.2 488.8 138.7 480.0 139.4" stroke="#fff" stroke-width="6.3" fill="none" stroke-linejoin="round" stroke-linecap="round"/>
<path d="M577.0 0.0 C577.7 2.1 579.6 7.4 581.0 12.7 C582.4 18.0 584.5 24.3 585.6 31.7 C586.7 39.1 588.9 50.6 587.8 57.0 C586.7 63.4 582.9 65.4 579.0 70.0 C575.1 74.6 568.0 79.3 564.5 84.5 C561.0 89.7 560.5 95.4 558.0 101.4 C555.5 107.4 553.9 114.8 549.7 120.4 C545.5 126.0 544.4 131.8 532.8 135.0 C521.2 138.2 488.8 138.7 480.0 139.4" stroke="#55cc55" stroke-width="4.3" fill="none" stroke-linejoin="round" stroke-linecap="round"/>
<path d="M577.0 0.0 C577.7 2.1 579.6 7.4 581.0 12.7 C582.4 18.0 584.5 24.3 585.6 31.7 C586.7 39.1 588.9 50.6 587.8 57.0 C586.7 63.4 582.9 65.4 579.0 70.0 C575.1 74.6 568.0 79.3 564.5 84.5 C561.0 89.7 560.5 95.4 558.0 101.4 C555.5 107.4 553.9 114.8 549.7 120.4 C545.5 126.0 544.4 131.8 532.8 135.0 C521.2 138.2 488.8 138.7 480.0 139.4" stroke="#e21d1d" stroke-width="4.3" fill="none" stroke-dasharray="0 0 20 20 18 20 8 300"/>
<path d="M577.0 0.0 C577.7 2.1 579.6 7.4 581.0 12.7 C582.4 18.0 584.5 24.3 585.6 31.7 C586.7 39.1 588.9 50.6 587.8 57.0 C586.7 63.4 582.9 65.4 579.0 70.0 C575.1 74.6 568.0 79.3 564.5 84.5 C561.0 89.7 560.5 95.4 558.0 101.4 C555.5 107.4 553.9 114.8 549.7 120.4 C545.5 126.0 544.4 131.8 532.8 135.0 C521.2 138.2 488.8 138.7 480.0 139.4" stroke="#f28a3a" stroke-width="4.3" fill="none" stroke-dasharray="0 100 25 30 30 300"/>
<path d="M577.0 0.0 C577.7 2.1 579.6 7.4 581.0 12.7 C582.4 18.0 584.5 24.3 585.6 31.7 C586.7 39.1 588.9 50.6 587.8 57.0 C586.7 63.4 582.9 65.4 579.0 70.0 C575.1 74.6 568.0 79.3 564.5 84.5 C561.0 89.7 560.5 95.4 558.0 101.4 C555.5 107.4 553.9 114.8 549.7 120.4 C545.5 126.0 544.4 131.8 532.8 135.0 C521.2 138.2 488.8 138.7 480.0 139.4" stroke="#fff" stroke-width="1.3" fill="none" stroke-linejoin="round" opacity="0.95"/>
<path d="M587.8 27.5 C591.0 27.5 600.8 25.1 606.8 27.5 C612.8 29.9 618.8 36.1 623.7 42.0 C628.6 47.9 629.0 56.7 636.0 63.0 C643.0 69.3 658.2 75.0 666.0 80.0 C673.8 85.0 677.0 93.3 683.0 93.0 C689.0 92.7 697.2 79.4 702.0 78.0 C706.8 76.6 709.0 79.9 712.0 84.5 C715.0 89.1 718.2 99.7 720.0 105.6 C721.8 111.5 722.5 117.6 723.0 120.0" stroke="#fff" stroke-width="6.3" fill="none" stroke-linejoin="round" stroke-linecap="round"/>
<path d="M587.8 27.5 C591.0 27.5 600.8 25.1 606.8 27.5 C612.8 29.9 618.8 36.1 623.7 42.0 C628.6 47.9 629.0 56.7 636.0 63.0 C643.0 69.3 658.2 75.0 666.0 80.0 C673.8 85.0 677.0 93.3 683.0 93.0 C689.0 92.7 697.2 79.4 702.0 78.0 C706.8 76.6 709.0 79.9 712.0 84.5 C715.0 89.1 718.2 99.7 720.0 105.6 C721.8 111.5 722.5 117.6 723.0 120.0" stroke="#55cc55" stroke-width="4.3" fill="none" stroke-linejoin="round" stroke-linecap="round"/>
<path d="M587.8 27.5 C591.0 27.5 600.8 25.1 606.8 27.5 C612.8 29.9 618.8 36.1 623.7 42.0 C628.6 47.9 629.0 56.7 636.0 63.0 C643.0 69.3 658.2 75.0 666.0 80.0 C673.8 85.0 677.0 93.3 683.0 93.0 C689.0 92.7 697.2 79.4 702.0 78.0 C706.8 76.6 709.0 79.9 712.0 84.5 C715.0 89.1 718.2 99.7 720.0 105.6 C721.8 111.5 722.5 117.6 723.0 120.0" stroke="#f28a3a" stroke-width="4.3" fill="none" stroke-dasharray="0 40 12 60 10 300"/>
<path d="M587.8 27.5 C591.0 27.5 600.8 25.1 606.8 27.5 C612.8 29.9 618.8 36.1 623.7 42.0 C628.6 47.9 629.0 56.7 636.0 63.0 C643.0 69.3 658.2 75.0 666.0 80.0 C673.8 85.0 677.0 93.3 683.0 93.0 C689.0 92.7 697.2 79.4 702.0 78.0 C706.8 76.6 709.0 79.9 712.0 84.5 C715.0 89.1 718.2 99.7 720.0 105.6 C721.8 111.5 722.5 117.6 723.0 120.0" stroke="#e21d1d" stroke-width="4.3" fill="none" stroke-dasharray="0 150 6 300"/>
<path d="M587.8 27.5 C591.0 27.5 600.8 25.1 606.8 27.5 C612.8 29.9 618.8 36.1 623.7 42.0 C628.6 47.9 629.0 56.7 636.0 63.0 C643.0 69.3 658.2 75.0 666.0 80.0 C673.8 85.0 677.0 93.3 683.0 93.0 C689.0 92.7 697.2 79.4 702.0 78.0 C706.8 76.6 709.0 79.9 712.0 84.5 C715.0 89.1 718.2 99.7 720.0 105.6 C721.8 111.5 722.5 117.6 723.0 120.0" stroke="#fff" stroke-width="1.3" fill="none" stroke-linejoin="round" opacity="0.95"/>
<path d="M587.8 25.0 C591.0 24.0 597.3 20.7 606.8 19.0 C616.3 17.3 634.3 15.9 644.8 14.8 C655.3 13.8 660.5 12.0 670.0 12.7 C679.5 13.4 693.7 15.5 702.0 19.0 C710.3 22.5 713.5 27.5 720.0 33.8 C726.5 40.1 734.0 51.7 741.0 57.0 C748.0 62.3 752.2 63.0 762.0 65.5 C771.8 68.0 793.7 70.8 800.0 71.8" stroke="#fff" stroke-width="6.3" fill="none" stroke-linejoin="round" stroke-linecap="round"/>
<path d="M587.8 25.0 C591.0 24.0 597.3 20.7 606.8 19.0 C616.3 17.3 634.3 15.9 644.8 14.8 C655.3 13.8 660.5 12.0 670.0 12.7 C679.5 13.4 693.7 15.5 702.0 19.0 C710.3 22.5 713.5 27.5 720.0 33.8 C726.5 40.1 734.0 51.7 741.0 57.0 C748.0 62.3 752.2 63.0 762.0 65.5 C771.8 68.0 793.7 70.8 800.0 71.8" stroke="#55cc55" stroke-width="4.3" fill="none" stroke-linejoin="round" stroke-linecap="round"/>
<path d="M587.8 25.0 C591.0 24.0 597.3 20.7 606.8 19.0 C616.3 17.3 634.3 15.9 644.8 14.8 C655.3 13.8 660.5 12.0 670.0 12.7 C679.5 13.4 693.7 15.5 702.0 19.0 C710.3 22.5 713.5 27.5 720.0 33.8 C726.5 40.1 734.0 51.7 741.0 57.0 C748.0 62.3 752.2 63.0 762.0 65.5 C771.8 68.0 793.7 70.8 800.0 71.8" stroke="#f28a3a" stroke-width="4.3" fill="none" stroke-dasharray="0 15 22 25 25 50 20 300"/>
<path d="M587.8 25.0 C591.0 24.0 597.3 20.7 606.8 19.0 C616.3 17.3 634.3 15.9 644.8 14.8 C655.3 13.8 660.5 12.0 670.0 12.7 C679.5 13.4 693.7 15.5 702.0 19.0 C710.3 22.5 713.5 27.5 720.0 33.8 C726.5 40.1 734.0 51.7 741.0 57.0 C748.0 62.3 752.2 63.0 762.0 65.5 C771.8 68.0 793.7 70.8 800.0 71.8" stroke="#e21d1d" stroke-width="4.3" fill="none" stroke-dasharray="0 150 12 30 8 300"/>
<path d="M587.8 25.0 C591.0 24.0 597.3 20.7 606.8 19.0 C616.3 17.3 634.3 15.9 644.8 14.8 C655.3 13.8 660.5 12.0 670.0 12.7 C679.5 13.4 693.7 15.5 702.0 19.0 C710.3 22.5 713.5 27.5 720.0 33.8 C726.5 40.1 734.0 51.7 741.0 57.0 C748.0 62.3 752.2 63.0 762.0 65.5 C771.8 68.0 793.7 70.8 800.0 71.8" stroke="#fff" stroke-width="1.3" fill="none" stroke-linejoin="round" opacity="0.95"/>
<path d="M585.6 67.6 C587.7 69.7 590.9 76.1 598.0 80.0 C605.1 83.9 622.3 86.7 628.0 91.0 C633.7 95.3 632.4 99.6 632.0 105.6 C631.6 111.6 627.2 119.7 625.8 126.8 C624.4 133.9 625.2 141.0 623.7 148.0 C622.2 155.0 618.1 165.5 617.0 169.0" stroke="#fff" stroke-width="6.3" fill="none" stroke-linejoin="round" stroke-linecap="round"/>
<path d="M585.6 67.6 C587.7 69.7 590.9 76.1 598.0 80.0 C605.1 83.9 622.3 86.7 628.0 91.0 C633.7 95.3 632.4 99.6 632.0 105.6 C631.6 111.6 627.2 119.7 625.8 126.8 C624.4 133.9 625.2 141.0 623.7 148.0 C622.2 155.0 618.1 165.5 617.0 169.0" stroke="#55cc55" stroke-width="4.3" fill="none" stroke-linejoin="round" stroke-linecap="round"/>
<path d="M585.6 67.6 C587.7 69.7 590.9 76.1 598.0 80.0 C605.1 83.9 622.3 86.7 628.0 91.0 C633.7 95.3 632.4 99.6 632.0 105.6 C631.6 111.6 627.2 119.7 625.8 126.8 C624.4 133.9 625.2 141.0 623.7 148.0 C622.2 155.0 618.1 165.5 617.0 169.0" stroke="#f28a3a" stroke-width="4.3" fill="none" stroke-dasharray="0 35 8 50 8 300"/>
<path d="M585.6 67.6 C587.7 69.7 590.9 76.1 598.0 80.0 C605.1 83.9 622.3 86.7 628.0 91.0 C633.7 95.3 632.4 99.6 632.0 105.6 C631.6 111.6 627.2 119.7 625.8 126.8 C624.4 133.9 625.2 141.0 623.7 148.0 C622.2 155.0 618.1 165.5 617.0 169.0" stroke="#fff" stroke-width="1.3" fill="none" stroke-linejoin="round" opacity="0.95"/>
<path d="M632.0 63.0 L630.0 105.6" stroke="#fff" stroke-width="6.3" fill="none" stroke-linejoin="round" stroke-linecap="round"/>
<path d="M632.0 63.0 L630.0 105.6" stroke="#55cc55" stroke-width="4.3" fill="none" stroke-linejoin="round" stroke-linecap="round"/>
<path d="M632.0 63.0 L630.0 105.6" stroke="#fff" stroke-width="1.3" fill="none" stroke-linejoin="round" opacity="0.95"/>
<path d="M630.0 101.4 C640.2 101.8 677.3 97.9 691.0 103.5 C704.7 109.1 707.2 126.9 712.0 135.0 C716.8 143.1 718.0 146.3 720.0 152.0 C722.0 157.7 723.3 166.2 724.0 169.0" stroke="#fff" stroke-width="6.3" fill="none" stroke-linejoin="round" stroke-linecap="round"/>
<path d="M630.0 101.4 C640.2 101.8 677.3 97.9 691.0 103.5 C704.7 109.1 707.2 126.9 712.0 135.0 C716.8 143.1 718.0 146.3 720.0 152.0 C722.0 157.7 723.3 166.2 724.0 169.0" stroke="#55cc55" stroke-width="4.3" fill="none" stroke-linejoin="round" stroke-linecap="round"/>
<path d="M630.0 101.4 C640.2 101.8 677.3 97.9 691.0 103.5 C704.7 109.1 707.2 126.9 712.0 135.0 C716.8 143.1 718.0 146.3 720.0 152.0 C722.0 157.7 723.3 166.2 724.0 169.0" stroke="#f28a3a" stroke-width="4.3" fill="none" stroke-dasharray="0 20 40 30 10 300"/>
<path d="M630.0 101.4 C640.2 101.8 677.3 97.9 691.0 103.5 C704.7 109.1 707.2 126.9 712.0 135.0 C716.8 143.1 718.0 146.3 720.0 152.0 C722.0 157.7 723.3 166.2 724.0 169.0" stroke="#fff" stroke-width="1.3" fill="none" stroke-linejoin="round" opacity="0.95"/>
<path d="M577.0 74.0 C576.7 79.3 574.7 96.8 575.0 105.6 C575.3 114.4 576.2 119.9 579.0 127.0 C581.8 134.1 587.7 141.0 592.0 148.0 C596.3 155.0 602.6 165.5 604.7 169.0" stroke="#fff" stroke-width="6.5" fill="none" stroke-linejoin="round" stroke-linecap="round"/>
<path d="M577.0 74.0 C576.7 79.3 574.7 96.8 575.0 105.6 C575.3 114.4 576.2 119.9 579.0 127.0 C581.8 134.1 587.7 141.0 592.0 148.0 C596.3 155.0 602.6 165.5 604.7 169.0" stroke="#55cc55" stroke-width="4.5" fill="none" stroke-linejoin="round" stroke-linecap="round"/>
<path d="M577.0 74.0 C576.7 79.3 574.7 96.8 575.0 105.6 C575.3 114.4 576.2 119.9 579.0 127.0 C581.8 134.1 587.7 141.0 592.0 148.0 C596.3 155.0 602.6 165.5 604.7 169.0" stroke="#fff" stroke-width="1.3" fill="none" stroke-linejoin="round" opacity="0.95"/>
<path d="M541.0 67.6 C541.4 69.3 544.4 73.4 543.4 78.0 C542.4 82.6 537.5 88.7 535.0 95.0 C532.5 101.3 529.3 110.0 528.6 116.0 C527.9 122.0 529.0 125.7 530.7 131.0 C532.4 136.3 536.5 141.7 539.0 148.0 C541.5 154.3 544.4 165.5 545.5 169.0" stroke="#fff" stroke-width="6.3" fill="none" stroke-linejoin="round" stroke-linecap="round"/>
<path d="M541.0 67.6 C541.4 69.3 544.4 73.4 543.4 78.0 C542.4 82.6 537.5 88.7 535.0 95.0 C532.5 101.3 529.3 110.0 528.6 116.0 C527.9 122.0 529.0 125.7 530.7 131.0 C532.4 136.3 536.5 141.7 539.0 148.0 C541.5 154.3 544.4 165.5 545.5 169.0" stroke="#f28a3a" stroke-width="4.3" fill="none" stroke-linejoin="round" stroke-linecap="round"/>
<path d="M541.0 67.6 C541.4 69.3 544.4 73.4 543.4 78.0 C542.4 82.6 537.5 88.7 535.0 95.0 C532.5 101.3 529.3 110.0 528.6 116.0 C527.9 122.0 529.0 125.7 530.7 131.0 C532.4 136.3 536.5 141.7 539.0 148.0 C541.5 154.3 544.4 165.5 545.5 169.0" stroke="#55cc55" stroke-width="4.3" fill="none" stroke-dasharray="0 40 10 300"/>
<path d="M541.0 67.6 C541.4 69.3 544.4 73.4 543.4 78.0 C542.4 82.6 537.5 88.7 535.0 95.0 C532.5 101.3 529.3 110.0 528.6 116.0 C527.9 122.0 529.0 125.7 530.7 131.0 C532.4 136.3 536.5 141.7 539.0 148.0 C541.5 154.3 544.4 165.5 545.5 169.0" stroke="#fff" stroke-width="1.3" fill="none" stroke-linejoin="round" opacity="0.95"/>
<path d="M704.0 0.0 C706.7 0.7 713.8 0.5 720.0 4.0 C726.2 7.5 736.4 15.3 741.0 21.0 C745.6 26.7 744.0 33.4 747.5 38.0 C751.0 42.6 756.1 45.4 762.0 48.6 C767.9 51.8 777.3 54.5 783.0 57.0 C788.7 59.5 792.4 60.6 796.0 63.4 C799.6 66.2 801.3 69.8 804.5 74.0 C807.7 78.2 812.2 84.5 815.0 88.7 C817.8 92.9 817.2 97.6 821.0 99.0 C824.8 100.4 831.7 98.7 838.0 97.0 C844.3 95.3 854.0 89.0 859.0 88.7 C864.0 88.4 863.7 94.0 868.0 95.0 C872.3 96.0 882.2 95.0 885.0 95.0" stroke="#fff" stroke-width="6.3" fill="none" stroke-linejoin="round" stroke-linecap="round"/>
<path d="M704.0 0.0 C706.7 0.7 713.8 0.5 720.0 4.0 C726.2 7.5 736.4 15.3 741.0 21.0 C745.6 26.7 744.0 33.4 747.5 38.0 C751.0 42.6 756.1 45.4 762.0 48.6 C767.9 51.8 777.3 54.5 783.0 57.0 C788.7 59.5 792.4 60.6 796.0 63.4 C799.6 66.2 801.3 69.8 804.5 74.0 C807.7 78.2 812.2 84.5 815.0 88.7 C817.8 92.9 817.2 97.6 821.0 99.0 C824.8 100.4 831.7 98.7 838.0 97.0 C844.3 95.3 854.0 89.0 859.0 88.7 C864.0 88.4 863.7 94.0 868.0 95.0 C872.3 96.0 882.2 95.0 885.0 95.0" stroke="#55cc55" stroke-width="4.3" fill="none" stroke-linejoin="round" stroke-linecap="round"/>
<path d="M704.0 0.0 C706.7 0.7 713.8 0.5 720.0 4.0 C726.2 7.5 736.4 15.3 741.0 21.0 C745.6 26.7 744.0 33.4 747.5 38.0 C751.0 42.6 756.1 45.4 762.0 48.6 C767.9 51.8 777.3 54.5 783.0 57.0 C788.7 59.5 792.4 60.6 796.0 63.4 C799.6 66.2 801.3 69.8 804.5 74.0 C807.7 78.2 812.2 84.5 815.0 88.7 C817.8 92.9 817.2 97.6 821.0 99.0 C824.8 100.4 831.7 98.7 838.0 97.0 C844.3 95.3 854.0 89.0 859.0 88.7 C864.0 88.4 863.7 94.0 868.0 95.0 C872.3 96.0 882.2 95.0 885.0 95.0" stroke="#f28a3a" stroke-width="4.3" fill="none" stroke-dasharray="0 20 8 80 10 60 6 300"/>
<path d="M704.0 0.0 C706.7 0.7 713.8 0.5 720.0 4.0 C726.2 7.5 736.4 15.3 741.0 21.0 C745.6 26.7 744.0 33.4 747.5 38.0 C751.0 42.6 756.1 45.4 762.0 48.6 C767.9 51.8 777.3 54.5 783.0 57.0 C788.7 59.5 792.4 60.6 796.0 63.4 C799.6 66.2 801.3 69.8 804.5 74.0 C807.7 78.2 812.2 84.5 815.0 88.7 C817.8 92.9 817.2 97.6 821.0 99.0 C824.8 100.4 831.7 98.7 838.0 97.0 C844.3 95.3 854.0 89.0 859.0 88.7 C864.0 88.4 863.7 94.0 868.0 95.0 C872.3 96.0 882.2 95.0 885.0 95.0" stroke="#e21d1d" stroke-width="4.3" fill="none" stroke-dasharray="0 175 8 300"/>
<path d="M704.0 0.0 C706.7 0.7 713.8 0.5 720.0 4.0 C726.2 7.5 736.4 15.3 741.0 21.0 C745.6 26.7 744.0 33.4 747.5 38.0 C751.0 42.6 756.1 45.4 762.0 48.6 C767.9 51.8 777.3 54.5 783.0 57.0 C788.7 59.5 792.4 60.6 796.0 63.4 C799.6 66.2 801.3 69.8 804.5 74.0 C807.7 78.2 812.2 84.5 815.0 88.7 C817.8 92.9 817.2 97.6 821.0 99.0 C824.8 100.4 831.7 98.7 838.0 97.0 C844.3 95.3 854.0 89.0 859.0 88.7 C864.0 88.4 863.7 94.0 868.0 95.0 C872.3 96.0 882.2 95.0 885.0 95.0" stroke="#fff" stroke-width="1.3" fill="none" stroke-linejoin="round" opacity="0.95"/>
<path d="M773.0 71.8 C771.5 74.6 764.0 83.4 764.0 88.7 C764.0 94.0 768.7 98.6 773.0 103.5 C777.3 108.4 784.0 113.1 790.0 118.0 C796.0 122.9 801.0 131.2 809.0 133.0 C817.0 134.8 828.2 130.4 838.0 129.0 C847.8 127.6 860.9 127.2 868.0 124.7 C875.1 122.2 877.4 119.0 880.6 114.0 C883.8 109.0 885.9 98.2 887.0 95.0" stroke="#fff" stroke-width="6.3" fill="none" stroke-linejoin="round" stroke-linecap="round"/>
<path d="M773.0 71.8 C771.5 74.6 764.0 83.4 764.0 88.7 C764.0 94.0 768.7 98.6 773.0 103.5 C777.3 108.4 784.0 113.1 790.0 118.0 C796.0 122.9 801.0 131.2 809.0 133.0 C817.0 134.8 828.2 130.4 838.0 129.0 C847.8 127.6 860.9 127.2 868.0 124.7 C875.1 122.2 877.4 119.0 880.6 114.0 C883.8 109.0 885.9 98.2 887.0 95.0" stroke="#55cc55" stroke-width="4.3" fill="none" stroke-linejoin="round" stroke-linecap="round"/>
<path d="M773.0 71.8 C771.5 74.6 764.0 83.4 764.0 88.7 C764.0 94.0 768.7 98.6 773.0 103.5 C777.3 108.4 784.0 113.1 790.0 118.0 C796.0 122.9 801.0 131.2 809.0 133.0 C817.0 134.8 828.2 130.4 838.0 129.0 C847.8 127.6 860.9 127.2 868.0 124.7 C875.1 122.2 877.4 119.0 880.6 114.0 C883.8 109.0 885.9 98.2 887.0 95.0" stroke="#f28a3a" stroke-width="4.3" fill="none" stroke-dasharray="0 0 8 40 30 20 10 300"/>
<path d="M773.0 71.8 C771.5 74.6 764.0 83.4 764.0 88.7 C764.0 94.0 768.7 98.6 773.0 103.5 C777.3 108.4 784.0 113.1 790.0 118.0 C796.0 122.9 801.0 131.2 809.0 133.0 C817.0 134.8 828.2 130.4 838.0 129.0 C847.8 127.6 860.9 127.2 868.0 124.7 C875.1 122.2 877.4 119.0 880.6 114.0 C883.8 109.0 885.9 98.2 887.0 95.0" stroke="#fff" stroke-width="1.3" fill="none" stroke-linejoin="round" opacity="0.95"/>
<path d="M817.0 0.0 C821.6 2.8 838.0 8.5 844.7 17.0 C851.4 25.5 852.5 41.2 857.0 50.7 C861.5 60.2 867.0 67.0 872.0 74.0 C877.0 81.0 882.0 87.4 887.0 93.0 C892.0 98.6 897.9 102.9 901.7 107.8 C905.5 112.7 907.2 118.6 910.0 122.5 C912.8 126.4 916.5 131.8 918.6 131.0 C920.7 130.2 920.7 120.8 922.8 118.0 C924.9 115.2 929.6 114.7 931.0 114.0" stroke="#fff" stroke-width="6.3" fill="none" stroke-linejoin="round" stroke-linecap="round"/>
<path d="M817.0 0.0 C821.6 2.8 838.0 8.5 844.7 17.0 C851.4 25.5 852.5 41.2 857.0 50.7 C861.5 60.2 867.0 67.0 872.0 74.0 C877.0 81.0 882.0 87.4 887.0 93.0 C892.0 98.6 897.9 102.9 901.7 107.8 C905.5 112.7 907.2 118.6 910.0 122.5 C912.8 126.4 916.5 131.8 918.6 131.0 C920.7 130.2 920.7 120.8 922.8 118.0 C924.9 115.2 929.6 114.7 931.0 114.0" stroke="#55cc55" stroke-width="4.3" fill="none" stroke-linejoin="round" stroke-linecap="round"/>
<path d="M817.0 0.0 C821.6 2.8 838.0 8.5 844.7 17.0 C851.4 25.5 852.5 41.2 857.0 50.7 C861.5 60.2 867.0 67.0 872.0 74.0 C877.0 81.0 882.0 87.4 887.0 93.0 C892.0 98.6 897.9 102.9 901.7 107.8 C905.5 112.7 907.2 118.6 910.0 122.5 C912.8 126.4 916.5 131.8 918.6 131.0 C920.7 130.2 920.7 120.8 922.8 118.0 C924.9 115.2 929.6 114.7 931.0 114.0" stroke="#f28a3a" stroke-width="4.3" fill="none" stroke-dasharray="0 35 20 30 10 300"/>
<path d="M817.0 0.0 C821.6 2.8 838.0 8.5 844.7 17.0 C851.4 25.5 852.5 41.2 857.0 50.7 C861.5 60.2 867.0 67.0 872.0 74.0 C877.0 81.0 882.0 87.4 887.0 93.0 C892.0 98.6 897.9 102.9 901.7 107.8 C905.5 112.7 907.2 118.6 910.0 122.5 C912.8 126.4 916.5 131.8 918.6 131.0 C920.7 130.2 920.7 120.8 922.8 118.0 C924.9 115.2 929.6 114.7 931.0 114.0" stroke="#e21d1d" stroke-width="4.3" fill="none" stroke-dasharray="0 62 6 60 8 300"/>
<path d="M817.0 0.0 C821.6 2.8 838.0 8.5 844.7 17.0 C851.4 25.5 852.5 41.2 857.0 50.7 C861.5 60.2 867.0 67.0 872.0 74.0 C877.0 81.0 882.0 87.4 887.0 93.0 C892.0 98.6 897.9 102.9 901.7 107.8 C905.5 112.7 907.2 118.6 910.0 122.5 C912.8 126.4 916.5 131.8 918.6 131.0 C920.7 130.2 920.7 120.8 922.8 118.0 C924.9 115.2 929.6 114.7 931.0 114.0" stroke="#fff" stroke-width="1.3" fill="none" stroke-linejoin="round" opacity="0.95"/>
<path d="M844.7 17.0 C849.2 18.8 861.8 23.3 872.0 27.5 C882.2 31.7 899.7 38.1 906.0 42.0 C912.3 45.9 910.0 48.2 910.0 50.7 C910.0 53.2 902.5 56.6 906.0 57.0 C909.5 57.4 921.3 54.2 931.0 52.8 C940.7 51.4 958.5 49.3 964.0 48.6" stroke="#fff" stroke-width="6.3" fill="none" stroke-linejoin="round" stroke-linecap="round"/>
<path d="M844.7 17.0 C849.2 18.8 861.8 23.3 872.0 27.5 C882.2 31.7 899.7 38.1 906.0 42.0 C912.3 45.9 910.0 48.2 910.0 50.7 C910.0 53.2 902.5 56.6 906.0 57.0 C909.5 57.4 921.3 54.2 931.0 52.8 C940.7 51.4 958.5 49.3 964.0 48.6" stroke="#55cc55" stroke-width="4.3" fill="none" stroke-linejoin="round" stroke-linecap="round"/>
<path d="M844.7 17.0 C849.2 18.8 861.8 23.3 872.0 27.5 C882.2 31.7 899.7 38.1 906.0 42.0 C912.3 45.9 910.0 48.2 910.0 50.7 C910.0 53.2 902.5 56.6 906.0 57.0 C909.5 57.4 921.3 54.2 931.0 52.8 C940.7 51.4 958.5 49.3 964.0 48.6" stroke="#f28a3a" stroke-width="4.3" fill="none" stroke-dasharray="0 25 8 40 30 300"/>
<path d="M844.7 17.0 C849.2 18.8 861.8 23.3 872.0 27.5 C882.2 31.7 899.7 38.1 906.0 42.0 C912.3 45.9 910.0 48.2 910.0 50.7 C910.0 53.2 902.5 56.6 906.0 57.0 C909.5 57.4 921.3 54.2 931.0 52.8 C940.7 51.4 958.5 49.3 964.0 48.6" stroke="#e21d1d" stroke-width="4.3" fill="none" stroke-dasharray="0 115 12 300"/>
<path d="M844.7 17.0 C849.2 18.8 861.8 23.3 872.0 27.5 C882.2 31.7 899.7 38.1 906.0 42.0 C912.3 45.9 910.0 48.2 910.0 50.7 C910.0 53.2 902.5 56.6 906.0 57.0 C909.5 57.4 921.3 54.2 931.0 52.8 C940.7 51.4 958.5 49.3 964.0 48.6" stroke="#fff" stroke-width="1.3" fill="none" stroke-linejoin="round" opacity="0.95"/>
<path d="M825.6 0.0 C828.8 2.1 837.0 12.7 844.7 12.7 C852.4 12.7 867.5 2.1 872.0 0.0" stroke="#fff" stroke-width="6.3" fill="none" stroke-linejoin="round" stroke-linecap="round"/>
<path d="M825.6 0.0 C828.8 2.1 837.0 12.7 844.7 12.7 C852.4 12.7 867.5 2.1 872.0 0.0" stroke="#55cc55" stroke-width="4.3" fill="none" stroke-linejoin="round" stroke-linecap="round"/>
<path d="M825.6 0.0 C828.8 2.1 837.0 12.7 844.7 12.7 C852.4 12.7 867.5 2.1 872.0 0.0" stroke="#f28a3a" stroke-width="4.3" fill="none" stroke-dasharray="0 8 20 100"/>
<path d="M825.6 0.0 C828.8 2.1 837.0 12.7 844.7 12.7 C852.4 12.7 867.5 2.1 872.0 0.0" stroke="#fff" stroke-width="1.3" fill="none" stroke-linejoin="round" opacity="0.95"/>
<path d="M868.0 124.7 C866.5 128.6 860.8 140.6 859.0 148.0 C857.2 155.4 857.3 165.5 857.0 169.0" stroke="#fff" stroke-width="6.3" fill="none" stroke-linejoin="round" stroke-linecap="round"/>
<path d="M868.0 124.7 C866.5 128.6 860.8 140.6 859.0 148.0 C857.2 155.4 857.3 165.5 857.0 169.0" stroke="#55cc55" stroke-width="4.3" fill="none" stroke-linejoin="round" stroke-linecap="round"/>
<path d="M868.0 124.7 C866.5 128.6 860.8 140.6 859.0 148.0 C857.2 155.4 857.3 165.5 857.0 169.0" stroke="#fff" stroke-width="1.3" fill="none" stroke-linejoin="round" opacity="0.95"/>
<path d="M815.0 133.0 L817.0 169.0" stroke="#fff" stroke-width="6.3" fill="none" stroke-linejoin="round" stroke-linecap="round"/>
<path d="M815.0 133.0 L817.0 169.0" stroke="#55cc55" stroke-width="4.3" fill="none" stroke-linejoin="round" stroke-linecap="round"/>
<path d="M815.0 133.0 L817.0 169.0" stroke="#f28a3a" stroke-width="4.3" fill="none" stroke-dasharray="0 10 10 100"/>
<path d="M815.0 133.0 L817.0 169.0" stroke="#fff" stroke-width="1.3" fill="none" stroke-linejoin="round" opacity="0.95"/>
<path d="M878.5 129.0 L889.0 169.0" stroke="#fff" stroke-width="6.3" fill="none" stroke-linejoin="round" stroke-linecap="round"/>
<path d="M878.5 129.0 L889.0 169.0" stroke="#55cc55" stroke-width="4.3" fill="none" stroke-linejoin="round" stroke-linecap="round"/>
<path d="M878.5 129.0 L889.0 169.0" stroke="#fff" stroke-width="1.3" fill="none" stroke-linejoin="round" opacity="0.95"/>
<path d="M720.0 99.0 C721.8 103.7 727.1 115.3 730.6 127.0 C734.1 138.7 739.3 162.0 741.0 169.0" stroke="#fff" stroke-width="6.5" fill="none" stroke-linejoin="round" stroke-linecap="round"/>
<path d="M720.0 99.0 C721.8 103.7 727.1 115.3 730.6 127.0 C734.1 138.7 739.3 162.0 741.0 169.0" stroke="#55cc55" stroke-width="4.5" fill="none" stroke-linejoin="round" stroke-linecap="round"/>
<path d="M720.0 99.0 C721.8 103.7 727.1 115.3 730.6 127.0 C734.1 138.7 739.3 162.0 741.0 169.0" stroke="#fff" stroke-width="1.3" fill="none" stroke-linejoin="round" opacity="0.95"/>
<path d="M962.0 30.0 C961.7 35.0 959.7 53.3 960.0 60.0 C960.3 66.7 963.3 68.3 964.0 70.0" stroke="#fff" stroke-width="6.3" fill="none" stroke-linejoin="round" stroke-linecap="round"/>
<path d="M962.0 30.0 C961.7 35.0 959.7 53.3 960.0 60.0 C960.3 66.7 963.3 68.3 964.0 70.0" stroke="#55cc55" stroke-width="4.3" fill="none" stroke-linejoin="round" stroke-linecap="round"/>
<path d="M962.0 30.0 C961.7 35.0 959.7 53.3 960.0 60.0 C960.3 66.7 963.3 68.3 964.0 70.0" stroke="#fff" stroke-width="1.3" fill="none" stroke-linejoin="round" opacity="0.95"/>
<path d="M940.0 115.0 L964.0 105.0" stroke="#fff" stroke-width="6.3" fill="none" stroke-linejoin="round" stroke-linecap="round"/>
<path d="M940.0 115.0 L964.0 105.0" stroke="#55cc55" stroke-width="4.3" fill="none" stroke-linejoin="round" stroke-linecap="round"/>
<path d="M940.0 115.0 L964.0 105.0" stroke="#fff" stroke-width="1.3" fill="none" stroke-linejoin="round" opacity="0.95"/>
<path d="M950.0 130.0 L964.0 150.0" stroke="#fff" stroke-width="6.3" fill="none" stroke-linejoin="round" stroke-linecap="round"/>
<path d="M950.0 130.0 L964.0 150.0" stroke="#55cc55" stroke-width="4.3" fill="none" stroke-linejoin="round" stroke-linecap="round"/>
<path d="M950.0 130.0 L964.0 150.0" stroke="#fff" stroke-width="1.3" fill="none" stroke-linejoin="round" opacity="0.95"/>
<path d="M610.0 0.0 C615.0 1.7 628.3 10.0 640.0 10.0 C651.7 10.0 673.3 1.7 680.0 0.0" stroke="#fff" stroke-width="6.3" fill="none" stroke-linejoin="round" stroke-linecap="round"/>
<path d="M610.0 0.0 C615.0 1.7 628.3 10.0 640.0 10.0 C651.7 10.0 673.3 1.7 680.0 0.0" stroke="#55cc55" stroke-width="4.3" fill="none" stroke-linejoin="round" stroke-linecap="round"/>
<path d="M610.0 0.0 C615.0 1.7 628.3 10.0 640.0 10.0 C651.7 10.0 673.3 1.7 680.0 0.0" stroke="#f28a3a" stroke-width="4.3" fill="none" stroke-dasharray="0 0 30 100"/>
<path d="M610.0 0.0 C615.0 1.7 628.3 10.0 640.0 10.0 C651.7 10.0 673.3 1.7 680.0 0.0" stroke="#fff" stroke-width="1.3" fill="none" stroke-linejoin="round" opacity="0.95"/>
<path d="M363.0 15.0 C364.7 13.6 369.2 8.0 373.0 6.6 C376.8 5.2 382.5 7.1 386.0 6.6 C389.5 6.0 390.7 4.1 394.0 3.3 C397.3 2.5 404.0 1.9 406.0 1.6" stroke="#fff" stroke-width="6.3" fill="none" stroke-linejoin="round" stroke-linecap="round"/>
<path d="M363.0 15.0 C364.7 13.6 369.2 8.0 373.0 6.6 C376.8 5.2 382.5 7.1 386.0 6.6 C389.5 6.0 390.7 4.1 394.0 3.3 C397.3 2.5 404.0 1.9 406.0 1.6" stroke="#e21d1d" stroke-width="4.3" fill="none" stroke-linejoin="round" stroke-linecap="round"/>
<path d="M363.0 15.0 C364.7 13.6 369.2 8.0 373.0 6.6 C376.8 5.2 382.5 7.1 386.0 6.6 C389.5 6.0 390.7 4.1 394.0 3.3 C397.3 2.5 404.0 1.9 406.0 1.6" stroke="#861616" stroke-width="4.3" fill="none" stroke-dasharray="0 18 6 100"/>
<path d="M363.0 15.0 C364.7 13.6 369.2 8.0 373.0 6.6 C376.8 5.2 382.5 7.1 386.0 6.6 C389.5 6.0 390.7 4.1 394.0 3.3 C397.3 2.5 404.0 1.9 406.0 1.6" stroke="#fff" stroke-width="1.3" fill="none" stroke-linejoin="round" opacity="0.95"/>
<path d="M361.0 28.0 C364.3 28.5 374.9 31.6 381.0 31.0 C387.1 30.4 392.6 26.3 397.5 24.6 C402.4 22.9 408.5 21.6 410.7 21.0" stroke="#fff" stroke-width="6.3" fill="none" stroke-linejoin="round" stroke-linecap="round"/>
<path d="M361.0 28.0 C364.3 28.5 374.9 31.6 381.0 31.0 C387.1 30.4 392.6 26.3 397.5 24.6 C402.4 22.9 408.5 21.6 410.7 21.0" stroke="#f28a3a" stroke-width="4.3" fill="none" stroke-linejoin="round" stroke-linecap="round"/>
<path d="M361.0 28.0 C364.3 28.5 374.9 31.6 381.0 31.0 C387.1 30.4 392.6 26.3 397.5 24.6 C402.4 22.9 408.5 21.6 410.7 21.0" stroke="#55cc55" stroke-width="4.3" fill="none" stroke-dasharray="0 30 10 100"/>
<path d="M361.0 28.0 C364.3 28.5 374.9 31.6 381.0 31.0 C387.1 30.4 392.6 26.3 397.5 24.6 C402.4 22.9 408.5 21.6 410.7 21.0" stroke="#fff" stroke-width="1.3" fill="none" stroke-linejoin="round" opacity="0.95"/>
<path d="M402.5 0.0 C403.0 2.7 405.7 10.9 405.7 16.4 C405.7 21.9 403.9 26.7 402.5 33.0 C401.1 39.3 399.1 47.2 397.5 54.0 C395.9 60.8 394.2 68.0 392.6 74.0 C391.0 80.0 389.4 85.7 387.7 90.0 C386.0 94.3 383.5 98.3 382.7 100.0" stroke="#fff" stroke-width="6.3" fill="none" stroke-linejoin="round" stroke-linecap="round"/>
<path d="M402.5 0.0 C403.0 2.7 405.7 10.9 405.7 16.4 C405.7 21.9 403.9 26.7 402.5 33.0 C401.1 39.3 399.1 47.2 397.5 54.0 C395.9 60.8 394.2 68.0 392.6 74.0 C391.0 80.0 389.4 85.7 387.7 90.0 C386.0 94.3 383.5 98.3 382.7 100.0" stroke="#55cc55" stroke-width="4.3" fill="none" stroke-linejoin="round" stroke-linecap="round"/>
<path d="M402.5 0.0 C403.0 2.7 405.7 10.9 405.7 16.4 C405.7 21.9 403.9 26.7 402.5 33.0 C401.1 39.3 399.1 47.2 397.5 54.0 C395.9 60.8 394.2 68.0 392.6 74.0 C391.0 80.0 389.4 85.7 387.7 90.0 C386.0 94.3 383.5 98.3 382.7 100.0" stroke="#f28a3a" stroke-width="4.3" fill="none" stroke-dasharray="0 10 15 20 25 200"/>
<path d="M402.5 0.0 C403.0 2.7 405.7 10.9 405.7 16.4 C405.7 21.9 403.9 26.7 402.5 33.0 C401.1 39.3 399.1 47.2 397.5 54.0 C395.9 60.8 394.2 68.0 392.6 74.0 C391.0 80.0 389.4 85.7 387.7 90.0 C386.0 94.3 383.5 98.3 382.7 100.0" stroke="#e21d1d" stroke-width="4.3" fill="none" stroke-dasharray="0 60 8 200"/>
<path d="M402.5 0.0 C403.0 2.7 405.7 10.9 405.7 16.4 C405.7 21.9 403.9 26.7 402.5 33.0 C401.1 39.3 399.1 47.2 397.5 54.0 C395.9 60.8 394.2 68.0 392.6 74.0 C391.0 80.0 389.4 85.7 387.7 90.0 C386.0 94.3 383.5 98.3 382.7 100.0" stroke="#fff" stroke-width="1.3" fill="none" stroke-linejoin="round" opacity="0.95"/>
<path d="M412.0 21.0 C414.2 21.8 421.1 25.7 425.5 26.0 C429.9 26.3 435.0 24.3 438.6 23.0 C442.2 21.7 444.3 20.2 447.0 18.0 C449.7 15.8 450.9 13.0 455.0 10.0 C459.1 7.0 468.8 1.7 471.5 0.0" stroke="#fff" stroke-width="6.3" fill="none" stroke-linejoin="round" stroke-linecap="round"/>
<path d="M412.0 21.0 C414.2 21.8 421.1 25.7 425.5 26.0 C429.9 26.3 435.0 24.3 438.6 23.0 C442.2 21.7 444.3 20.2 447.0 18.0 C449.7 15.8 450.9 13.0 455.0 10.0 C459.1 7.0 468.8 1.7 471.5 0.0" stroke="#55cc55" stroke-width="4.3" fill="none" stroke-linejoin="round" stroke-linecap="round"/>
<path d="M412.0 21.0 C414.2 21.8 421.1 25.7 425.5 26.0 C429.9 26.3 435.0 24.3 438.6 23.0 C442.2 21.7 444.3 20.2 447.0 18.0 C449.7 15.8 450.9 13.0 455.0 10.0 C459.1 7.0 468.8 1.7 471.5 0.0" stroke="#e21d1d" stroke-width="4.3" fill="none" stroke-dasharray="0 5 12 100"/>
<path d="M412.0 21.0 C414.2 21.8 421.1 25.7 425.5 26.0 C429.9 26.3 435.0 24.3 438.6 23.0 C442.2 21.7 444.3 20.2 447.0 18.0 C449.7 15.8 450.9 13.0 455.0 10.0 C459.1 7.0 468.8 1.7 471.5 0.0" stroke="#fff" stroke-width="1.3" fill="none" stroke-linejoin="round" opacity="0.95"/>
<path d="M420.5 10.0 C420.8 13.3 422.0 22.5 422.0 29.6 C422.0 36.7 418.8 47.1 420.5 52.6 C422.2 58.1 427.9 59.2 432.0 62.4 C436.1 65.6 441.2 65.7 445.0 72.0 C448.8 78.3 453.3 95.3 455.0 100.0" stroke="#fff" stroke-width="6.3" fill="none" stroke-linejoin="round" stroke-linecap="round"/>
<path d="M420.5 10.0 C420.8 13.3 422.0 22.5 422.0 29.6 C422.0 36.7 418.8 47.1 420.5 52.6 C422.2 58.1 427.9 59.2 432.0 62.4 C436.1 65.6 441.2 65.7 445.0 72.0 C448.8 78.3 453.3 95.3 455.0 100.0" stroke="#55cc55" stroke-width="4.3" fill="none" stroke-linejoin="round" stroke-linecap="round"/>
<path d="M420.5 10.0 C420.8 13.3 422.0 22.5 422.0 29.6 C422.0 36.7 418.8 47.1 420.5 52.6 C422.2 58.1 427.9 59.2 432.0 62.4 C436.1 65.6 441.2 65.7 445.0 72.0 C448.8 78.3 453.3 95.3 455.0 100.0" stroke="#f28a3a" stroke-width="4.3" fill="none" stroke-dasharray="0 40 10 200"/>
<path d="M420.5 10.0 C420.8 13.3 422.0 22.5 422.0 29.6 C422.0 36.7 418.8 47.1 420.5 52.6 C422.2 58.1 427.9 59.2 432.0 62.4 C436.1 65.6 441.2 65.7 445.0 72.0 C448.8 78.3 453.3 95.3 455.0 100.0" stroke="#fff" stroke-width="1.3" fill="none" stroke-linejoin="round" opacity="0.95"/>
<path d="M458.0 37.8 C461.8 38.9 475.2 45.2 481.0 44.4 C486.8 43.6 491.8 38.2 493.0 33.0 C494.2 27.8 490.0 18.5 488.0 13.0 C486.0 7.5 482.2 2.2 481.0 0.0" stroke="#fff" stroke-width="6.3" fill="none" stroke-linejoin="round" stroke-linecap="round"/>
<path d="M458.0 37.8 C461.8 38.9 475.2 45.2 481.0 44.4 C486.8 43.6 491.8 38.2 493.0 33.0 C494.2 27.8 490.0 18.5 488.0 13.0 C486.0 7.5 482.2 2.2 481.0 0.0" stroke="#55cc55" stroke-width="4.3" fill="none" stroke-linejoin="round" stroke-linecap="round"/>
<path d="M458.0 37.8 C461.8 38.9 475.2 45.2 481.0 44.4 C486.8 43.6 491.8 38.2 493.0 33.0 C494.2 27.8 490.0 18.5 488.0 13.0 C486.0 7.5 482.2 2.2 481.0 0.0" stroke="#fff" stroke-width="1.3" fill="none" stroke-linejoin="round" opacity="0.95"/>
<path d="M420.5 54.0 C423.5 51.8 434.2 44.5 438.6 41.0 C443.0 37.5 445.6 34.3 447.0 33.0" stroke="#fff" stroke-width="6.3" fill="none" stroke-linejoin="round" stroke-linecap="round"/>
<path d="M420.5 54.0 C423.5 51.8 434.2 44.5 438.6 41.0 C443.0 37.5 445.6 34.3 447.0 33.0" stroke="#55cc55" stroke-width="4.3" fill="none" stroke-linejoin="round" stroke-linecap="round"/>
<path d="M420.5 54.0 C423.5 51.8 434.2 44.5 438.6 41.0 C443.0 37.5 445.6 34.3 447.0 33.0" stroke="#f28a3a" stroke-width="4.3" fill="none" stroke-dasharray="0 5 10 100"/>
<path d="M420.5 54.0 C423.5 51.8 434.2 44.5 438.6 41.0 C443.0 37.5 445.6 34.3 447.0 33.0" stroke="#fff" stroke-width="1.3" fill="none" stroke-linejoin="round" opacity="0.95"/>
<path d="M445.0 49.0 C441.2 52.3 428.0 62.7 422.0 69.0 C416.0 75.3 412.8 81.8 409.0 87.0 C405.2 92.2 400.7 97.8 399.0 100.0" stroke="#fff" stroke-width="6.3" fill="none" stroke-linejoin="round" stroke-linecap="round"/>
<path d="M445.0 49.0 C441.2 52.3 428.0 62.7 422.0 69.0 C416.0 75.3 412.8 81.8 409.0 87.0 C405.2 92.2 400.7 97.8 399.0 100.0" stroke="#f28a3a" stroke-width="4.3" fill="none" stroke-linejoin="round" stroke-linecap="round"/>
<path d="M445.0 49.0 C441.2 52.3 428.0 62.7 422.0 69.0 C416.0 75.3 412.8 81.8 409.0 87.0 C405.2 92.2 400.7 97.8 399.0 100.0" stroke="#e21d1d" stroke-width="4.3" fill="none" stroke-dasharray="0 25 6 200"/>
<path d="M445.0 49.0 C441.2 52.3 428.0 62.7 422.0 69.0 C416.0 75.3 412.8 81.8 409.0 87.0 C405.2 92.2 400.7 97.8 399.0 100.0" stroke="#861616" stroke-width="4.3" fill="none" stroke-dasharray="0 33 4 200"/>
<path d="M445.0 49.0 C441.2 52.3 428.0 62.7 422.0 69.0 C416.0 75.3 412.8 81.8 409.0 87.0 C405.2 92.2 400.7 97.8 399.0 100.0" stroke="#fff" stroke-width="1.3" fill="none" stroke-linejoin="round" opacity="0.95"/>
<path d="M483.0 100.0 C483.8 94.3 486.7 73.1 488.0 66.0 C489.3 58.9 490.5 58.9 491.0 57.5" stroke="#fff" stroke-width="6.3" fill="none" stroke-linejoin="round" stroke-linecap="round"/>
<path d="M483.0 100.0 C483.8 94.3 486.7 73.1 488.0 66.0 C489.3 58.9 490.5 58.9 491.0 57.5" stroke="#55cc55" stroke-width="4.3" fill="none" stroke-linejoin="round" stroke-linecap="round"/>
<path d="M483.0 100.0 C483.8 94.3 486.7 73.1 488.0 66.0 C489.3 58.9 490.5 58.9 491.0 57.5" stroke="#fff" stroke-width="1.3" fill="none" stroke-linejoin="round" opacity="0.95"/>
<path d="M540.0 57.5 L534.0 100.0" stroke="#fff" stroke-width="6.3" fill="none" stroke-linejoin="round" stroke-linecap="round"/>
<path d="M540.0 57.5 L534.0 100.0" stroke="#55cc55" stroke-width="4.3" fill="none" stroke-linejoin="round" stroke-linecap="round"/>
<path d="M540.0 57.5 L534.0 100.0" stroke="#f28a3a" stroke-width="4.3" fill="none" stroke-dasharray="0 15 10 100"/>
<path d="M540.0 57.5 L534.0 100.0" stroke="#fff" stroke-width="1.3" fill="none" stroke-linejoin="round" opacity="0.95"/>
<text x="341" y="28.5" font-family="Liberation Sans" font-size="11" font-weight="bold" letter-spacing="1.6" fill="#5b6b80" text-anchor="start" stroke="#fff" stroke-width="2.5" paint-order="stroke" stroke-opacity="0.85">ITAIM BIBI</text>
<text x="328.5" y="51" font-family="Liberation Sans" font-size="11" font-weight="bold" letter-spacing="1.6" fill="#5b6b80" text-anchor="start" stroke="#fff" stroke-width="2.5" paint-order="stroke" stroke-opacity="0.85">VILA OLIMPIA</text>
<text x="251.5" y="61" font-family="Liberation Sans" font-size="11" font-weight="bold" letter-spacing="1.6" fill="#5b6b80" text-anchor="start" stroke="#fff" stroke-width="2.5" paint-order="stroke" stroke-opacity="0.85">MORUMBI</text>
<text x="344" y="83.5" font-family="Liberation Sans" font-size="11" font-weight="bold" letter-spacing="1.6" fill="#5b6b80" text-anchor="middle" stroke="#fff" stroke-width="2.5" paint-order="stroke" stroke-opacity="0.85">CIDADE</text>
<text x="344" y="96" font-family="Liberation Sans" font-size="11" font-weight="bold" letter-spacing="1.6" fill="#5b6b80" text-anchor="middle" stroke="#fff" stroke-width="2.5" paint-order="stroke" stroke-opacity="0.85">MONÇÕES</text>
<text x="242" y="103.5" font-family="Liberation Sans" font-size="8" font-weight="bold" letter-spacing="0.2" fill="#5b6b80" text-anchor="start" stroke="#fff" stroke-width="2.5" paint-order="stroke" stroke-opacity="0.85">PARAISÓPOLIS</text>
<text x="358" y="125.7" font-family="Liberation Sans" font-size="11" font-weight="bold" letter-spacing="1.6" fill="#5b6b80" text-anchor="start" stroke="#fff" stroke-width="2.5" paint-order="stroke" stroke-opacity="0.85">CAMPO BELO</text>
<text x="428" y="165" font-family="Liberation Sans" font-size="11" font-weight="bold" letter-spacing="1.6" fill="#5b6b80" text-anchor="start" stroke="#fff" stroke-width="2.5" paint-order="stroke" stroke-opacity="0.85">JABAQUARA</text>
<text x="192" y="148" font-family="Liberation Sans" font-size="11" font-weight="bold" letter-spacing="1.6" fill="#5b6b80" text-anchor="start" stroke="#fff" stroke-width="2.5" paint-order="stroke" stroke-opacity="0.85">VILA ANDRADE</text>
<text x="282" y="170" font-family="Liberation Sans" font-size="8" font-weight="bold" letter-spacing="0.2" fill="#5b6b80" text-anchor="start" stroke="#fff" stroke-width="2.5" paint-order="stroke" stroke-opacity="0.85">VILA CRUZEIRO</text>
<text x="577" y="9.5" font-family="Liberation Sans" font-size="11" font-weight="bold" letter-spacing="1.6" fill="#5b6b80" text-anchor="start" stroke="#fff" stroke-width="2.5" paint-order="stroke" stroke-opacity="0.85">VILA PRUDENTE</text>
<text x="687" y="35" font-family="Liberation Sans" font-size="11" font-weight="bold" letter-spacing="1.6" fill="#5b6b80" text-anchor="start" stroke="#fff" stroke-width="2.5" paint-order="stroke" stroke-opacity="0.85">VILA EMA</text>
<text x="705" y="54" font-family="Liberation Sans" font-size="8" font-weight="bold" letter-spacing="0.2" fill="#5b6b80" text-anchor="middle" stroke="#fff" stroke-width="2.5" paint-order="stroke" stroke-opacity="0.85">PARQUE</text>
<text x="705" y="62" font-family="Liberation Sans" font-size="8" font-weight="bold" letter-spacing="0.2" fill="#5b6b80" text-anchor="middle" stroke="#fff" stroke-width="2.5" paint-order="stroke" stroke-opacity="0.85">SAO LUCAS</text>
<text x="601" y="99" font-family="Liberation Sans" font-size="8" font-weight="bold" letter-spacing="0.2" fill="#5b6b80" text-anchor="middle" stroke="#fff" stroke-width="2.5" paint-order="stroke" stroke-opacity="0.85">CIDADE NOVA</text>
<text x="601" y="107" font-family="Liberation Sans" font-size="8" font-weight="bold" letter-spacing="0.2" fill="#5b6b80" text-anchor="middle" stroke="#fff" stroke-width="2.5" paint-order="stroke" stroke-opacity="0.85">HELIÓPOLIS</text>
<text x="567.5" y="120" font-family="Liberation Sans" font-size="8" font-weight="bold" letter-spacing="0.2" fill="#5b6b80" text-anchor="middle" stroke="#fff" stroke-width="2.5" paint-order="stroke" stroke-opacity="0.85">VILA VERA</text>
<text x="473" y="116" font-family="Liberation Sans" font-size="11" font-weight="bold" letter-spacing="1.6" fill="#5b6b80" text-anchor="start" stroke="#fff" stroke-width="2.5" paint-order="stroke" stroke-opacity="0.85">SAÚDE</text>
<text x="873" y="73" font-family="Liberation Sans" font-size="11" font-weight="bold" letter-spacing="1.6" fill="#5b6b80" text-anchor="middle" stroke="#fff" stroke-width="2.5" paint-order="stroke" stroke-opacity="0.85">CIDADE SÃO</text>
<text x="873" y="85.6" font-family="Liberation Sans" font-size="11" font-weight="bold" letter-spacing="1.6" fill="#5b6b80" text-anchor="middle" stroke="#fff" stroke-width="2.5" paint-order="stroke" stroke-opacity="0.85">MATEUS</text>
<text x="132" y="126" font-family="Liberation Sans" font-size="12.5" font-weight="normal" letter-spacing="0" fill="#4a4f57" text-anchor="middle" stroke="#fff" stroke-width="2.5" paint-order="stroke" stroke-opacity="0.85">Taboão</text>
<text x="132" y="138" font-family="Liberation Sans" font-size="12.5" font-weight="normal" letter-spacing="0" fill="#4a4f57" text-anchor="middle" stroke="#fff" stroke-width="2.5" paint-order="stroke" stroke-opacity="0.85">da Serra</text>
<text x="690" y="124" font-family="Liberation Sans" font-size="12.5" font-weight="normal" letter-spacing="0" fill="#4a4f57" text-anchor="middle" stroke="#fff" stroke-width="2.5" paint-order="stroke" stroke-opacity="0.85">São Caetano</text>
<text x="690" y="137" font-family="Liberation Sans" font-size="12.5" font-weight="normal" letter-spacing="0" fill="#4a4f57" text-anchor="middle" stroke="#fff" stroke-width="2.5" paint-order="stroke" stroke-opacity="0.85">do Sul</text>
<text x="453" y="56" font-family="Liberation Sans" font-size="11.5" font-weight="normal" letter-spacing="0" fill="#3a8fa8" text-anchor="start" stroke="#fff" stroke-width="2.5" paint-order="stroke" stroke-opacity="0.85">Aquário de São Paulo</text>
<text x="641" y="66" font-family="Liberation Sans" font-size="8.5" fill="#7a4b3a" stroke="#fff" stroke-width="1.5" paint-order="stroke" transform="rotate(33 641 66)">Av. do Estado</text>
<rect x="31" y="87" width="29" height="9" fill="#fff" stroke="#777" stroke-width="0.8" rx="1"/>
<text x="45.5" y="93.7" font-family="Liberation Sans" font-size="8" fill="#444" text-anchor="middle">SP-021</text>
<rect x="76" y="35" width="29" height="8" fill="#fff" stroke="#777" stroke-width="0.8" rx="1"/>
<text x="90.5" y="40.7" font-family="Liberation Sans" font-size="8" fill="#444" text-anchor="middle">SP-270</text>
<rect x="296" y="127" width="29" height="8.5" fill="#fff" stroke="#777" stroke-width="0.8" rx="1"/>
<text x="310.5" y="133.2" font-family="Liberation Sans" font-size="8" fill="#444" text-anchor="middle">SP-015</text>
<rect x="332" y="-2" width="28" height="8" fill="#fff" stroke="#777" stroke-width="0.8" rx="1"/>
<text x="346.0" y="3.7" font-family="Liberation Sans" font-size="8" fill="#444" text-anchor="middle">SP-015</text>
<rect x="151" y="81" width="16" height="11" fill="#fff" stroke="#777" stroke-width="0.8" rx="1"/>
<text x="159.0" y="89.7" font-family="Liberation Sans" font-size="8" fill="#444" text-anchor="middle">116</text>
<rect x="577" y="43" width="18" height="13" fill="#fff" stroke="#777" stroke-width="0.8" rx="1"/>
<text x="586.0" y="53.7" font-family="Liberation Sans" font-size="8" fill="#444" text-anchor="middle">050</text>
<circle cx="541" cy="29.6" r="6.2" fill="#27a8c8"/><path d="M538 32 q3 -6 6 -3" stroke="#fff" stroke-width="1.5" fill="none"/>
<path d="M491.5 74.8 C489 66 481 60 481 51.5 A10.5 10.5 0 0 1 502 51.5 C502 60 494 66 491.5 74.8z" fill="#ea4335" stroke="#c5221f" stroke-width="0.8"/><circle cx="491.5" cy="51.3" r="3.3" fill="#7a1b14"/>
<rect x="8.5" y="9.5" width="90.5" height="29" fill="#fff" filter="url(#sh)"/><line x1="50" y1="9.5" x2="50" y2="38.5" stroke="#e6e6e6"/>
<text x="29" y="27.5" font-family="Liberation Sans" font-size="10" fill="#222" text-anchor="middle">Mapa</text><text x="75" y="27.5" font-family="Liberation Sans" font-size="10" fill="#666" text-anchor="middle">Satélite</text>
<defs><filter id="sh" x="-10%" y="-10%" width="120%" height="130%"><feDropShadow dx="0" dy="1" stdDeviation="0.8" flood-opacity="0.25"/></filter></defs>
<rect x="931" y="9.5" width="20.5" height="20.5" fill="#fff" filter="url(#sh)"/>
<path d="M936 17.5v-3.5h3.5 M943.5 14h3.5v3.5 M947 22v3.5h-3.5 M939.5 25.5h-3.5v-3.5" stroke="#666" stroke-width="1.5" fill="none"/>
<rect x="932" y="71" width="22.5" height="23" fill="#fff" filter="url(#sh)"/>
<circle cx="943.2" cy="76.8" r="2.2" fill="#f2b300"/><path d="M940 79.5h6.4v6h-1.2v5h-1.5v-5h-0.9v5h-1.6v-5h-1.2z" fill="#f2b300"/>
<rect x="932" y="103.5" width="22.5" height="45.5" fill="#fff" filter="url(#sh)"/><line x1="936" y1="126" x2="950" y2="126" stroke="#e6e6e6"/>
<path d="M939 114.3h8.4M943.2 110.1v8.4" stroke="#666" stroke-width="1.8"/><path d="M939 137.5h8.4" stroke="#666" stroke-width="1.8"/>
<rect x="755" y="157" width="209" height="12" fill="#fff" opacity="0.55"/>
<text x="759" y="166.5" font-family="Liberation Sans" font-size="8.6" fill="#444">Dados cartográficos ©2018 Google</text><text x="958" y="166.5" font-family="Liberation Sans" font-size="8.6" fill="#444" text-anchor="end">Termos de Uso</text>
<text x="5.3" y="163.5" font-family="Liberation Sans" font-size="16" fill="#4285f4" stroke="#fff" stroke-width="2.2" paint-order="stroke" stroke-linejoin="round">G</text>
<text x="19.2" y="163.5" font-family="Liberation Sans" font-size="16" fill="#ea4335" stroke="#fff" stroke-width="2.2" paint-order="stroke" stroke-linejoin="round">o</text>
<text x="28.6" y="163.5" font-family="Liberation Sans" font-size="16" fill="#fbbc05" stroke="#fff" stroke-width="2.2" paint-order="stroke" stroke-linejoin="round">o</text>
<text x="38" y="163.5" font-family="Liberation Sans" font-size="16" fill="#4285f4" stroke="#fff" stroke-width="2.2" paint-order="stroke" stroke-linejoin="round">g</text>
<text x="47.2" y="163.5" font-family="Liberation Sans" font-size="16" fill="#34a853" stroke="#fff" stroke-width="2.2" paint-order="stroke" stroke-linejoin="round">l</text>
<text x="50.6" y="163.5" font-family="Liberation Sans" font-size="16" fill="#ea4335" stroke="#fff" stroke-width="2.2" paint-order="stroke" stroke-linejoin="round">e</text>
<text x="-1" y="36" font-family="Liberation Sans" font-size="9" font-weight="bold" fill="#5b6b80">NJ</text>
</svg></div>
<div class="panel" style="left:194px;top:557px;width:1015px;height:243px"></div>
<div class="band" style="left:295px;top:553.5px;width:914px"></div>
<div class="tab act" style="left:194px;top:525.5px;width:101px;padding-top:4px;line-height:24px">Financeiro</div>
<div class="tab" style="left:299px;top:529.5px;width:101px">Receita x Despesa</div>
<div class="tab" style="left:404px;top:529.5px;width:100px">Receitas</div>
<div class="tab" style="left:508px;top:529.5px;width:100px">Inadimplência</div>
<div class="tab" style="left:613px;top:529.5px;width:101px">Despesas</div>
<div class="tab" style="left:718px;top:529.5px;width:101px">Projeção</div>
<div class="tab" style="left:823px;top:529.5px;width:101px">Contas a Pagar</div>
<div class="tab" style="left:928px;top:529.5px;width:101px">Hora Extra</div>
<div class="a" id="resumo">Resumo Financeiro</div>
<div class="a th" style="left:228px;top:652px">Resumo Financeiro</div>
<div class="a th" style="left:699px;top:652px">Fechamento:</div>
<div class="a th" style="left:960px;top:652px">Saldo atual</div>
<div class="row" style="top:670px"></div>
<div class="row" style="top:697px"></div>
<div class="row" style="top:724px"></div>
<div class="row" style="top:751px"></div>
<div class="a td" style="left:228px;top:679px">ORDINÁRIA</div>
<div class="a td" style="left:699px;top:679px">0,00</div>
<div class="a td" style="left:960px;top:679px">8.906,38</div>
<div class="a td" style="left:228px;top:706px">CONTA IMPLANTAÇÃO</div>
<div class="a td" style="left:699px;top:706px">0,00</div>
<div class="a td" style="left:960px;top:706px">10.300,00</div>
<div class="a td" style="left:228px;top:733px">FUNDO DE INADIPLÊNCIA</div>
<div class="a td" style="left:699px;top:733px">0,00</div>
<div class="a td" style="left:960px;top:733px">408,00</div>
<div id="foot"></div>
<div class="a" id="copy">© liveFacilities</div>
<div class="sep" style="left:715.5px"></div>
<div class="a fbt" style="left:717.0px">AGENDA DE<br>GESTÃO</div>
<div class="sep" style="left:771.2px"></div>
<div class="a fbt" style="left:772.8px"></div>
<div class="sep" style="left:827.0px"></div>
<div class="a fbt" style="left:828.5px">RELATÓRIO<br>OPERACIONAL</div>
<div class="sep" style="left:882.8px"></div>
<div class="a fbt" style="left:884.2px">LISTA PEDIDOS<br>(COMPRAS)</div>
<div class="sep" style="left:938.5px"></div>
<div class="a fbt" style="left:940.0px">CERTIFICADO<br>DIGITAL - LISTA</div>
<div class="sep" style="left:994.2px"></div>
<div class="a fbt" style="left:995.8px">LISTA GERAL DE<br>CONTAS</div>
<div class="sep" style="left:1050.0px"></div>
<div class="a fbt" style="left:1051.5px">CADASTRO<br>FORNECEDOR</div>
<div class="sep" style="left:1105.8px"></div>
<div class="a fbt" style="left:1107.2px">HOME</div>
<div class="sep" style="left:1161.5px"></div>
<div class="a fbt" style="left:1163.0px">SAIR</div>
<svg width="502" height="42" viewBox="715 758 502 42" style="position:absolute;left:715px;top:758px">
<g fill="#fff">
<rect x="735.5" y="764" width="17" height="15.5" rx="1"/>
<rect x="738.5" y="761.5" width="2" height="4" rx="0.8"/><rect x="747.5" y="761.5" width="2" height="4" rx="0.8"/>
</g>
<g fill="#2b313c"><rect x="737.0" y="768.3" width="2.3" height="1.9"/><rect x="737.0" y="771.1" width="2.3" height="1.9"/><rect x="737.0" y="773.9" width="2.3" height="1.9"/><rect x="737.0" y="776.7" width="2.3" height="1.9"/><rect x="740.3" y="768.3" width="2.3" height="1.9"/><rect x="740.3" y="771.1" width="2.3" height="1.9"/><rect x="740.3" y="773.9" width="2.3" height="1.9"/><rect x="740.3" y="776.7" width="2.3" height="1.9"/><rect x="743.6" y="768.3" width="2.3" height="1.9"/><rect x="743.6" y="771.1" width="2.3" height="1.9"/><rect x="743.6" y="773.9" width="2.3" height="1.9"/><rect x="743.6" y="776.7" width="2.3" height="1.9"/><rect x="746.9" y="768.3" width="2.3" height="1.9"/><rect x="746.9" y="771.1" width="2.3" height="1.9"/><rect x="746.9" y="773.9" width="2.3" height="1.9"/><rect x="746.9" y="776.7" width="2.3" height="1.9"/></g>
<text x="799.5" y="771.8" font-family="Liberation Sans" font-size="6" font-weight="bold" fill="#fff" text-anchor="middle" textLength="24" lengthAdjust="spacingAndGlyphs">JURÍDICO</text>
<g stroke="#fff" fill="none"><path d="M799 773.5V788 M793 788.6h12.5 M789 775.3h21" stroke-width="1.4"/>
<path d="M792 775.5L788.5 783h7z M806.5 775.5L803 783h7z" stroke-width="1.1"/></g>
<path d="M788 783h8a4 3 0 0 1-8 0z M802.5 783h8a4 3 0 0 1-8 0z" fill="#fff"/>
<g fill="#fff"><path d="M845.5 762.5h1.6v13.5h18.5v1.6h-20.1z"/>
<rect x="849" y="769.5" width="2.4" height="6"/><rect x="852.7" y="766.5" width="2.4" height="9"/><rect x="856.4" y="768.5" width="2.4" height="7"/><rect x="860.1" y="764.5" width="2.4" height="11"/>
<rect x="904" y="764.5" width="15" height="2.6" rx="0.6"/><rect x="904" y="769.3" width="15" height="2.6" rx="0.6"/><rect x="904" y="774.1" width="15" height="2.6" rx="0.6"/>
</g>
<g stroke="#fff" stroke-width="1.8" fill="none"><path d="M962.5 767.5L958.8 771.5L962.5 775.5 M971.5 767.5L975.2 771.5L971.5 775.5"/><path d="M968.5 765.5L965.5 777.8" stroke-width="1.4"/></g>
<g fill="#fff"><rect x="1013.3" y="763.2" width="1.4" height="13.7"/><rect x="1015.5" y="763.2" width="0.7" height="13.7"/><rect x="1016.9" y="763.2" width="1.4" height="13.7"/><rect x="1019.1" y="763.2" width="0.7" height="13.7"/><rect x="1020.5" y="763.2" width="1.4" height="13.7"/><rect x="1022.6" y="763.2" width="1.4" height="13.7"/><rect x="1024.7" y="763.2" width="0.7" height="13.7"/><rect x="1026.1" y="763.2" width="1.4" height="13.7"/><rect x="1028.2" y="763.2" width="0.7" height="13.7"/><rect x="1029.6" y="763.2" width="1.4" height="13.7"/><rect x="1031.5" y="763.2" width="0.7" height="13.7"/></g>
<path d="M1076.5 763.5H1087.3a0.8 0.8 0 0 1 0.8 0.8V775H1071V769.5z" fill="#fff"/><path d="M1073 769L1076 765.8V769z" fill="#2b313c"/><circle cx="1074.8" cy="775.6" r="2.4" fill="#fff"/><circle cx="1083.6" cy="775.6" r="2.4" fill="#fff"/><circle cx="1074.8" cy="775.6" r="0.9" fill="#2b313c"/><circle cx="1083.6" cy="775.6" r="0.9" fill="#2b313c"/>
<g fill="#fff"><path d="M1126 771.2L1134.3 763.6L1142.5 771.2L1141.2 772.3L1134.3 766L1127.3 772.3z"/><path d="M1128.5 771.5L1134.3 766.4L1140 771.5V777H1136.3V773.3H1132.3V777H1128.5z"/><rect x="1138.3" y="764.5" width="1.8" height="3.5"/></g>
<path d="M1188.5 765.3h-3.2a2.2 2.2 0 0 0-2.2 2.2v6.2a2.2 2.2 0 0 0 2.2 2.2h3.2" stroke="#fff" stroke-width="2" fill="none"/><path d="M1186 768.2h5.5v-4.2l6.8 6.4l-6.8 6.4v-4.2h-5.5z" fill="#fff"/>
</svg>
</body></html>
